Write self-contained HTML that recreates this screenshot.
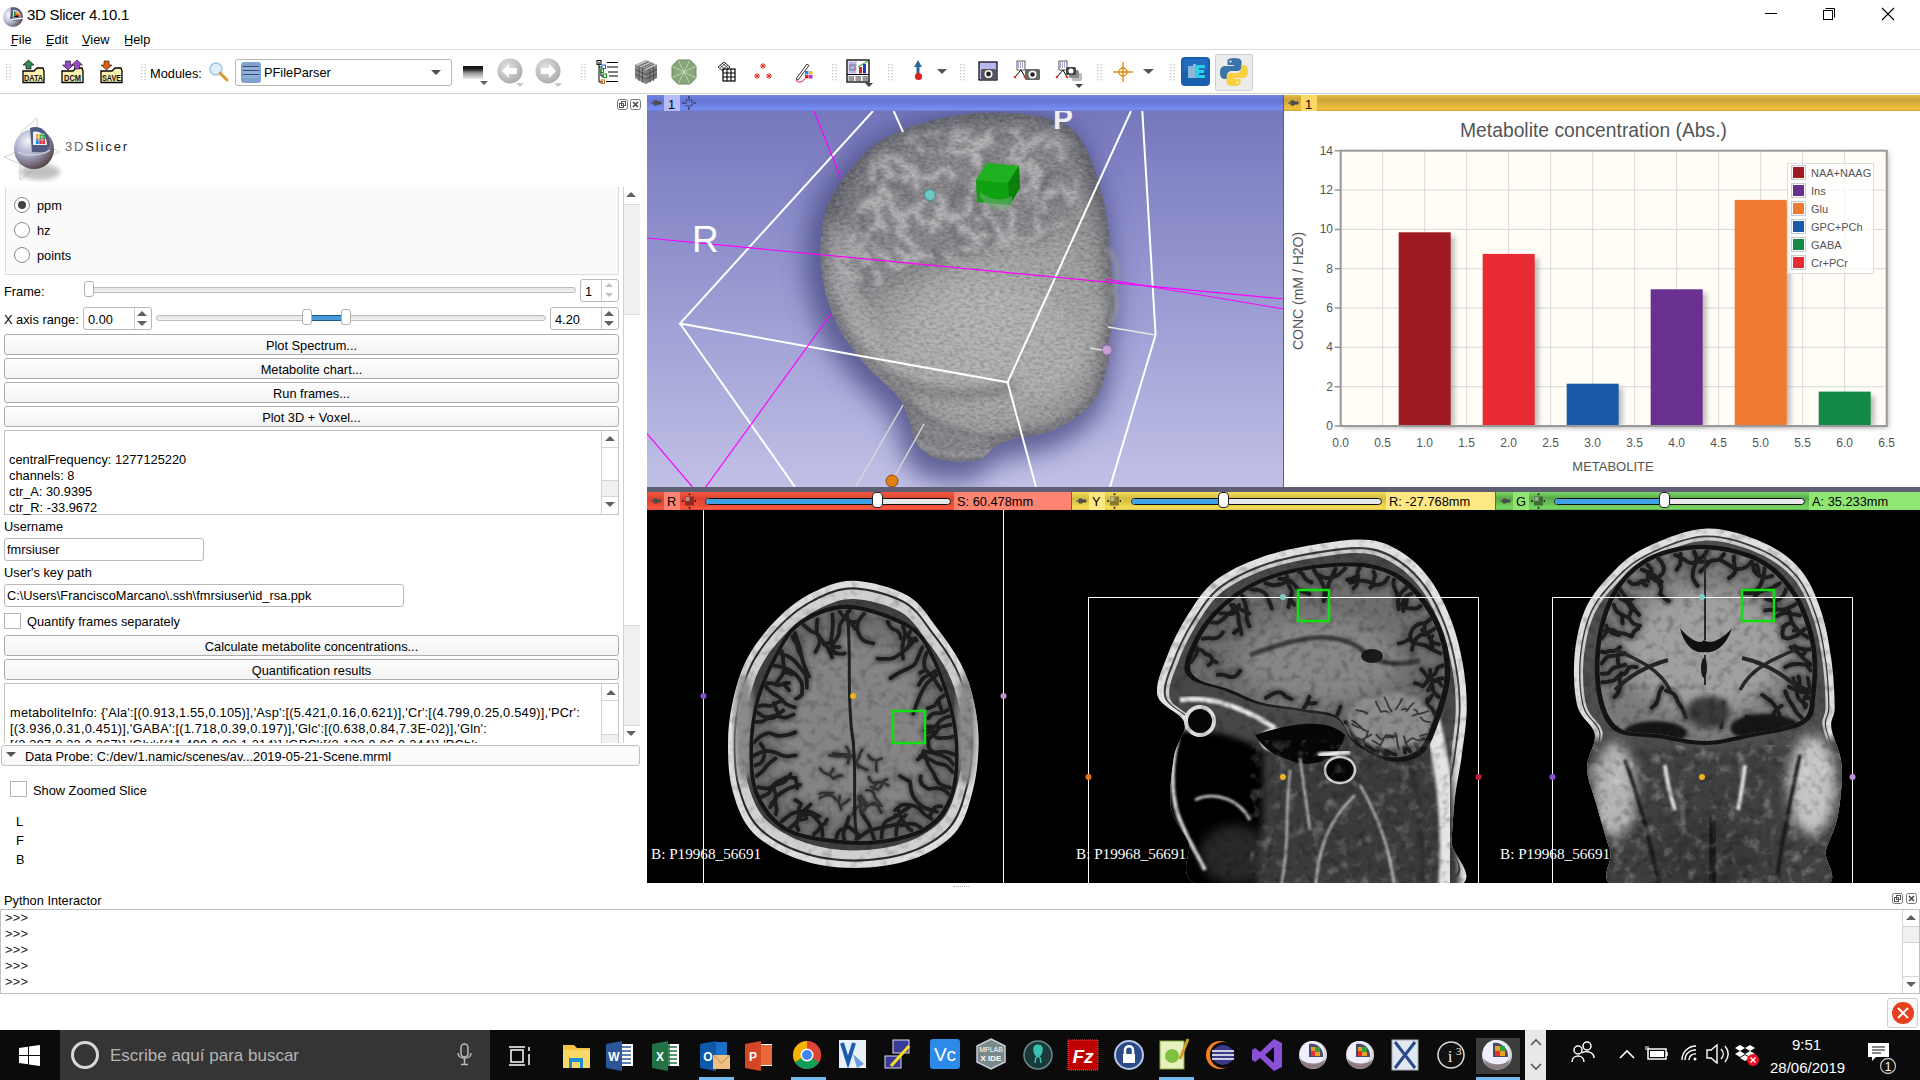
<!DOCTYPE html>
<html><head><meta charset="utf-8"><title>3D Slicer</title>
<style>
*{margin:0;padding:0;box-sizing:border-box}
html,body{width:1920px;height:1080px;overflow:hidden;background:#fff}
body{position:relative;font-family:"Liberation Sans",sans-serif;font-size:12.8px;color:#000}
.a{position:absolute}
.t{position:absolute;white-space:pre;line-height:1;margin-top:1px}
.hl{position:absolute;height:1px;background:#d6d6d6}
.btn{position:absolute;left:4px;width:615px;height:21px;border:1px solid #adadad;border-radius:3px;background:linear-gradient(#fdfdfd,#f3f3f3);text-align:center;line-height:21px;font-size:12.8px}
.inp{position:absolute;border:1px solid #b9b9b9;border-radius:2px;background:#fff}
.cb{position:absolute;width:17px;height:16px;border:1px solid #b5b5b5;background:#fff}
.radio{position:absolute;width:16px;height:16px;border:1px solid #8a8a8a;border-radius:50%;background:#fff}
.sb{position:absolute;background:#fff;border:1px solid #cfcfcf}
.tri-up{position:absolute;width:0;height:0;border-left:5px solid transparent;border-right:5px solid transparent;border-bottom:5px solid #606060}
.tri-dn{position:absolute;width:0;height:0;border-left:5px solid transparent;border-right:5px solid transparent;border-top:5px solid #606060}
.grip{position:absolute;width:3px;border-left:2px dotted #c8c8c8}

</style></head><body>
<!-- title bar -->
<svg class="a" style="left:1px;top:3px" width="24" height="24" viewBox="0 0 24 24">
 <defs><radialGradient id="sph" cx="30%" cy="40%" r="80%"><stop offset="0" stop-color="#fbfbfe"/><stop offset=".5" stop-color="#aeb2cc"/><stop offset=".85" stop-color="#6a5060"/><stop offset="1" stop-color="#402020"/></radialGradient></defs>
 <circle cx="12" cy="14" r="10" fill="url(#sph)"/>
 <path d="M10 4.5 C15 3.5 21 7 21.5 13 L21 16 C17 18 12 18 9 17.5 Z" fill="#5a6080"/>
 <path d="M12 7 C16 6.5 19.5 9 19.5 13.5 L12 14.5 Z" fill="#dde4ea"/>
 <path d="M13 8 L18.5 10 L18.5 13.5 L13 14Z" fill="#f0a020"/>
 <path d="M13 11 L18.5 12 L18.5 13.5 L13 14Z" fill="#e03018"/>
 <path d="M13 8 L14.5 8.5 L14.5 14 L13 14Z" fill="#208a40"/>
 <path d="M12 14 L16 12.5 L18 14Z" fill="#111"/>
 <path d="M9 17 C13 16 18 16 21.5 15" stroke="#f4f4f8" stroke-width="1.5" fill="none"/>
</svg>
<div class="t" style="left:27px;top:6px;font-size:15px;letter-spacing:-.3px;color:#000">3D Slicer 4.10.1</div>
<div class="a" style="left:1765px;top:13px;width:12px;height:1px;background:#000"></div>
<svg class="a" style="left:1822px;top:7px" width="14" height="14"><rect x="1.5" y="3.5" width="9" height="9" fill="none" stroke="#000"/><path d="M3.5 1.5 H12.5 V10.5" fill="none" stroke="#000"/></svg>
<svg class="a" style="left:1881px;top:7px" width="14" height="14"><path d="M1 1 L13 13 M13 1 L1 13" stroke="#000" stroke-width="1.1"/></svg>
<!-- menu -->
<div class="t" style="left:11px;top:33px">File</div>
<div class="t" style="left:46px;top:33px">Edit</div>
<div class="t" style="left:82px;top:33px">View</div>
<div class="t" style="left:124px;top:33px">Help</div>
<div class="a" style="left:11px;top:45px;width:6px;height:1px;background:#000"></div>
<div class="a" style="left:46px;top:45px;width:6px;height:1px;background:#000"></div>
<div class="a" style="left:82px;top:45px;width:7px;height:1px;background:#000"></div>
<div class="a" style="left:125px;top:45px;width:7px;height:1px;background:#000"></div>
<div class="hl" style="left:0;top:49px;width:1920px;background:#dadada"></div>
<!-- toolbar -->
<svg class="a" style="left:6px;top:64px" width="6" height="17" fill="#c4c4c4"><rect x="0" y="0" width="1.3" height="1.3"/><rect x="3.5" y="0" width="1.3" height="1.3"/><rect x="0" y="3" width="1.3" height="1.3"/><rect x="3.5" y="3" width="1.3" height="1.3"/><rect x="0" y="6" width="1.3" height="1.3"/><rect x="3.5" y="6" width="1.3" height="1.3"/><rect x="0" y="9" width="1.3" height="1.3"/><rect x="3.5" y="9" width="1.3" height="1.3"/><rect x="0" y="12" width="1.3" height="1.3"/><rect x="3.5" y="12" width="1.3" height="1.3"/><rect x="0" y="15" width="1.3" height="1.3"/><rect x="3.5" y="15" width="1.3" height="1.3"/></svg>
<svg class="a" style="left:20px;top:57px" width="130" height="30" viewBox="0 0 130 30">
 <g font-family="Liberation Sans" font-weight="bold" font-size="9" text-anchor="middle">
  <path d="M3 14 H14 L17 11 H23 L24 14 V25.5 H3Z" fill="#fbefb0" stroke="#000" stroke-width="1.3"/>
  <text x="13.5" y="24" fill="#111" font-size="8.5" textLength="19" lengthAdjust="spacingAndGlyphs">DATA</text>
  <path d="M8.5 3 L14 8 H11 V12 H6 V8 H3Z" fill="#2f8a55" stroke="#111" stroke-width=".7"/>
  <path d="M42 14 H53 L56 11 H62 L63 14 V25.5 H42Z" fill="#fbefb0" stroke="#000" stroke-width="1.3"/>
  <text x="52.5" y="24" fill="#111" font-size="8.5" textLength="17" lengthAdjust="spacingAndGlyphs">DCM</text>
  <path d="M48 13 L42.5 8 H45.5 V4 H50.5 V8 H53.5Z" fill="#9a4ac8" stroke="#111" stroke-width=".6"/>
  <path d="M57 3 L62.5 8 H59.5 V12 H54.5 V8 H51.5Z" fill="#9a4ac8" stroke="#111" stroke-width=".6"/>
  <path d="M81 14 H92 L95 11 H101 L102 14 V25.5 H81Z" fill="#fbefb0" stroke="#000" stroke-width="1.3"/>
  <text x="91.5" y="24" fill="#111" font-size="8.5" textLength="19" lengthAdjust="spacingAndGlyphs">SAVE</text>
  <path d="M86.5 13 L81 8 H84 V4 H89 V8 H92Z" fill="#e25c1a" stroke="#111" stroke-width=".6"/>
 </g>
</svg>
<svg class="a" style="left:141px;top:64px" width="6" height="17" fill="#c4c4c4"><rect x="0" y="0" width="1.3" height="1.3"/><rect x="3.5" y="0" width="1.3" height="1.3"/><rect x="0" y="3" width="1.3" height="1.3"/><rect x="3.5" y="3" width="1.3" height="1.3"/><rect x="0" y="6" width="1.3" height="1.3"/><rect x="3.5" y="6" width="1.3" height="1.3"/><rect x="0" y="9" width="1.3" height="1.3"/><rect x="3.5" y="9" width="1.3" height="1.3"/><rect x="0" y="12" width="1.3" height="1.3"/><rect x="3.5" y="12" width="1.3" height="1.3"/><rect x="0" y="15" width="1.3" height="1.3"/><rect x="3.5" y="15" width="1.3" height="1.3"/></svg>
<div class="t" style="left:150px;top:67px">Modules:</div>
<svg class="a" style="left:208px;top:61px" width="22" height="22"><circle cx="8" cy="8" r="6" fill="#dff0fb" stroke="#9cc6e0" stroke-width="1.5"/><path d="M12 12 L19 19" stroke="#d99a3a" stroke-width="3" stroke-linecap="round"/></svg>
<div class="a" style="left:235px;top:59px;width:217px;height:27px;border:1px solid #b8b8b8;border-radius:3px;background:#fff"></div>
<div class="a" style="left:241px;top:62px;width:20px;height:21px;border-radius:3px;background:#7fa3cf"></div>
<div class="a" style="left:243px;top:66px;width:16px;height:12px;background:repeating-linear-gradient(#3b4a6a 0 1px,#8fb0d8 1px 4px)"></div>
<div class="t" style="left:264px;top:66px;font-size:12.8px">PFileParser</div>
<div class="tri-dn" style="left:431px;top:70px;border-top-color:#505050"></div>
<!-- window level -->
<div class="a" style="left:463px;top:66px;width:20px;height:13px;background:linear-gradient(#111 0,#222 25%,#999 55%,#eee 100%)"></div>
<div class="tri-dn" style="left:480px;top:81px;border-left-width:4px;border-right-width:4px;border-top-width:4px"></div>
<svg class="a" style="left:496px;top:57px" width="80" height="32">
 <defs><radialGradient id="gb" cx="40%" cy="35%" r="70%"><stop offset="0" stop-color="#e4e4e4"/><stop offset="1" stop-color="#a9a9a9"/></radialGradient></defs>
 <circle cx="14" cy="14" r="12.5" fill="url(#gb)"/><path d="M6 14 L13 7 V11 H21 V17 H13 V21Z" fill="#fff"/>
 <circle cx="52" cy="14" r="12.5" fill="url(#gb)"/><path d="M60 14 L53 7 V11 H45 V17 H53 V21Z" fill="#fff"/>
 <path d="M20 26 H28 L24 30Z M58 26 H66 L62 30Z" fill="#c8c8c8"/>
</svg>
<svg class="a" style="left:581px;top:64px" width="6" height="17" fill="#c4c4c4"><rect x="0" y="0" width="1.3" height="1.3"/><rect x="3.5" y="0" width="1.3" height="1.3"/><rect x="0" y="3" width="1.3" height="1.3"/><rect x="3.5" y="3" width="1.3" height="1.3"/><rect x="0" y="6" width="1.3" height="1.3"/><rect x="3.5" y="6" width="1.3" height="1.3"/><rect x="0" y="9" width="1.3" height="1.3"/><rect x="3.5" y="9" width="1.3" height="1.3"/><rect x="0" y="12" width="1.3" height="1.3"/><rect x="3.5" y="12" width="1.3" height="1.3"/><rect x="0" y="15" width="1.3" height="1.3"/><rect x="3.5" y="15" width="1.3" height="1.3"/></svg>
<svg class="a" style="left:596px;top:60px" width="24" height="24"><path d="M3 2 V22 H7 M3 7 H6 M5 9 V16 H8" fill="none" stroke="#000"/><rect x="1" y="0.5" width="4" height="4" fill="none" stroke="#000"/><rect x="6" y="5" width="3.5" height="3.5" fill="none" stroke="#1a6ad0"/><rect x="4" y="9" width="3.5" height="3.5" fill="none" stroke="#1a8a1a"/><rect x="7" y="14" width="3.5" height="3.5" fill="none" stroke="#1a8a1a"/><rect x="5" y="20" width="3.5" height="3.5" fill="none" stroke="#e07010"/><path d="M11 2.5 H22 M11 7 H22 M12 12 H22 M13 16 H22 M10 21.5 H22" stroke="#000"/></svg>
<svg class="a" style="left:632px;top:57px" width="28" height="30"><path d="M3 8 L14 3 L25 8 V21 L14 27 L3 21Z" fill="#7a7a7a"/><path d="M3 8 L14 13 L25 8 L14 3Z" fill="#bdbdbd"/><path d="M14 13 V27 L3 21 V8Z" fill="#8a8a8a"/><path d="M6 9.5 L17 4.5 M9 11 L20 6 M11 12 L22 7 M3 12.5 L14 17.5 L25 12.5 M3 17 L14 22 L25 17 M7 10 V24 M10.5 11.5 V25.5 M18 11.5 V25.5 M21.5 10 V24" stroke="#444" stroke-width=".8" fill="none"/></svg>
<svg class="a" style="left:670px;top:58px" width="28" height="28"><path d="M8 2 H20 L26 8 V20 L20 26 H8 L2 20 V8Z" fill="#89a57a" stroke="#6a8a5c"/><path d="M8 2 L14 14 L20 2 M26 8 L14 14 L26 20 M20 26 L14 14 L8 26 M2 20 L14 14 L2 8" stroke="#c8dcb8" stroke-width=".8" fill="none"/></svg>
<svg class="a" style="left:716px;top:61px" width="22" height="22"><path d="M2 6 L8 1 L14 6 L8 11Z" fill="none" stroke="#000" stroke-width=".8"/><path d="M4 7 L10 2 M6 9 L12 4 M4 4 L10 9 M6 2 L12 7" stroke="#000" stroke-width=".6"/><rect x="7" y="8" width="12" height="12" fill="#fff" stroke="#000" stroke-width="1.2"/><path d="M11 8 V20 M15 8 V20 M7 12 H19 M7 16 H19" stroke="#000" stroke-width="1.1"/></svg>
<svg class="a" style="left:752px;top:61px" width="22" height="22" stroke="#e03020" stroke-width="1"><path d="M11 2 V8 M8 5 H14 M9 3 L13 7 M13 3 L9 7 M5 12 V18 M2 15 H8 M3 13 L7 17 M7 13 L3 17 M17 12 V18 M14 15 H20 M15 13 L19 17 M19 13 L15 17"/></svg>
<svg class="a" style="left:793px;top:60px" width="22" height="24"><path d="M3 19 L14 4 L16 5.5 L5 20Z" fill="#fff" stroke="#333" stroke-width="1"/><rect x="12" y="11" width="3.5" height="3.5" fill="#2a8ae0"/><rect x="16" y="11" width="3.5" height="3.5" fill="#f0c020"/><rect x="12" y="15" width="3.5" height="3.5" fill="#e02030"/><rect x="16" y="15" width="3.5" height="3.5" fill="#b030d0"/><path d="M3 20 Q6 25 12 19" fill="none" stroke="#e02030" stroke-width="1"/></svg>
<svg class="a" style="left:832px;top:64px" width="6" height="17" fill="#c4c4c4"><rect x="0" y="0" width="1.3" height="1.3"/><rect x="3.5" y="0" width="1.3" height="1.3"/><rect x="0" y="3" width="1.3" height="1.3"/><rect x="3.5" y="3" width="1.3" height="1.3"/><rect x="0" y="6" width="1.3" height="1.3"/><rect x="3.5" y="6" width="1.3" height="1.3"/><rect x="0" y="9" width="1.3" height="1.3"/><rect x="3.5" y="9" width="1.3" height="1.3"/><rect x="0" y="12" width="1.3" height="1.3"/><rect x="3.5" y="12" width="1.3" height="1.3"/><rect x="0" y="15" width="1.3" height="1.3"/><rect x="3.5" y="15" width="1.3" height="1.3"/></svg>
<svg class="a" style="left:846px;top:59px" width="28" height="30"><rect x="1" y="1" width="22" height="22" fill="#fff" stroke="#000" stroke-width="1.3"/><rect x="2.5" y="2.5" width="8" height="12" fill="#b8b8e8"/><rect x="4" y="6" width="5" height="5" fill="none" stroke="#555" stroke-width=".7"/><rect x="12" y="2.5" width="10" height="12" fill="#fff"/><rect x="13" y="8" width="3" height="6.5" fill="#e02020"/><rect x="17" y="5" width="3" height="9.5" fill="#2040c0"/><path d="M12 8 L22 2" stroke="#20a020"/><path d="M1 15.5 H23" stroke="#000"/><rect x="2.5" y="17" width="5.5" height="5" fill="#999"/><rect x="9.5" y="17" width="5.5" height="5" fill="#999"/><rect x="16.5" y="17" width="5.5" height="5" fill="#999"/><path d="M19 24 H27 L23 28Z" fill="#444"/></svg>
<svg class="a" style="left:888px;top:64px" width="6" height="17" fill="#c4c4c4"><rect x="0" y="0" width="1.3" height="1.3"/><rect x="3.5" y="0" width="1.3" height="1.3"/><rect x="0" y="3" width="1.3" height="1.3"/><rect x="3.5" y="3" width="1.3" height="1.3"/><rect x="0" y="6" width="1.3" height="1.3"/><rect x="3.5" y="6" width="1.3" height="1.3"/><rect x="0" y="9" width="1.3" height="1.3"/><rect x="3.5" y="9" width="1.3" height="1.3"/><rect x="0" y="12" width="1.3" height="1.3"/><rect x="3.5" y="12" width="1.3" height="1.3"/><rect x="0" y="15" width="1.3" height="1.3"/><rect x="3.5" y="15" width="1.3" height="1.3"/></svg>
<svg class="a" style="left:908px;top:59px" width="44" height="24"><path d="M10 1 L14 8 H11.5 V15 H8.5 V8 H6Z" fill="#2a6a9a"/><circle cx="10.5" cy="17.5" r="3.6" fill="#e02020"/><path d="M29 10 H39 L34 15Z" fill="#555"/></svg>
<svg class="a" style="left:960px;top:64px" width="6" height="17" fill="#c4c4c4"><rect x="0" y="0" width="1.3" height="1.3"/><rect x="3.5" y="0" width="1.3" height="1.3"/><rect x="0" y="3" width="1.3" height="1.3"/><rect x="3.5" y="3" width="1.3" height="1.3"/><rect x="0" y="6" width="1.3" height="1.3"/><rect x="3.5" y="6" width="1.3" height="1.3"/><rect x="0" y="9" width="1.3" height="1.3"/><rect x="3.5" y="9" width="1.3" height="1.3"/><rect x="0" y="12" width="1.3" height="1.3"/><rect x="3.5" y="12" width="1.3" height="1.3"/><rect x="0" y="15" width="1.3" height="1.3"/><rect x="3.5" y="15" width="1.3" height="1.3"/></svg>
<svg class="a" style="left:978px;top:61px" width="22" height="22"><rect x="1" y="1" width="18" height="18" fill="#b8b8f0" stroke="#000" stroke-width="1.2"/><rect x="3" y="8" width="15" height="10" rx="1.5" fill="#555"/><circle cx="10.5" cy="13" r="4" fill="#fff"/><circle cx="10.5" cy="13" r="2.4" fill="#222"/></svg>
<svg class="a" style="left:1012px;top:60px" width="30" height="24"><rect x="5" y="1" width="8" height="9" fill="#fff" stroke="#333" stroke-width=".8"/><path d="M6 3 H12 M6 5 H12 M6 7 H12" stroke="#55a" stroke-dasharray="1 1"/><path d="M9 10 L3 17 M9 10 L13 17" stroke="#000"/><circle cx="3" cy="17" r="1.3" fill="#e03020"/><circle cx="13" cy="17" r="1.3" fill="#e03020"/><rect x="13" y="9" width="15" height="11" rx="1.5" fill="#666"/><circle cx="20.5" cy="14.5" r="4" fill="#fff"/><circle cx="20.5" cy="14.5" r="2.3" fill="#222"/></svg>
<svg class="a" style="left:1054px;top:60px" width="32" height="30"><rect x="5" y="1" width="8" height="9" fill="#fff" stroke="#333" stroke-width=".8"/><path d="M6 3 H12 M6 5 H12 M6 7 H12" stroke="#55a" stroke-dasharray="1 1"/><path d="M9 10 L3 17 M9 10 L13 17" stroke="#000"/><circle cx="3" cy="17" r="1.3" fill="#e03020"/><circle cx="13" cy="17" r="1.3" fill="#e03020"/><rect x="18" y="13" width="10" height="8" rx="1.5" fill="#bbb"/><rect x="15" y="10" width="10" height="8" rx="1.5" fill="#888"/><rect x="12" y="7" width="10" height="8" rx="1.5" fill="#444"/><circle cx="17" cy="11" r="2.5" fill="#fff"/><path d="M21 24 H29 L25 28Z" fill="#444"/></svg>
<svg class="a" style="left:1097px;top:64px" width="6" height="17" fill="#c4c4c4"><rect x="0" y="0" width="1.3" height="1.3"/><rect x="3.5" y="0" width="1.3" height="1.3"/><rect x="0" y="3" width="1.3" height="1.3"/><rect x="3.5" y="3" width="1.3" height="1.3"/><rect x="0" y="6" width="1.3" height="1.3"/><rect x="3.5" y="6" width="1.3" height="1.3"/><rect x="0" y="9" width="1.3" height="1.3"/><rect x="3.5" y="9" width="1.3" height="1.3"/><rect x="0" y="12" width="1.3" height="1.3"/><rect x="3.5" y="12" width="1.3" height="1.3"/><rect x="0" y="15" width="1.3" height="1.3"/><rect x="3.5" y="15" width="1.3" height="1.3"/></svg>
<svg class="a" style="left:1110px;top:60px" width="48" height="24"><g stroke="#e08a10" stroke-width="1.4" fill="none"><path d="M13 2 V22 M3 12 H23"/><circle cx="13" cy="12" r="4"/></g><path d="M33 9 H44 L38.5 14Z" fill="#555"/></svg>
<svg class="a" style="left:1170px;top:64px" width="6" height="17" fill="#c4c4c4"><rect x="0" y="0" width="1.3" height="1.3"/><rect x="3.5" y="0" width="1.3" height="1.3"/><rect x="0" y="3" width="1.3" height="1.3"/><rect x="3.5" y="3" width="1.3" height="1.3"/><rect x="0" y="6" width="1.3" height="1.3"/><rect x="3.5" y="6" width="1.3" height="1.3"/><rect x="0" y="9" width="1.3" height="1.3"/><rect x="3.5" y="9" width="1.3" height="1.3"/><rect x="0" y="12" width="1.3" height="1.3"/><rect x="3.5" y="12" width="1.3" height="1.3"/><rect x="0" y="15" width="1.3" height="1.3"/><rect x="3.5" y="15" width="1.3" height="1.3"/></svg>
<svg class="a" style="left:1180px;top:56px" width="32" height="32"><rect x="1" y="1" width="29" height="29" rx="4" fill="#1a5eb0"/><rect x="3" y="3" width="25" height="12" rx="3" fill="#2a74c8" opacity=".6"/><path d="M8 10 H13 V8 H16 V10 V22 H8Z" fill="#8ab8d8"/><path d="M15 9 H25 V12 H19 V14 H24 V17 H19 V19 H25 V22 H15Z" fill="#2ad0e8"/></svg>
<div class="a" style="left:1215px;top:54px;width:38px;height:37px;border:1px solid #cfcfcf;border-radius:2px;background:#ececec"></div>
<svg class="a" style="left:1218px;top:56px" width="32" height="32" viewBox="0 0 32 32"><path d="M15.8 2 C9 2 9.5 5 9.5 5 V9 H16 V10 H7 C7 10 2 9.5 2 16.5 C2 23.5 6.5 23 6.5 23 H9 V19.5 C9 19.5 9 15 13.5 15 H19.5 C19.5 15 23.5 15 23.5 11 V5.5 C23.5 5.5 24 2 15.8 2Z" fill="#3a74a8"/><circle cx="12.5" cy="5.5" r="1.1" fill="#fff"/><path d="M16.2 30 C23 30 22.5 27 22.5 27 V23 H16 V22 H25 C25 22 30 22.5 30 15.5 C30 8.5 25.5 9 25.5 9 H23 V12.5 C23 12.5 23 17 18.5 17 H12.5 C12.5 17 8.5 17 8.5 21 V26.5 C8.5 26.5 8 30 16.2 30Z" fill="#f8d040"/><circle cx="19.5" cy="26.5" r="1.1" fill="#fff"/></svg>
<div class="hl" style="left:0;top:93px;width:1920px;background:#d2d2d2"></div>
<!-- left panel -->
<svg class="a" style="left:617px;top:99px" width="24" height="12"><rect x="0.5" y="0.5" width="10" height="10" rx="2" fill="none" stroke="#777"/><rect x="2.5" y="4.5" width="4" height="4" fill="none" stroke="#555"/><rect x="4.5" y="2.5" width="4" height="4" fill="none" stroke="#555"/><rect x="13.5" y="0.5" width="10" height="10" rx="2" fill="none" stroke="#777"/><path d="M16 3 L21 8 M21 3 L16 8" stroke="#444" stroke-width="1.6"/></svg>
<svg class="a" style="left:0px;top:112px" width="70" height="72" viewBox="0 0 70 72">
 <defs><radialGradient id="lsph" cx="35%" cy="30%" r="80%"><stop offset="0" stop-color="#f6f6fb"/><stop offset=".5" stop-color="#9ea2c0"/><stop offset="1" stop-color="#4a3030"/></radialGradient>
 <filter id="blur2"><feGaussianBlur stdDeviation="2.5"/></filter></defs>
 <path d="M37 6 L38 54 L20 68 L21 20Z M4 45 L40 30 L60 40 L25 54Z" fill="none" stroke="#c8c8c8" stroke-width=".8"/>
 <ellipse cx="40" cy="60" rx="20" ry="8" fill="#999" opacity=".6" filter="url(#blur2)"/>
 <circle cx="34" cy="37" r="20" fill="url(#lsph)"/>
 <path d="M30 16 C40 12 50 20 50 33 L46 40 L32 40 Z" fill="#505a80"/>
 <path d="M33 20 C40 18 47 24 47 33 L33 33Z" fill="#e8eef5"/>
 <rect x="36" y="22" width="9" height="10" fill="#e8a020"/><rect x="36" y="27" width="4" height="5" fill="#2080e0"/><rect x="40" y="22" width="5" height="5" fill="#30a040"/><rect x="40" y="27" width="5" height="5" fill="#e03030"/>
 <path d="M36 22 H45 M36 25 H45 M36 28 H45 M39 22 V32 M42 22 V32" stroke="#fff" stroke-width=".5"/>
 <path d="M18 40 C25 44 42 44 50 38" stroke="#ccd" stroke-width="1.5" fill="none"/>
</svg>
<div class="t" style="left:65px;top:139px;font-size:13px;letter-spacing:1.85px;color:#666">3D<span style="color:#222">Slicer</span></div>
<!-- group box -->
<div class="a" style="left:5px;top:187px;width:614px;height:88px;border:1px solid #dcdcdc;border-top:none;border-radius:0 0 2px 2px;background:#fafafa"></div>
<div class="radio" style="left:14px;top:197px"></div><div class="a" style="left:18px;top:201px;width:8px;height:8px;border-radius:50%;background:#444"></div>
<div class="radio" style="left:14px;top:222px"></div>
<div class="radio" style="left:14px;top:247px"></div>
<div class="t" style="left:37px;top:199px">ppm</div>
<div class="t" style="left:37px;top:224px">hz</div>
<div class="t" style="left:37px;top:249px">points</div>
<!-- frame -->
<div class="t" style="left:4px;top:285px">Frame:</div>
<div class="a" style="left:86px;top:287px;width:490px;height:6px;border:1px solid #bdbdbd;border-radius:3px;background:linear-gradient(#e6e6e6,#f2f2f2)"></div>
<div class="a" style="left:84px;top:281px;width:10px;height:16px;border:1px solid #b0b0b0;border-radius:3px;background:#fff"></div>
<div class="inp" style="left:580px;top:279px;width:39px;height:23px;border-radius:3px"></div>
<div class="a" style="left:601px;top:280px;width:1px;height:21px;background:#d0d0d0"></div>
<div class="t" style="left:585px;top:285px">1</div>
<div class="tri-up" style="left:605px;top:283px;border-bottom-color:#c0c0c0;border-left-width:4px;border-right-width:4px;border-bottom-width:4px"></div>
<div class="tri-dn" style="left:605px;top:293px;border-top-color:#c0c0c0;border-left-width:4px;border-right-width:4px;border-top-width:4px"></div>
<!-- x axis range -->
<div class="t" style="left:4px;top:313px">X axis range:</div>
<div class="inp" style="left:83px;top:307px;width:69px;height:23px;border-radius:3px"></div>
<div class="a" style="left:134px;top:308px;width:1px;height:21px;background:#d0d0d0"></div>
<div class="t" style="left:88px;top:313px">0.00</div>
<div class="tri-up" style="left:137px;top:311px;border-left-width:5px;border-right-width:5px;border-bottom-width:5px"></div>
<div class="tri-dn" style="left:137px;top:321px;border-left-width:5px;border-right-width:5px;border-top-width:5px"></div>
<div class="a" style="left:156px;top:315px;width:390px;height:6px;border:1px solid #bdbdbd;border-radius:3px;background:linear-gradient(#e6e6e6,#f2f2f2)"></div>
<div class="a" style="left:309px;top:315px;width:35px;height:6px;border:1px solid #1a5a8a;background:#4a9ad8"></div>
<div class="a" style="left:302px;top:309px;width:10px;height:16px;border:1px solid #b0b0b0;border-radius:3px;background:#fff"></div>
<div class="a" style="left:341px;top:309px;width:10px;height:16px;border:1px solid #b0b0b0;border-radius:3px;background:#fff"></div>
<div class="inp" style="left:550px;top:307px;width:69px;height:23px;border-radius:3px"></div>
<div class="a" style="left:601px;top:308px;width:1px;height:21px;background:#d0d0d0"></div>
<div class="t" style="left:555px;top:313px">4.20</div>
<div class="tri-up" style="left:604px;top:311px;border-left-width:5px;border-right-width:5px;border-bottom-width:5px"></div>
<div class="tri-dn" style="left:604px;top:321px;border-left-width:5px;border-right-width:5px;border-top-width:5px"></div>
<!-- buttons -->
<div class="btn" style="top:334px">Plot Spectrum...</div>
<div class="btn" style="top:358px">Metabolite chart...</div>
<div class="btn" style="top:382px">Run frames...</div>
<div class="btn" style="top:406px">Plot 3D + Voxel...</div>
<!-- text area 1 -->
<div class="a" style="left:4px;top:430px;width:615px;height:85px;border:1px solid #c4c4c4;background:#fff"></div>
<div class="t" style="left:9px;top:451px;line-height:16px">centralFrequency: 1277125220
channels: 8
ctr_A: 30.9395
ctr_R: -33.9672</div>
<div class="a" style="left:601px;top:431px;width:17px;height:83px;border-left:1px solid #d4d4d4;background:#fff"></div>
<div class="a" style="left:601px;top:447px;width:17px;height:1px;background:#d4d4d4"></div>
<div class="a" style="left:602px;top:480px;width:16px;height:17px;background:#f0f0f0;border-top:1px solid #d4d4d4;border-bottom:1px solid #d4d4d4"></div>
<div class="tri-up" style="left:605px;top:436px"></div>
<div class="tri-dn" style="left:605px;top:502px"></div>
<!-- username -->
<div class="t" style="left:4px;top:520px">Username</div>
<div class="inp" style="left:4px;top:538px;width:200px;height:23px;border-radius:3px"></div>
<div class="t" style="left:7px;top:543px">fmrsiuser</div>
<div class="t" style="left:4px;top:566px">User's key path</div>
<div class="inp" style="left:4px;top:584px;width:400px;height:23px;border-radius:3px"></div>
<div class="t" style="left:7px;top:589px">C:\Users\FranciscoMarcano\.ssh\fmrsiuser\id_rsa.ppk</div>
<div class="cb" style="left:4px;top:613px"></div>
<div class="t" style="left:27px;top:615px">Quantify frames separately</div>
<div class="btn" style="top:635px">Calculate metabolite concentrations...</div>
<div class="btn" style="top:659px">Quantification results</div>
<!-- text area 2 -->
<div class="a" style="left:4px;top:683px;width:615px;height:60px;border:1px solid #c4c4c4;border-bottom:none;background:#fff;overflow:hidden">
<div class="t" style="left:5px;top:20px;line-height:16px;letter-spacing:.22px">metaboliteInfo: {'Ala':[(0.913,1.55,0.105)],'Asp':[(5.421,0.16,0.621)],'Cr':[(4.799,0.25,0.549)],'PCr':
[(3.936,0.31,0.451)],'GABA':[(1.718,0.39,0.197)],'Glc':[(0.638,0.84,7.3E-02)],'Gln':
[(2.397,0.33,0.367)],'Glu':[(11.499,0.98,1.214)],'GPC':[(2.133,0.06,0.344)],'PCh':</div>
<div class="a" style="left:596px;top:0;width:18px;height:60px;border-left:1px solid #d4d4d4;background:#fff"></div>
<div class="a" style="left:596px;top:16px;width:18px;height:1px;background:#d4d4d4"></div>
<div class="tri-up" style="left:601px;top:6px"></div>
<div class="a" style="left:597px;top:50px;width:17px;height:10px;background:#f0f0f0;border-top:1px solid #d4d4d4"></div>
</div>
<!-- outer scrollbar -->
<div class="a" style="left:623px;top:187px;width:1px;height:556px;background:#d0d0d0"></div>
<div class="tri-up" style="left:626px;top:192px"></div>
<div class="a" style="left:624px;top:204px;width:16px;height:111px;background:#f0f0f0;border-top:1px solid #dcdcdc;border-bottom:1px solid #dcdcdc"></div>
<div class="a" style="left:624px;top:625px;width:16px;height:101px;background:#f0f0f0;border-top:1px solid #dcdcdc;border-bottom:1px solid #dcdcdc"></div>
<div class="tri-dn" style="left:626px;top:731px"></div>
<!-- data probe -->
<div class="a" style="left:1px;top:745px;width:639px;height:21px;border:1px solid #c0c0c0;border-radius:3px;background:linear-gradient(#fefefe,#f7f7f7)"></div>
<div class="tri-dn" style="left:6px;top:752px;border-top-color:#555;border-left-width:5px;border-right-width:5px;border-top-width:5px"></div>
<div class="t" style="left:25px;top:750px">Data Probe: C:/dev/1.namic/scenes/av...2019-05-21-Scene.mrml</div>
<div class="cb" style="left:10px;top:781px"></div>
<div class="t" style="left:33px;top:784px">Show Zoomed Slice</div>
<div class="t" style="left:16px;top:815px">L</div>
<div class="t" style="left:16px;top:834px">F</div>
<div class="t" style="left:16px;top:853px">B</div>
<!-- 3D view -->
<div class="a" style="left:647px;top:95px;width:637px;height:16px;background:linear-gradient(#7183e4 0,#6576d2 35%,#7186ec 75%,#7b90f2 88%,#6a7bd8 100%)"></div>
<div class="a" style="left:664px;top:95px;width:16px;height:16px;background:#b4bdf8"></div>
<svg class="a" style="left:650px;top:97px" width="12" height="12"><path d="M1 6 H4 M4 4 H7 V8 H4Z M7 5 H11 V7 H7" stroke="#444" fill="#555" stroke-width="1"/></svg>
<div class="t" style="left:668px;top:98px;font-size:12.8px">1</div>
<svg class="a" style="left:682px;top:96px" width="14" height="14"><g stroke="#2a2a50" stroke-width="1.2"><path d="M7 0 V3 M7 11 V14 M0 7 H3 M11 7 H14"/></g><rect x="4" y="4" width="6" height="6" fill="none" stroke="#2a2a50" stroke-dasharray="1.5 1"/></svg>
<svg class="a" style="left:647px;top:111px" width="637" height="376" viewBox="647 111 637 376">
<defs>
<linearGradient id="bg3d" x1="0" y1="0" x2="0" y2="1"><stop offset="0" stop-color="#7678bd"/><stop offset=".5" stop-color="#9a9bd2"/><stop offset="1" stop-color="#c0c0e6"/></linearGradient>
<radialGradient id="headg" cx="990" cy="320" r="175" gradientUnits="userSpaceOnUse"><stop offset="0" stop-color="#b2b2b2"/><stop offset=".55" stop-color="#a2a2a2"/><stop offset=".85" stop-color="#8e8e90"/><stop offset="1" stop-color="#707078"/></radialGradient>
<filter id="halo" x="-30%" y="-30%" width="160%" height="160%"><feGaussianBlur stdDeviation="12"/></filter>
<filter id="soft" x="-20%" y="-20%" width="140%" height="140%"><feGaussianBlur stdDeviation="8"/></filter>
<filter id="soft2" x="-20%" y="-20%" width="140%" height="140%"><feGaussianBlur stdDeviation="2"/></filter>
<filter id="soft4" x="-20%" y="-20%" width="140%" height="140%"><feGaussianBlur stdDeviation="4"/></filter>
<filter id="tex" x="0" y="0" width="100%" height="100%"><feTurbulence type="fractalNoise" baseFrequency="0.2 0.35" numOctaves="2" seed="7"/><feColorMatrix type="matrix" values="0 0 0 0 0  0 0 0 0 0  0 0 0 0 0  1.5 0 0 0 -0.6"/></filter>
<filter id="texw" x="0" y="0" width="100%" height="100%"><feTurbulence type="fractalNoise" baseFrequency="0.25 0.4" numOctaves="2" seed="17"/><feColorMatrix type="matrix" values="0 0 0 0 1  0 0 0 0 1  0 0 0 0 1  1.5 0 0 0 -0.65"/></filter>
<clipPath id="headclip"><path d="M897.6 131.9 C909.8 126.7 926.8 121.2 943.0 118.0 C959.2 114.8 977.7 112.7 995.0 112.7 C1012.3 112.7 1033.7 114.8 1047.0 118.0 C1060.3 121.2 1067.4 124.5 1075.0 132.0 C1082.6 139.5 1087.2 149.2 1092.5 163.0 C1097.8 176.8 1103.3 197.6 1106.5 215.0 C1109.7 232.4 1110.3 253.1 1111.7 267.6 C1113.1 282.1 1115.3 290.4 1115.0 302.0 C1114.7 313.6 1111.4 325.3 1110.0 337.0 C1108.6 348.7 1110.0 360.3 1106.5 372.0 C1103.0 383.7 1098.3 397.2 1089.0 407.0 C1079.7 416.8 1062.9 425.8 1050.7 431.0 C1038.5 436.2 1025.3 435.3 1016.0 438.0 C1006.7 440.7 1001.4 443.3 995.0 447.0 C988.6 450.7 986.4 457.8 977.7 460.0 C969.0 462.2 952.9 462.3 943.0 460.0 C933.1 457.7 924.3 453.2 918.5 446.0 C912.7 438.8 911.5 425.3 908.0 417.0 C904.5 408.7 905.1 405.2 897.6 396.0 C890.1 386.8 873.4 374.3 863.0 361.6 C852.6 348.9 842.0 335.7 835.0 320.0 C828.0 304.3 822.8 285.1 821.0 267.6 C819.2 250.1 821.0 229.5 824.5 215.0 C828.0 200.5 834.5 191.6 842.0 180.6 C849.5 169.6 860.5 157.1 869.8 149.0 C879.1 140.9 885.4 137.1 897.6 131.9 Z"/></clipPath>
<mask id="brainclip" maskUnits="userSpaceOnUse" x="647" y="111" width="637" height="376"><path d="M885.0 150.0 C903.7 136.3 934.2 131.3 960.0 128.0 C985.8 124.7 1021.3 126.3 1040.0 130.0 C1058.7 133.7 1065.3 138.3 1072.0 150.0 C1078.7 161.7 1083.7 185.8 1080.0 200.0 C1076.3 214.2 1063.3 226.7 1050.0 235.0 C1036.7 243.3 1016.7 245.5 1000.0 250.0 C983.3 254.5 966.7 256.2 950.0 262.0 C933.3 267.8 915.0 278.7 900.0 285.0 C885.0 291.3 870.0 302.5 860.0 300.0 C850.0 297.5 842.0 285.0 840.0 270.0 C838.0 255.0 840.5 230.0 848.0 210.0 C855.5 190.0 866.3 163.7 885.0 150.0 Z" fill="#fff" filter="url(#soft)"/></mask>
</defs>
<rect x="647" y="111" width="637" height="376" fill="url(#bg3d)"/>
<path d="M893.0 121.8 C905.9 116.3 923.9 110.5 941.1 107.1 C958.3 103.7 977.8 101.5 996.2 101.5 C1014.6 101.5 1037.2 103.7 1051.3 107.1 C1065.5 110.5 1073.0 114.0 1081.0 121.9 C1089.0 129.9 1094.0 140.1 1099.5 154.8 C1105.1 169.4 1111.0 191.4 1114.4 209.9 C1117.8 228.4 1118.4 250.3 1119.9 265.7 C1121.4 281.0 1123.7 289.9 1123.4 302.1 C1123.1 314.4 1119.6 326.9 1118.1 339.2 C1116.6 351.6 1118.1 364.0 1114.4 376.3 C1110.7 388.7 1105.7 403.0 1095.8 413.4 C1086.0 423.8 1068.1 433.4 1055.2 438.9 C1042.3 444.3 1028.3 443.5 1018.5 446.3 C1008.6 449.1 1003.0 451.9 996.2 455.8 C989.4 459.7 987.0 467.3 977.9 469.6 C968.7 471.9 951.5 472.1 941.1 469.6 C930.6 467.1 921.3 462.4 915.1 454.8 C908.9 447.2 907.7 432.9 904.0 424.0 C900.3 415.2 900.9 411.5 893.0 401.8 C885.0 392.0 867.3 378.7 856.3 365.3 C845.2 351.9 834.0 337.8 826.6 321.2 C819.2 304.6 813.6 284.2 811.8 265.7 C809.9 247.1 811.8 225.3 815.5 209.9 C819.2 194.5 826.0 185.1 834.0 173.4 C842.0 161.8 853.7 148.5 863.5 139.9 C873.3 131.3 880.0 127.3 893.0 121.8 Z" transform="translate(-6 10)" fill="#4a4c84" opacity=".8" filter="url(#halo)"/>
<path d="M897.6 131.9 C909.8 126.7 926.8 121.2 943.0 118.0 C959.2 114.8 977.7 112.7 995.0 112.7 C1012.3 112.7 1033.7 114.8 1047.0 118.0 C1060.3 121.2 1067.4 124.5 1075.0 132.0 C1082.6 139.5 1087.2 149.2 1092.5 163.0 C1097.8 176.8 1103.3 197.6 1106.5 215.0 C1109.7 232.4 1110.3 253.1 1111.7 267.6 C1113.1 282.1 1115.3 290.4 1115.0 302.0 C1114.7 313.6 1111.4 325.3 1110.0 337.0 C1108.6 348.7 1110.0 360.3 1106.5 372.0 C1103.0 383.7 1098.3 397.2 1089.0 407.0 C1079.7 416.8 1062.9 425.8 1050.7 431.0 C1038.5 436.2 1025.3 435.3 1016.0 438.0 C1006.7 440.7 1001.4 443.3 995.0 447.0 C988.6 450.7 986.4 457.8 977.7 460.0 C969.0 462.2 952.9 462.3 943.0 460.0 C933.1 457.7 924.3 453.2 918.5 446.0 C912.7 438.8 911.5 425.3 908.0 417.0 C904.5 408.7 905.1 405.2 897.6 396.0 C890.1 386.8 873.4 374.3 863.0 361.6 C852.6 348.9 842.0 335.7 835.0 320.0 C828.0 304.3 822.8 285.1 821.0 267.6 C819.2 250.1 821.0 229.5 824.5 215.0 C828.0 200.5 834.5 191.6 842.0 180.6 C849.5 169.6 860.5 157.1 869.8 149.0 C879.1 140.9 885.4 137.1 897.6 131.9 Z" fill="url(#headg)"/>
<g clip-path="url(#headclip)">
<path d="M897.6 131.9 C909.8 126.7 926.8 121.2 943.0 118.0 C959.2 114.8 977.7 112.7 995.0 112.7 C1012.3 112.7 1033.7 114.8 1047.0 118.0 C1060.3 121.2 1067.4 124.5 1075.0 132.0 C1082.6 139.5 1087.2 149.2 1092.5 163.0 C1097.8 176.8 1103.3 197.6 1106.5 215.0 C1109.7 232.4 1110.3 253.1 1111.7 267.6 C1113.1 282.1 1115.3 290.4 1115.0 302.0 C1114.7 313.6 1111.4 325.3 1110.0 337.0 C1108.6 348.7 1110.0 360.3 1106.5 372.0 C1103.0 383.7 1098.3 397.2 1089.0 407.0 C1079.7 416.8 1062.9 425.8 1050.7 431.0 C1038.5 436.2 1025.3 435.3 1016.0 438.0 C1006.7 440.7 1001.4 443.3 995.0 447.0 C988.6 450.7 986.4 457.8 977.7 460.0 C969.0 462.2 952.9 462.3 943.0 460.0 C933.1 457.7 924.3 453.2 918.5 446.0 C912.7 438.8 911.5 425.3 908.0 417.0 C904.5 408.7 905.1 405.2 897.6 396.0 C890.1 386.8 873.4 374.3 863.0 361.6 C852.6 348.9 842.0 335.7 835.0 320.0 C828.0 304.3 822.8 285.1 821.0 267.6 C819.2 250.1 821.0 229.5 824.5 215.0 C828.0 200.5 834.5 191.6 842.0 180.6 C849.5 169.6 860.5 157.1 869.8 149.0 C879.1 140.9 885.4 137.1 897.6 131.9 Z" fill="none" stroke="#5a5a68" stroke-width="14" opacity=".55" filter="url(#soft4)"/>
<path d="M885.0 150.0 C903.7 136.3 934.2 131.3 960.0 128.0 C985.8 124.7 1021.3 126.3 1040.0 130.0 C1058.7 133.7 1065.3 138.3 1072.0 150.0 C1078.7 161.7 1083.7 185.8 1080.0 200.0 C1076.3 214.2 1063.3 226.7 1050.0 235.0 C1036.7 243.3 1016.7 245.5 1000.0 250.0 C983.3 254.5 966.7 256.2 950.0 262.0 C933.3 267.8 915.0 278.7 900.0 285.0 C885.0 291.3 870.0 302.5 860.0 300.0 C850.0 297.5 842.0 285.0 840.0 270.0 C838.0 255.0 840.5 230.0 848.0 210.0 C855.5 190.0 866.3 163.7 885.0 150.0 Z" fill="#88888c" filter="url(#soft)"/>
<g mask="url(#brainclip)"><path d="M996.4 247.4 C997.8 247.1 1002.3 245.2 1005.2 245.4 C1008.0 245.6 1011.9 246.5 1013.6 248.5 C1015.3 250.5 1013.7 255.5 1015.5 257.3 C1017.2 259.1 1022.7 259.0 1024.2 259.4  M959.4 280.7 C959.9 279.2 962.7 274.8 962.3 272.1 C961.9 269.5 959.0 267.1 957.2 264.7 C955.4 262.3 954.0 259.3 951.6 257.7 C949.2 256.1 944.4 255.6 943.0 255.1  M977.8 219.7 C979.0 218.9 983.3 216.8 985.2 214.6 C987.1 212.4 987.0 208.1 989.1 206.5 C991.2 205.0 995.2 204.8 998.0 205.4 C1000.8 205.9 1004.6 209.0 1005.9 209.8  M887.5 256.5 C888.1 257.9 889.1 263.0 891.2 264.8 C893.2 266.5 897.5 267.9 899.9 267.1 C902.2 266.2 902.8 261.1 905.2 259.8 C907.6 258.5 912.7 259.4 914.2 259.4  M899.2 160.6 C900.3 161.6 903.1 165.4 905.6 166.9 C908.1 168.4 912.5 167.5 914.3 169.4 C916.0 171.3 915.5 175.2 915.9 178.2 C916.3 181.2 916.6 185.7 916.7 187.2  M1009.3 158.8 C1010.8 158.9 1016.2 158.0 1018.3 159.6 C1020.3 161.1 1021.8 165.3 1021.5 168.0 C1021.2 170.6 1017.5 172.8 1016.5 175.5 C1015.6 178.2 1015.8 183.0 1015.6 184.5  M934.9 152.4 C936.4 152.2 941.1 152.3 943.8 151.2 C946.5 150.2 948.6 147.5 951.2 146.1 C953.8 144.7 958.2 145.0 959.6 143.0 C961.1 140.9 959.8 135.5 959.8 134.0  M1009.3 180.8 C1008.0 181.4 1003.8 183.2 1001.1 184.5 C998.4 185.8 995.4 186.7 993.1 188.6 C990.9 190.5 989.4 193.4 987.7 195.8 C985.9 198.2 983.4 201.9 982.5 203.2  M1015.6 134.4 C1016.0 133.0 1016.4 128.1 1018.0 125.7 C1019.5 123.3 1022.2 120.7 1024.9 119.9 C1027.5 119.1 1031.5 122.1 1033.8 121.0 C1036.1 119.9 1037.6 114.6 1038.4 113.3  M1035.1 185.4 C1034.0 186.4 1029.0 188.7 1028.1 191.1 C1027.3 193.5 1028.4 197.6 1030.0 199.9 C1031.5 202.3 1036.3 202.7 1037.4 205.0 C1038.4 207.4 1036.4 212.5 1036.2 214.0  M896.2 249.7 C897.4 250.6 900.8 253.7 903.5 254.9 C906.2 256.2 909.3 256.9 912.2 257.1 C915.2 257.3 918.2 256.4 921.2 256.2 C924.2 256.0 928.7 255.9 930.2 255.8  M1032.3 142.8 C1033.2 141.7 1035.6 137.1 1038.1 136.0 C1040.6 134.8 1044.9 137.3 1047.1 135.9 C1049.2 134.6 1048.9 129.3 1051.0 127.8 C1053.2 126.4 1058.5 127.5 1060.0 127.4  M871.4 181.2 C871.6 179.7 872.8 175.2 872.6 172.3 C872.4 169.4 869.7 166.1 870.3 163.6 C871.0 161.1 874.3 159.1 876.5 157.1 C878.7 155.0 882.3 152.3 883.4 151.3  M923.4 177.3 C924.9 177.4 929.8 179.1 932.4 178.2 C935.0 177.3 936.5 173.6 939.0 172.1 C941.6 170.7 945.3 168.8 947.7 169.6 C950.0 170.3 952.3 175.5 953.2 176.7  M888.0 133.0 C889.5 133.0 894.0 133.3 897.0 133.0 C899.9 132.6 903.3 132.4 905.7 130.9 C908.2 129.5 909.4 126.1 911.6 124.1 C913.8 122.1 917.6 119.7 918.9 118.8  M1044.2 200.2 C1044.2 201.7 1045.4 206.9 1044.1 209.2 C1042.8 211.5 1037.5 211.7 1036.4 214.0 C1035.3 216.2 1037.1 219.9 1037.4 222.9 C1037.8 225.9 1038.4 230.3 1038.5 231.8  M1047.0 146.5 C1048.3 145.7 1051.8 142.7 1054.4 141.4 C1057.1 140.1 1060.2 138.7 1063.0 138.8 C1065.9 139.0 1068.7 142.5 1071.3 142.3 C1074.0 142.1 1077.7 138.4 1079.0 137.6  M952.1 149.6 C952.3 148.1 952.9 143.7 953.0 140.7 C953.2 137.7 951.6 133.7 953.0 131.7 C954.3 129.6 958.6 128.2 961.3 128.3 C964.0 128.4 968.0 131.7 969.4 132.3  M1079.4 199.8 C1078.0 199.1 1074.1 197.0 1071.4 195.7 C1068.7 194.4 1066.0 192.5 1063.2 192.0 C1060.3 191.5 1057.1 192.1 1054.2 192.7 C1051.3 193.2 1047.0 194.9 1045.6 195.4  M884.4 187.2 C885.2 188.5 887.9 192.2 889.1 194.9 C890.2 197.7 890.5 200.8 891.2 203.7 C891.9 206.6 892.0 209.7 893.3 212.4 C894.5 215.1 897.7 218.5 898.5 219.7  M870.9 169.9 C872.3 169.2 876.5 167.5 878.9 165.7 C881.2 163.9 882.5 160.4 885.0 159.1 C887.5 157.8 891.2 157.4 894.0 157.9 C896.7 158.5 900.4 161.7 901.7 162.4  M1013.2 234.6 C1012.8 233.1 1010.9 228.8 1010.9 225.9 C1010.8 223.0 1013.0 220.0 1012.8 217.1 C1012.7 214.2 1011.1 211.4 1010.2 208.5 C1009.2 205.7 1007.7 201.4 1007.2 200.0  M1030.9 239.0 C1029.4 239.3 1025.1 240.9 1022.1 241.0 C1019.2 241.1 1016.1 240.5 1013.2 239.8 C1010.3 239.1 1007.1 236.3 1004.7 236.9 C1002.3 237.6 999.7 242.5 998.7 243.7  M978.5 166.4 C977.7 165.1 974.2 161.6 973.6 158.8 C973.0 156.1 974.2 152.8 975.2 150.0 C976.2 147.2 977.6 144.0 979.8 142.2 C982.0 140.5 986.9 139.8 988.3 139.4  M931.8 231.3 C932.7 230.1 936.1 227.0 937.6 224.5 C939.1 221.9 938.8 218.0 940.7 216.0 C942.6 214.0 946.3 212.4 949.0 212.5 C951.7 212.7 955.6 216.1 957.0 216.8  M1011.8 286.1 C1013.2 285.7 1017.6 284.6 1020.5 284.0 C1023.5 283.4 1027.1 284.1 1029.4 282.6 C1031.7 281.1 1032.2 276.7 1034.6 275.2 C1036.9 273.8 1042.0 274.1 1043.5 273.8  M1070.3 203.7 C1070.5 202.3 1070.5 197.5 1071.7 194.9 C1072.9 192.2 1076.7 190.7 1077.6 188.0 C1078.5 185.4 1076.2 181.8 1076.9 179.1 C1077.6 176.3 1081.1 172.9 1082.0 171.6  M986.5 234.8 C985.0 235.1 980.5 237.0 977.7 236.6 C974.9 236.2 972.0 234.4 969.6 232.6 C967.2 230.9 964.7 228.8 963.3 226.3 C961.8 223.7 961.4 219.0 961.0 217.5  M856.5 151.4 C855.0 151.4 850.2 150.5 847.5 151.5 C844.8 152.5 843.1 155.9 840.5 157.2 C837.9 158.5 834.7 159.1 831.8 159.3 C828.8 159.5 824.3 158.7 822.8 158.6  M859.8 202.8 C861.2 203.3 865.6 206.1 868.3 205.9 C871.0 205.7 873.9 203.4 876.1 201.4 C878.2 199.4 880.6 196.7 881.2 194.0 C881.8 191.3 880.0 186.6 879.7 185.1  M895.4 130.9 C894.1 131.6 890.3 134.2 887.6 135.2 C884.8 136.3 881.8 137.0 878.8 137.4 C875.9 137.7 872.5 136.6 869.8 137.5 C867.1 138.5 863.8 142.1 862.6 143.0  M1062.2 125.1 C1061.6 126.5 1059.4 130.4 1058.4 133.2 C1057.4 136.0 1055.7 139.4 1056.3 142.0 C1057.0 144.6 1061.3 146.3 1062.1 148.9 C1062.9 151.6 1061.3 156.4 1061.2 157.9  M937.9 131.0 C936.4 131.3 932.1 132.6 929.2 133.3 C926.2 133.9 923.0 133.6 920.3 134.6 C917.5 135.6 915.2 137.9 912.5 139.2 C909.8 140.5 905.5 141.7 904.0 142.2  M1075.2 260.1 C1073.7 259.7 1069.2 259.1 1066.5 257.9 C1063.8 256.7 1061.7 254.2 1059.0 252.9 C1056.3 251.7 1053.0 250.1 1050.3 250.5 C1047.6 250.9 1044.0 254.7 1042.8 255.5  M990.0 218.0 C991.0 219.2 994.3 222.3 996.0 224.8 C997.6 227.3 998.2 230.5 999.9 232.9 C1001.7 235.3 1005.6 236.6 1006.5 239.1 C1007.3 241.6 1005.5 246.5 1005.3 248.0  M850.2 142.8 C849.1 141.9 845.9 137.8 843.3 137.1 C840.6 136.4 837.4 138.6 834.4 138.6 C831.5 138.7 827.7 138.9 825.5 137.4 C823.3 135.9 821.9 130.8 821.2 129.5  M938.3 196.2 C939.2 197.4 943.6 200.9 943.8 203.4 C944.0 205.9 940.6 208.6 939.6 211.4 C938.6 214.2 939.6 218.3 937.8 220.2 C936.1 222.1 930.6 222.2 929.1 222.6  M1064.7 223.3 C1063.3 223.8 1059.1 225.4 1056.3 226.4 C1053.5 227.5 1050.5 228.3 1047.9 229.6 C1045.2 231.0 1042.4 232.4 1040.3 234.5 C1038.2 236.5 1036.2 240.8 1035.4 242.0  M1081.3 206.1 C1081.0 207.6 1079.0 212.4 1079.8 215.0 C1080.5 217.6 1084.1 219.2 1085.8 221.7 C1087.4 224.2 1088.2 227.2 1089.6 229.8 C1091.1 232.4 1093.7 236.1 1094.5 237.4  M918.9 254.0 C917.9 252.8 915.0 249.4 913.2 247.0 C911.4 244.6 910.3 241.5 908.0 239.6 C905.8 237.8 901.4 238.1 899.8 236.0 C898.3 233.9 899.0 228.5 898.9 227.0  M1033.7 165.5 C1034.7 166.7 1039.3 169.8 1039.7 172.3 C1040.0 174.8 1036.3 177.6 1035.7 180.4 C1035.1 183.2 1036.3 186.4 1036.1 189.4 C1035.8 192.4 1034.4 196.7 1034.1 198.2  M961.5 231.4 C961.0 230.0 960.5 224.8 958.6 222.9 C956.7 221.0 952.3 221.8 950.0 220.1 C947.7 218.4 947.0 214.7 944.8 212.8 C942.6 210.9 938.1 209.4 936.7 208.7  M975.4 180.5 C974.8 181.9 973.1 186.0 972.2 188.9 C971.2 191.7 970.0 194.6 969.7 197.5 C969.3 200.5 970.8 203.7 970.1 206.5 C969.5 209.3 966.3 213.0 965.6 214.2  M988.8 131.0 C989.0 132.5 990.7 137.6 989.7 140.0 C988.6 142.4 985.2 145.0 982.6 145.5 C979.9 146.0 976.7 144.1 973.9 143.1 C971.0 142.2 966.9 140.3 965.5 139.8  M853.4 253.4 C852.0 253.8 847.7 255.8 844.8 255.9 C841.8 255.9 838.7 254.9 836.0 253.8 C833.2 252.7 830.9 250.7 828.3 249.2 C825.7 247.7 821.7 245.6 820.4 244.8  M1064.3 188.6 C1062.8 188.4 1058.1 186.6 1055.4 187.1 C1052.6 187.7 1049.8 189.8 1047.8 191.9 C1045.8 194.0 1045.5 198.1 1043.3 199.7 C1041.1 201.4 1036.1 201.7 1034.6 202.1  M865.5 263.0 C864.8 261.7 863.1 257.2 861.1 255.1 C859.1 253.0 855.2 252.6 853.5 250.4 C851.7 248.2 850.0 244.6 850.4 242.0 C850.8 239.4 854.9 235.9 855.7 234.7  M883.5 203.9 C882.1 203.5 877.9 201.5 874.9 201.3 C872.0 201.0 868.4 200.8 866.0 202.2 C863.6 203.5 862.7 207.2 860.6 209.4 C858.6 211.6 855.0 214.4 853.9 215.4  M1040.8 136.3 C1039.9 137.5 1037.8 142.0 1035.4 143.5 C1033.0 145.0 1029.6 145.4 1026.6 145.5 C1023.7 145.6 1020.1 143.1 1017.7 144.1 C1015.4 145.1 1013.5 150.3 1012.7 151.5  M1019.8 286.5 C1021.1 287.2 1025.3 290.8 1027.8 290.6 C1030.4 290.4 1032.5 286.0 1035.2 285.4 C1037.9 284.9 1041.2 287.7 1044.0 287.3 C1046.8 287.0 1050.7 284.0 1052.1 283.3  M1001.7 282.1 C1000.4 281.5 996.5 278.7 993.7 278.1 C990.8 277.5 987.0 279.7 984.7 278.5 C982.3 277.3 981.9 272.5 979.5 271.1 C977.2 269.7 972.1 270.2 970.6 270.0  M993.5 193.3 C993.9 194.7 994.0 200.2 995.8 202.0 C997.7 203.7 1002.1 204.6 1004.6 203.9 C1007.2 203.2 1009.5 200.2 1011.4 197.9 C1013.3 195.6 1015.3 191.5 1016.1 190.2  M866.9 134.5 C866.2 133.2 862.6 129.4 862.5 126.7 C862.3 124.0 866.0 121.1 865.9 118.4 C865.8 115.6 863.3 112.9 861.7 110.4 C860.1 107.9 857.2 104.4 856.3 103.2  M923.9 224.0 C923.1 222.8 921.0 218.7 919.0 216.5 C917.0 214.3 914.5 211.2 912.0 210.8 C909.4 210.4 906.5 213.8 903.6 214.2 C900.8 214.6 896.2 213.5 894.7 213.3  M885.5 229.2 C884.7 227.9 882.2 224.1 880.8 221.5 C879.4 218.8 878.0 216.1 877.2 213.3 C876.4 210.4 877.2 207.0 876.0 204.3 C874.9 201.7 871.2 198.6 870.3 197.4  M979.6 166.9 C979.7 165.4 981.1 160.5 980.0 158.0 C979.0 155.4 976.0 153.1 973.4 151.9 C970.8 150.8 967.4 150.9 964.4 151.0 C961.5 151.2 957.1 152.6 955.6 152.9  M1023.1 154.6 C1023.3 153.1 1025.3 148.1 1024.4 145.7 C1023.5 143.2 1019.4 142.1 1017.6 139.8 C1015.8 137.4 1015.8 133.2 1013.7 131.7 C1011.6 130.1 1006.3 130.6 1004.8 130.4  M879.3 223.0 C878.2 224.0 874.8 227.0 872.7 229.1 C870.5 231.1 867.9 233.0 866.3 235.4 C864.7 237.9 865.0 241.7 863.1 243.8 C861.3 246.0 856.5 247.4 855.2 248.1  M856.9 244.6 C858.2 243.9 862.3 240.2 864.8 240.3 C867.4 240.4 870.3 243.2 872.3 245.3 C874.4 247.4 874.9 251.1 877.0 252.9 C879.2 254.7 884.1 255.5 885.5 256.0  M877.3 285.5 C877.6 284.0 879.9 279.4 879.4 276.7 C878.8 274.1 875.5 272.1 874.1 269.5 C872.7 266.8 872.6 263.5 871.2 260.9 C869.7 258.4 866.5 255.1 865.5 253.9  M905.2 180.0 C903.8 179.5 899.7 177.5 896.8 176.9 C893.9 176.3 890.4 175.2 887.8 176.2 C885.3 177.1 884.1 181.5 881.5 182.6 C879.0 183.7 874.0 182.6 872.5 182.6  M1002.3 257.7 C1000.9 257.1 996.8 255.3 994.1 254.0 C991.4 252.7 988.5 251.6 986.0 250.0 C983.5 248.3 981.2 246.3 979.1 244.2 C976.9 242.2 974.2 238.5 973.2 237.4  M1023.9 190.3 C1025.2 189.5 1030.0 188.0 1031.8 185.9 C1033.6 183.7 1035.4 179.9 1034.8 177.4 C1034.3 174.9 1029.4 173.4 1028.6 170.9 C1027.9 168.3 1029.9 163.5 1030.2 162.0  M963.0 250.5 C964.5 250.4 969.5 248.8 972.0 249.8 C974.5 250.9 976.3 254.2 977.8 256.7 C979.4 259.2 980.0 262.3 981.5 264.9 C982.9 267.5 985.7 271.2 986.5 272.4  M959.4 141.5 C960.9 141.7 965.3 142.8 968.3 142.8 C971.3 142.8 974.4 142.3 977.2 141.5 C980.1 140.7 982.7 137.7 985.4 137.8 C988.1 137.9 992.0 141.4 993.4 142.1  M885.7 166.9 C886.6 168.1 888.9 172.3 891.1 174.1 C893.4 176.0 896.5 177.5 899.3 177.8 C902.2 178.1 905.2 176.6 908.1 175.9 C911.0 175.2 915.4 174.0 916.8 173.6  M857.5 277.5 C856.1 277.2 851.4 276.8 848.8 275.5 C846.1 274.2 843.6 272.1 841.8 269.9 C839.9 267.6 839.1 264.5 837.6 261.9 C836.2 259.2 833.8 255.4 833.0 254.2  M1072.2 144.5 C1070.9 143.7 1066.6 141.7 1064.5 139.7 C1062.4 137.7 1060.4 135.0 1059.5 132.2 C1058.6 129.5 1060.3 125.7 1059.1 123.2 C1057.9 120.8 1053.5 118.3 1052.3 117.3  M897.2 129.1 C898.6 129.7 902.6 132.0 905.4 132.9 C908.2 133.8 912.4 132.9 914.2 134.7 C916.0 136.4 915.2 140.7 916.3 143.4 C917.5 146.2 920.3 149.8 921.1 151.1  M923.3 202.2 C922.2 203.3 919.5 207.2 917.0 208.7 C914.6 210.2 910.5 209.5 908.4 211.2 C906.3 213.0 904.7 216.4 904.2 219.2 C903.8 222.0 905.3 226.6 905.5 228.1 " stroke="#d0d0d2" stroke-width="6" fill="none" stroke-linecap="round" opacity=".6" filter="url(#soft2)"/></g>
<g mask="url(#brainclip)"><path d="M1008.0 280.2 C1007.0 279.3 1002.7 276.9 1002.1 274.7 C1001.6 272.6 1005.2 269.3 1004.6 267.1 C1004.0 265.0 1000.8 262.4 998.5 261.9 C996.3 261.5 992.3 264.2 991.0 264.7  M1033.1 192.7 C1034.4 193.2 1039.3 193.9 1040.5 195.8 C1041.7 197.6 1040.5 201.1 1040.5 203.8 C1040.4 206.4 1039.7 209.2 1040.1 211.8 C1040.4 214.4 1042.1 218.1 1042.5 219.4  M872.0 136.8 C873.1 135.9 876.1 132.2 878.4 131.9 C880.7 131.6 883.5 135.2 885.8 134.9 C888.1 134.6 890.6 132.0 892.0 129.9 C893.4 127.7 893.8 123.4 894.1 122.1  M861.9 190.6 C863.2 190.3 867.2 189.7 869.7 188.9 C872.2 188.1 874.9 187.2 877.0 185.6 C879.0 184.0 881.6 181.6 881.9 179.3 C882.3 177.0 879.3 173.2 878.8 171.9  M858.8 285.3 C859.4 286.5 860.8 290.3 862.1 292.6 C863.5 294.9 865.5 296.8 867.0 298.9 C868.6 301.1 869.3 304.5 871.4 305.6 C873.5 306.7 878.1 305.6 879.4 305.6  M923.8 142.8 C923.4 141.5 921.9 137.8 921.4 135.2 C921.0 132.6 920.1 129.4 920.9 127.2 C921.8 124.9 925.6 123.8 926.7 121.6 C927.8 119.3 927.4 115.0 927.5 113.6  M854.1 214.0 C852.8 213.9 848.8 213.2 846.1 213.3 C843.5 213.5 840.9 214.9 838.3 215.0 C835.7 215.2 832.7 215.2 830.3 214.3 C827.9 213.4 825.0 210.3 823.9 209.6  M1064.6 175.8 C1063.4 175.2 1059.9 172.5 1057.4 172.2 C1054.9 171.8 1051.4 172.3 1049.6 173.8 C1047.7 175.2 1046.7 178.4 1046.1 181.0 C1045.5 183.5 1046.1 187.6 1046.1 189.0  M870.6 252.4 C870.6 251.1 871.6 246.6 870.5 244.4 C869.4 242.3 866.5 239.9 864.2 239.5 C861.9 239.1 858.7 240.6 856.7 242.1 C854.6 243.6 852.8 247.5 852.0 248.6  M869.8 195.7 C868.5 195.9 863.7 195.3 861.9 196.7 C860.1 198.1 860.4 202.0 858.8 204.1 C857.3 206.2 853.4 207.1 852.7 209.3 C852.0 211.4 854.1 215.8 854.4 217.1  M897.0 172.2 C897.2 173.5 897.7 177.5 898.4 180.1 C899.2 182.6 899.9 185.3 901.4 187.5 C902.9 189.6 906.0 190.7 907.3 192.9 C908.5 195.1 908.7 199.4 909.0 200.7  M980.7 272.9 C980.7 271.5 980.6 267.5 980.8 264.9 C981.1 262.2 982.1 259.7 982.4 257.0 C982.8 254.4 981.9 251.3 982.9 249.0 C984.0 246.8 987.8 244.5 988.8 243.6  M1004.0 282.5 C1004.5 281.3 1006.6 277.6 1006.7 275.0 C1006.9 272.4 1004.6 269.6 1005.0 267.2 C1005.4 264.7 1008.1 262.7 1009.1 260.3 C1010.1 257.9 1010.8 253.9 1011.1 252.6  M880.6 135.9 C881.8 136.5 885.7 138.0 887.6 139.7 C889.6 141.4 890.5 144.4 892.5 146.0 C894.6 147.6 897.6 149.4 899.9 149.2 C902.2 148.9 905.2 145.1 906.3 144.3  M1029.5 216.9 C1030.3 215.9 1033.9 213.0 1034.4 210.6 C1035.0 208.3 1033.7 205.3 1032.7 202.8 C1031.6 200.4 1028.7 198.5 1028.4 196.1 C1028.0 193.7 1030.3 189.7 1030.7 188.4  M1073.1 226.0 C1073.4 227.3 1074.2 231.3 1075.3 233.6 C1076.5 236.0 1078.1 238.4 1080.0 240.2 C1081.9 241.9 1084.6 244.4 1086.8 244.3 C1089.1 244.2 1092.2 240.4 1093.3 239.6  M987.3 261.4 C986.1 260.9 982.5 259.2 980.1 257.9 C977.8 256.7 975.7 254.2 973.2 253.9 C970.8 253.6 968.1 256.0 965.5 256.0 C962.9 256.0 959.0 254.4 957.7 254.1  M954.9 279.9 C954.1 278.8 952.1 275.1 950.1 273.4 C948.2 271.7 944.4 271.6 943.1 269.6 C941.8 267.6 942.8 264.3 942.5 261.6 C942.1 259.0 941.3 255.1 941.1 253.7  M952.0 197.8 C953.2 197.3 956.9 195.6 959.4 194.6 C961.8 193.6 964.7 191.5 966.9 192.0 C969.1 192.5 970.9 195.6 972.5 197.7 C974.2 199.8 976.0 203.4 976.7 204.5  M874.3 259.4 C874.4 260.7 875.6 265.5 874.4 267.4 C873.2 269.2 868.4 268.8 867.2 270.7 C865.9 272.6 867.3 276.1 867.0 278.7 C866.7 281.3 865.7 285.2 865.4 286.5  M963.3 270.5 C963.0 271.8 961.4 275.7 961.6 278.3 C961.7 280.9 962.5 284.0 964.1 285.9 C965.7 287.8 968.8 288.4 971.0 290.0 C973.2 291.5 976.2 294.2 977.2 295.0  M933.9 248.9 C934.4 250.2 935.4 254.3 937.1 256.3 C938.7 258.2 942.9 258.5 943.9 260.5 C944.8 262.5 944.0 266.3 942.7 268.4 C941.4 270.5 937.2 272.2 936.1 273.0  M1049.7 227.0 C1049.6 228.3 1050.1 232.8 1049.0 235.0 C1047.8 237.1 1044.8 238.3 1042.8 240.0 C1040.7 241.7 1037.4 243.1 1036.7 245.2 C1036.0 247.4 1038.3 251.7 1038.6 253.0  M889.8 141.3 C890.8 140.3 894.4 137.8 895.3 135.5 C896.3 133.2 894.7 129.8 895.6 127.5 C896.6 125.2 899.7 123.9 901.1 121.6 C902.4 119.4 903.2 115.3 903.6 114.0  M1010.5 267.4 C1010.4 266.1 1010.5 262.0 1009.9 259.4 C1009.3 256.9 1008.8 253.3 1007.0 252.0 C1005.1 250.7 1001.6 251.9 999.0 251.8 C996.3 251.7 992.3 251.5 991.0 251.4  M987.9 155.5 C987.3 156.7 984.2 160.5 984.5 162.7 C984.8 165.0 987.6 167.3 989.6 168.9 C991.7 170.4 994.4 171.4 997.0 172.1 C999.5 172.8 1003.6 173.0 1004.9 173.2  M961.9 241.1 C960.7 240.4 956.5 239.0 955.0 237.1 C953.4 235.1 952.2 231.7 952.7 229.4 C953.2 227.1 955.9 224.9 958.0 223.4 C960.1 221.9 964.2 220.9 965.4 220.4  M1007.5 213.6 C1007.5 212.2 1007.1 208.2 1007.3 205.6 C1007.5 202.9 1007.8 200.1 1008.9 197.7 C1010.0 195.3 1012.0 193.4 1013.6 191.3 C1015.3 189.2 1017.8 186.1 1018.7 185.1  M916.8 137.8 C918.1 138.1 922.1 138.7 924.6 139.4 C927.2 140.2 930.1 140.9 932.0 142.5 C933.9 144.2 935.4 146.9 936.2 149.3 C936.9 151.8 936.4 156.0 936.5 157.3  M922.1 278.3 C921.3 279.4 917.5 282.3 917.1 284.6 C916.7 286.9 919.8 289.5 919.9 292.1 C920.0 294.6 919.0 297.5 917.9 299.8 C916.7 302.2 913.8 305.1 913.0 306.1  M1074.9 273.0 C1075.4 271.8 1076.5 267.7 1078.1 265.7 C1079.8 263.8 1082.5 262.5 1084.8 261.4 C1087.2 260.2 1090.5 260.4 1092.5 258.9 C1094.4 257.4 1096.0 253.3 1096.7 252.1  M971.4 272.9 C970.3 273.5 966.8 275.5 964.4 276.7 C962.0 277.9 959.3 278.5 957.0 279.8 C954.7 281.1 951.4 282.5 950.7 284.6 C949.9 286.7 952.4 291.0 952.8 292.3  M941.7 154.4 C942.1 153.1 942.7 148.4 944.4 146.9 C946.2 145.3 949.6 145.3 952.2 145.0 C954.8 144.7 957.6 145.6 960.2 145.3 C962.8 145.0 966.7 143.7 968.0 143.4  M875.6 238.6 C874.7 237.6 872.3 234.3 870.3 232.6 C868.3 230.9 864.8 230.5 863.5 228.4 C862.2 226.4 863.8 222.8 862.8 220.5 C861.7 218.2 858.1 215.8 857.1 214.8  M921.8 169.2 C922.0 167.8 923.6 163.6 923.0 161.3 C922.4 158.9 919.4 157.2 918.2 154.9 C916.9 152.6 915.6 149.8 915.6 147.3 C915.6 144.8 917.6 141.0 918.0 139.7  M902.8 135.3 C902.3 134.1 899.7 130.3 899.9 127.9 C900.2 125.5 902.2 122.8 904.1 121.0 C906.0 119.3 909.0 118.8 911.2 117.3 C913.4 115.9 916.4 113.2 917.4 112.3  M950.0 212.2 C950.6 211.1 953.2 207.7 953.8 205.2 C954.4 202.7 953.3 199.9 953.6 197.2 C953.8 194.6 953.7 191.0 955.3 189.4 C956.9 187.8 961.8 187.9 963.1 187.6  M894.0 130.0 C894.9 131.1 897.7 133.9 899.1 136.2 C900.5 138.4 900.7 141.7 902.6 143.4 C904.4 145.1 907.6 146.3 910.0 146.3 C912.5 146.2 916.2 143.8 917.5 143.3  M989.7 231.6 C989.9 230.3 991.9 225.9 991.1 223.8 C990.3 221.6 987.0 220.3 984.9 218.7 C982.9 217.0 979.8 215.9 978.6 213.8 C977.4 211.7 977.8 207.2 977.7 205.8  M1074.9 177.5 C1076.1 176.8 1079.3 173.3 1081.6 173.1 C1083.9 172.9 1086.3 176.2 1088.8 176.4 C1091.4 176.7 1094.1 174.7 1096.7 174.7 C1099.3 174.7 1103.1 176.4 1104.4 176.7  M1047.6 203.7 C1048.9 203.5 1053.4 204.0 1055.5 202.8 C1057.7 201.6 1060.0 198.8 1060.3 196.4 C1060.7 194.1 1059.4 190.7 1057.7 188.9 C1056.1 187.1 1051.6 186.3 1050.4 185.7  M994.7 142.3 C995.5 141.2 997.2 137.1 999.3 135.8 C1001.4 134.4 1004.7 133.8 1007.2 134.2 C1009.6 134.7 1012.2 136.5 1014.1 138.3 C1015.9 140.2 1017.4 144.1 1018.1 145.2  M1067.2 282.9 C1067.6 281.6 1070.1 277.7 1069.8 275.3 C1069.4 273.0 1067.2 269.9 1065.1 268.8 C1063.0 267.7 1059.1 267.7 1057.1 268.8 C1055.1 270.0 1053.8 274.6 1053.1 275.8  M898.5 186.8 C897.2 186.6 892.9 186.5 890.6 185.4 C888.3 184.3 887.1 180.5 884.8 179.9 C882.5 179.3 879.5 180.9 877.0 181.8 C874.6 182.8 871.1 184.9 869.9 185.5  M977.7 186.9 C978.5 188.0 980.4 191.6 982.2 193.5 C984.0 195.4 986.9 196.5 988.5 198.5 C990.1 200.5 990.8 203.3 992.0 205.6 C993.2 208.0 995.1 211.6 995.7 212.8 " stroke="#5c5c62" stroke-width="3.5" fill="none" stroke-linecap="round" opacity=".55" filter="url(#soft2)"/></g>
<path d="M826 220 C818 270 826 330 860 370 C880 385 900 395 910 380 C880 340 850 290 850 230Z" fill="#c4c4c6" opacity=".45" filter="url(#soft)"/>
<ellipse cx="985" cy="345" rx="95" ry="60" fill="#bcbcbc" opacity=".4" filter="url(#soft)"/>
<path d="M1085 180 C1110 240 1115 330 1095 400 L1120 400 L1125 170Z" fill="#6a6a74" opacity=".45" filter="url(#soft)"/>
<path d="M832 300 C845 350 880 380 930 392 C970 398 1000 392 1015 385" stroke="#6a6a70" stroke-width="12" fill="none" opacity=".55" filter="url(#soft4)"/>
<path d="M912 400 C930 420 960 440 1000 445 L1000 470 L900 470Z" fill="#7c7c82" opacity=".55" filter="url(#soft4)"/>
<path d="M1040 395 C1070 380 1090 340 1100 300" stroke="#c8c8ca" stroke-width="14" fill="none" opacity=".3" filter="url(#soft)"/>
<path d="M906 400 C930 430 985 445 1040 433" stroke="#6c6c74" stroke-width="5" fill="none" opacity=".6" filter="url(#soft2)"/>
<path d="M915 440 C930 455 960 458 990 452" stroke="#c8c8c8" stroke-width="5" fill="none" opacity=".4" filter="url(#soft2)"/>
<rect x="800" y="100" width="340" height="380" fill="#000" filter="url(#tex)" opacity=".28"/>
<rect x="800" y="100" width="340" height="380" fill="#fff" filter="url(#texw)" opacity=".22"/>
</g>
<path d="M1108 250 C1118 260 1122 275 1113 290 C1120 300 1118 315 1110 322" stroke="#9a9aa0" stroke-width="5" fill="none" opacity=".7" filter="url(#soft2)"/>
<g stroke="#fff" stroke-width="2" fill="none">
<path d="M873 111 L680 323.5 L1007.6 382.3 L1131 111"/>
<path d="M680 323.5 L795 487"/>
<path d="M1007.6 382.3 L1036 487"/>
<path d="M1142.3 111 L1155.6 334.9 L1110 487"/>
<path d="M893.7 111 L903 131.8"/>
</g>
<path d="M1108 327 L1155.6 334.9" stroke="#e8e8e8" stroke-width="1.5"/>
<path d="M892 481 L924 424 M855.7 487 L903 405" stroke="#d8d8d8" stroke-width="1.5"/>
<g stroke="#ff00ff" stroke-width="1.2" fill="none">
<path d="M647 238 L1284 299"/>
<path d="M1105 279 L1284 309"/>
<path d="M814 111 L840.5 177.3"/>
<path d="M831 314 L705.7 487"/>
<path d="M647 433.6 L692.5 487"/>
</g>
<text x="692" y="252" font-family="Liberation Sans" font-size="37" fill="#fff">R</text>
<text x="1053" y="129" font-family="Liberation Sans" font-weight="bold" font-size="30" fill="#eee">P</text>
<path d="M976 180 L987 163 L1019 166 L1020 188 L1010 205 L977 202Z" fill="#10a010"/>
<path d="M987 163 L1019 166 L1008 183 L976 180Z" fill="#20b020"/>
<path d="M1008 183 L1019 166 L1020 188 L1010 205Z" fill="#0a800a"/>
<path d="M980 197 C990 210 1000 214 1012 206 L1012 196 C1000 202 990 200 980 192Z" fill="#70a870" opacity=".6"/>
<circle cx="930" cy="195" r="5.5" fill="#6cc8c0" stroke="#3a8888" stroke-width=".8"/>
<circle cx="1107" cy="350" r="5" fill="#c8a0d8" stroke="#806090" stroke-width=".8"/>
<path d="M1090 348 L1102 350" stroke="#ddd" stroke-width="1.5"/>
<circle cx="892" cy="481" r="6" fill="#e08010" stroke="#803000" stroke-width=".8"/>
</svg>
<div class="a" style="left:1283px;top:95px;width:1px;height:392px;background:#5e5e78"></div>
<!-- chart view -->
<div class="a" style="left:1284px;top:95px;width:636px;height:16px;background:linear-gradient(#e8bd40 0,#c9a33a 30%,#e6b93c 70%,#f0c040 85%,#cfa536 100%)"></div>
<div class="a" style="left:1301px;top:95px;width:16px;height:16px;background:#fdd864"></div>
<svg class="a" style="left:1287px;top:97px" width="12" height="12"><path d="M1 6 H4 M4 4 H7 V8 H4Z M7 5 H11 V7 H7" stroke="#444" fill="#555" stroke-width="1"/></svg>
<div class="t" style="left:1305px;top:98px;font-size:12.8px">1</div>
<svg class="a" style="left:1284px;top:111px" width="636" height="376" viewBox="1284 111 636 376">
<defs><filter id="bsh" x="-20%" y="-10%" width="160%" height="130%"><feGaussianBlur stdDeviation="2.5"/></filter></defs>
<rect x="1284" y="111" width="636" height="376" fill="#fff"/>
<rect x="1342.7" y="152.7" width="546.0" height="275.3" fill="#bbb" filter="url(#bsh)"/>
<rect x="1340.7" y="150.7" width="546.0" height="275.3" fill="#fffdf6"/>
<path d="M1382.7 150.7 V426.0 M1424.7 150.7 V426.0 M1466.7 150.7 V426.0 M1508.7 150.7 V426.0 M1550.7 150.7 V426.0 M1592.7 150.7 V426.0 M1634.7 150.7 V426.0 M1676.7 150.7 V426.0 M1718.7 150.7 V426.0 M1760.7 150.7 V426.0 M1802.7 150.7 V426.0 M1844.7 150.7 V426.0 M1340.7 386.7 H1886.7 M1340.7 347.3 H1886.7 M1340.7 308.0 H1886.7 M1340.7 268.7 H1886.7 M1340.7 229.4 H1886.7 M1340.7 190.0 H1886.7" stroke="#d8d8d8" stroke-width="1" fill="none"/>
<rect x="1402.7" y="236.3" width="52" height="189.7" fill="#888" opacity=".55" filter="url(#bsh)"/>
<rect x="1398.7" y="232.3" width="52" height="193.7" fill="#a01a22"/>
<rect x="1486.7" y="257.9" width="52" height="168.1" fill="#888" opacity=".55" filter="url(#bsh)"/>
<rect x="1482.7" y="253.9" width="52" height="172.1" fill="#e82a32"/>
<rect x="1570.7" y="387.7" width="52" height="38.3" fill="#888" opacity=".55" filter="url(#bsh)"/>
<rect x="1566.7" y="383.7" width="52" height="42.3" fill="#1a5aa8"/>
<rect x="1654.7" y="293.3" width="52" height="132.7" fill="#888" opacity=".55" filter="url(#bsh)"/>
<rect x="1650.7" y="289.3" width="52" height="136.7" fill="#6a3090"/>
<rect x="1738.7" y="203.9" width="52" height="222.1" fill="#888" opacity=".55" filter="url(#bsh)"/>
<rect x="1734.7" y="199.9" width="52" height="226.1" fill="#f07a30"/>
<rect x="1822.7" y="395.6" width="52" height="30.4" fill="#888" opacity=".55" filter="url(#bsh)"/>
<rect x="1818.7" y="391.6" width="52" height="34.4" fill="#158a48"/>
<rect x="1340.7" y="150.7" width="546.0" height="275.3" fill="none" stroke="#999" stroke-width="2"/>
<path d="M1334.7 426.0 H1340.7 M1334.7 386.7 H1340.7 M1334.7 347.3 H1340.7 M1334.7 308.0 H1340.7 M1334.7 268.7 H1340.7 M1334.7 229.4 H1340.7 M1334.7 190.0 H1340.7 M1334.7 150.7 H1340.7" stroke="#999" stroke-width="1.5"/>
<g font-family="Liberation Sans" fill="#555" font-size="12">
<text x="1333" y="430.0" text-anchor="end">0</text>
<text x="1333" y="390.7" text-anchor="end">2</text>
<text x="1333" y="351.3" text-anchor="end">4</text>
<text x="1333" y="312.0" text-anchor="end">6</text>
<text x="1333" y="272.7" text-anchor="end">8</text>
<text x="1333" y="233.4" text-anchor="end">10</text>
<text x="1333" y="194.0" text-anchor="end">12</text>
<text x="1333" y="154.7" text-anchor="end">14</text>
<text x="1340.7" y="447" text-anchor="middle">0.0</text>
<text x="1382.7" y="447" text-anchor="middle">0.5</text>
<text x="1424.7" y="447" text-anchor="middle">1.0</text>
<text x="1466.7" y="447" text-anchor="middle">1.5</text>
<text x="1508.7" y="447" text-anchor="middle">2.0</text>
<text x="1550.7" y="447" text-anchor="middle">2.5</text>
<text x="1592.7" y="447" text-anchor="middle">3.0</text>
<text x="1634.7" y="447" text-anchor="middle">3.5</text>
<text x="1676.7" y="447" text-anchor="middle">4.0</text>
<text x="1718.7" y="447" text-anchor="middle">4.5</text>
<text x="1760.7" y="447" text-anchor="middle">5.0</text>
<text x="1802.7" y="447" text-anchor="middle">5.5</text>
<text x="1844.7" y="447" text-anchor="middle">6.0</text>
<text x="1886.7" y="447" text-anchor="middle">6.5</text>
</g>
<text x="1593.5" y="137" text-anchor="middle" font-family="Liberation Sans" font-size="19.3" fill="#555">Metabolite concentration (Abs.)</text>
<text x="1613" y="471" text-anchor="middle" font-family="Liberation Sans" font-size="13" fill="#555">METABOLITE</text>
<text transform="translate(1303 291) rotate(-90)" text-anchor="middle" font-family="Liberation Sans" font-size="14" fill="#555">CONC (mM / H2O)</text>
<rect x="1787.5" y="163.5" width="86" height="110" fill="#fff" fill-opacity=".75" stroke="#ddd"/>
<rect x="1791.5" y="165.5" width="14" height="14" fill="#fff" stroke="#ccc"/>
<rect x="1793" y="167" width="11" height="11" fill="#a01a22"/>
<text x="1811" y="176.5" font-family="Liberation Sans" font-size="11" fill="#555">NAA+NAAG</text>
<rect x="1791.5" y="183.5" width="14" height="14" fill="#fff" stroke="#ccc"/>
<rect x="1793" y="185" width="11" height="11" fill="#6a3090"/>
<text x="1811" y="194.5" font-family="Liberation Sans" font-size="11" fill="#555">Ins</text>
<rect x="1791.5" y="201.5" width="14" height="14" fill="#fff" stroke="#ccc"/>
<rect x="1793" y="203" width="11" height="11" fill="#f07a30"/>
<text x="1811" y="212.5" font-family="Liberation Sans" font-size="11" fill="#555">Glu</text>
<rect x="1791.5" y="219.5" width="14" height="14" fill="#fff" stroke="#ccc"/>
<rect x="1793" y="221" width="11" height="11" fill="#1a5aa8"/>
<text x="1811" y="230.5" font-family="Liberation Sans" font-size="11" fill="#555">GPC+PCh</text>
<rect x="1791.5" y="237.5" width="14" height="14" fill="#fff" stroke="#ccc"/>
<rect x="1793" y="239" width="11" height="11" fill="#158a48"/>
<text x="1811" y="248.5" font-family="Liberation Sans" font-size="11" fill="#555">GABA</text>
<rect x="1791.5" y="255.5" width="14" height="14" fill="#fff" stroke="#ccc"/>
<rect x="1793" y="257" width="11" height="11" fill="#e82a32"/>
<text x="1811" y="266.5" font-family="Liberation Sans" font-size="11" fill="#555">Cr+PCr</text>
</svg>
<!-- slice views -->
<div class="a" style="left:647px;top:487px;width:1273px;height:5px;background:#5f5e75"></div>
<div class="a" style="left:647px;top:492px;width:424px;height:18px;background:linear-gradient(#f85a42 0,#d84432 35%,#f04a35 70%,#f85a42 90%,#d84432 100%)"></div>
<div class="a" style="left:664px;top:492px;width:16px;height:18px;background:#fd8472"></div>
<svg class="a" style="left:650px;top:495px" width="12" height="12"><path d="M1 6 H4 M4 4 H7 V8 H4Z M7 5 H11 V7 H7" stroke="#444" fill="#555" stroke-width="1"/></svg>
<div class="t" style="left:667px;top:495px;font-size:12.8px">R</div>
<svg class="a" style="left:682px;top:493px" width="14" height="16"><rect x="3" y="3.5" width="9" height="9" fill="#d84432" opacity=".9"/><rect x="3" y="3.5" width="9" height="9" fill="#000" opacity=".35"/><rect x="3.5" y="4" width="4" height="4" fill="#fff" opacity=".45"/><circle cx="7.5" cy="1.2" r="1" fill="#222"/><circle cx="7.5" cy="14.8" r="1" fill="#222"/><circle cx="1" cy="8" r="1" fill="#222"/><circle cx="13.5" cy="8" r="1" fill="#222"/></svg>
<div class="a" style="left:705px;top:498px;width:246px;height:7px;border:1.5px solid #111;border-radius:4px;background:#e8e8e8"></div>
<div class="a" style="left:706px;top:499px;width:172px;height:5px;border-radius:3px 0 0 3px;background:#3ea2e4"></div>
<div class="a" style="left:872px;top:492px;width:11px;height:16px;border:1.5px solid #222;border-radius:4px;background:#fff"></div>
<div class="a" style="left:954px;top:492px;width:117px;height:18px;background:#fd8472"></div>
<div class="t" style="left:957px;top:495px;font-size:12.8px">S: 60.478mm</div>
<div class="a" style="left:1071px;top:492px;width:1px;height:391px;background:#5e5e78"></div>
<div class="a" style="left:1072px;top:492px;width:423px;height:18px;background:linear-gradient(#f6de58 0,#d2bc44 35%,#e8d04a 70%,#f6de58 90%,#d2bc44 100%)"></div>
<div class="a" style="left:1089px;top:492px;width:16px;height:18px;background:#fde884"></div>
<svg class="a" style="left:1075px;top:495px" width="12" height="12"><path d="M1 6 H4 M4 4 H7 V8 H4Z M7 5 H11 V7 H7" stroke="#444" fill="#555" stroke-width="1"/></svg>
<div class="t" style="left:1092px;top:495px;font-size:12.8px">Y</div>
<svg class="a" style="left:1107px;top:493px" width="14" height="16"><rect x="3" y="3.5" width="9" height="9" fill="#d2bc44" opacity=".9"/><rect x="3" y="3.5" width="9" height="9" fill="#000" opacity=".35"/><rect x="3.5" y="4" width="4" height="4" fill="#fff" opacity=".45"/><circle cx="7.5" cy="1.2" r="1" fill="#222"/><circle cx="7.5" cy="14.8" r="1" fill="#222"/><circle cx="1" cy="8" r="1" fill="#222"/><circle cx="13.5" cy="8" r="1" fill="#222"/></svg>
<div class="a" style="left:1131px;top:498px;width:251px;height:7px;border:1.5px solid #111;border-radius:4px;background:#e8e8e8"></div>
<div class="a" style="left:1132px;top:499px;width:92px;height:5px;border-radius:3px 0 0 3px;background:#3ea2e4"></div>
<div class="a" style="left:1218px;top:492px;width:11px;height:16px;border:1.5px solid #222;border-radius:4px;background:#fff"></div>
<div class="a" style="left:1386px;top:492px;width:109px;height:18px;background:#fde884"></div>
<div class="t" style="left:1389px;top:495px;font-size:12.8px">R: -27.768mm</div>
<div class="a" style="left:1495px;top:492px;width:1px;height:391px;background:#5e5e78"></div>
<div class="a" style="left:1496px;top:492px;width:424px;height:18px;background:linear-gradient(#7ad864 0,#5aa84a 35%,#6cc656 70%,#7ad864 90%,#5aa84a 100%)"></div>
<div class="a" style="left:1513px;top:492px;width:16px;height:18px;background:#90e672"></div>
<svg class="a" style="left:1499px;top:495px" width="12" height="12"><path d="M1 6 H4 M4 4 H7 V8 H4Z M7 5 H11 V7 H7" stroke="#444" fill="#555" stroke-width="1"/></svg>
<div class="t" style="left:1516px;top:495px;font-size:12.8px">G</div>
<svg class="a" style="left:1531px;top:493px" width="14" height="16"><rect x="3" y="3.5" width="9" height="9" fill="#5aa84a" opacity=".9"/><rect x="3" y="3.5" width="9" height="9" fill="#000" opacity=".35"/><rect x="3.5" y="4" width="4" height="4" fill="#fff" opacity=".45"/><circle cx="7.5" cy="1.2" r="1" fill="#222"/><circle cx="7.5" cy="14.8" r="1" fill="#222"/><circle cx="1" cy="8" r="1" fill="#222"/><circle cx="13.5" cy="8" r="1" fill="#222"/></svg>
<div class="a" style="left:1554px;top:498px;width:251px;height:7px;border:1.5px solid #111;border-radius:4px;background:#e8e8e8"></div>
<div class="a" style="left:1555px;top:499px;width:110px;height:5px;border-radius:3px 0 0 3px;background:#3ea2e4"></div>
<div class="a" style="left:1659px;top:492px;width:11px;height:16px;border:1.5px solid #222;border-radius:4px;background:#fff"></div>
<div class="a" style="left:1809px;top:492px;width:111px;height:18px;background:#90e672"></div>
<div class="t" style="left:1812px;top:495px;font-size:12.8px">A: 35.233mm</div>
<svg class="a" style="left:647px;top:510px" width="1273" height="373" viewBox="647 510 1273 373">
<defs>
<filter id="stex" x="0" y="0" width="100%" height="100%"><feTurbulence type="fractalNoise" baseFrequency="0.12" numOctaves="2" seed="5"/><feColorMatrix type="matrix" values="0 0 0 0 0  0 0 0 0 0  0 0 0 0 0  2.0 0 0 0 -0.95"/></filter>
<filter id="stexw" x="0" y="0" width="100%" height="100%"><feTurbulence type="fractalNoise" baseFrequency="0.08" numOctaves="3" seed="9"/><feColorMatrix type="matrix" values="0 0 0 0 1  0 0 0 0 1  0 0 0 0 1  2.6 0 0 0 -1.35"/></filter>
<filter id="sblur"><feGaussianBlur stdDeviation="1"/></filter>
<filter id="sblur2"><feGaussianBlur stdDeviation="1.8"/></filter>
<filter id="sblur3"><feGaussianBlur stdDeviation="3"/></filter>
<filter id="sblur6" x="-20%" y="-20%" width="140%" height="140%"><feGaussianBlur stdDeviation="6"/></filter>
<filter id="sblur10" x="-30%" y="-30%" width="160%" height="160%"><feGaussianBlur stdDeviation="10"/></filter>
</defs>
<rect x="647" y="510" width="1273" height="373" fill="#000"/>
<clipPath id="axc"><path d="M854.0 580.7 C869.8 581.2 893.7 587.7 907.5 595.6 C921.3 603.5 928.1 616.6 937.0 628.0 C945.9 639.4 954.8 651.7 961.0 664.0 C967.2 676.3 971.1 688.7 974.0 702.0 C976.9 715.3 978.8 729.0 978.6 743.8 C978.4 758.6 976.6 776.2 972.7 791.0 C968.8 805.8 965.0 821.4 955.0 832.7 C945.0 844.0 929.8 853.1 913.0 859.0 C896.2 864.9 873.2 868.0 854.0 868.0 C834.8 868.0 814.6 864.9 797.8 859.0 C781.0 853.1 763.9 844.0 753.0 832.7 C742.1 821.4 736.8 805.8 732.6 791.0 C728.4 776.2 728.0 758.6 728.0 743.8 C728.0 729.0 729.4 716.3 732.6 702.0 C735.8 687.7 740.0 671.8 747.4 658.0 C754.8 644.2 766.1 629.9 777.0 619.0 C787.9 608.1 799.8 599.0 812.6 592.6 C825.4 586.2 838.2 580.2 854.0 580.7 Z"/></clipPath>
<path d="M854.0 580.7 C869.8 581.2 893.7 587.7 907.5 595.6 C921.3 603.5 928.1 616.6 937.0 628.0 C945.9 639.4 954.8 651.7 961.0 664.0 C967.2 676.3 971.1 688.7 974.0 702.0 C976.9 715.3 978.8 729.0 978.6 743.8 C978.4 758.6 976.6 776.2 972.7 791.0 C968.8 805.8 965.0 821.4 955.0 832.7 C945.0 844.0 929.8 853.1 913.0 859.0 C896.2 864.9 873.2 868.0 854.0 868.0 C834.8 868.0 814.6 864.9 797.8 859.0 C781.0 853.1 763.9 844.0 753.0 832.7 C742.1 821.4 736.8 805.8 732.6 791.0 C728.4 776.2 728.0 758.6 728.0 743.8 C728.0 729.0 729.4 716.3 732.6 702.0 C735.8 687.7 740.0 671.8 747.4 658.0 C754.8 644.2 766.1 629.9 777.0 619.0 C787.9 608.1 799.8 599.0 812.6 592.6 C825.4 586.2 838.2 580.2 854.0 580.7 Z" fill="#dedede"/>
<path d="M854.0 587.3 C869.1 587.8 891.9 594.0 905.1 601.6 C918.3 609.1 924.7 621.6 933.3 632.5 C941.8 643.4 950.3 655.1 956.2 666.9 C962.1 678.7 965.8 690.5 968.6 703.2 C971.4 715.9 973.2 728.9 973.0 743.1 C972.8 757.3 971.1 774.0 967.4 788.2 C963.6 802.3 960.0 817.2 950.5 828.0 C941.0 838.8 926.4 847.5 910.3 853.1 C894.3 858.7 872.3 861.7 854.0 861.7 C835.7 861.7 816.4 858.7 800.3 853.1 C784.3 847.5 767.9 838.8 757.5 828.0 C747.2 817.2 742.0 802.3 738.1 788.2 C734.1 774.0 733.7 757.3 733.7 743.1 C733.7 728.9 735.0 716.8 738.1 703.2 C741.2 689.5 745.1 674.4 752.2 661.1 C759.3 647.9 770.1 634.3 780.5 623.9 C790.8 613.5 802.2 604.8 814.5 598.7 C826.7 592.6 838.9 586.9 854.0 587.3 Z" fill="#2c2c2c"/>
<path d="M854.0 589.5 C868.9 590.0 891.3 596.1 904.3 603.5 C917.3 611.0 923.6 623.3 932.0 634.0 C940.4 644.7 948.8 656.2 954.6 667.8 C960.4 679.4 964.0 691.1 966.8 703.6 C969.6 716.1 971.3 728.9 971.1 742.9 C970.9 756.8 969.3 773.3 965.6 787.2 C961.9 801.1 958.3 815.8 948.9 826.4 C939.6 837.1 925.3 845.6 909.5 851.1 C893.6 856.7 872.0 859.6 854.0 859.6 C836.0 859.6 817.0 856.7 801.2 851.1 C785.3 845.6 769.3 837.1 759.1 826.4 C748.8 815.8 743.8 801.1 739.9 787.2 C736.0 773.3 735.6 756.8 735.6 742.9 C735.6 728.9 736.8 717.0 739.9 703.6 C742.9 690.1 746.8 675.2 753.8 662.2 C760.8 649.2 771.4 635.8 781.6 625.5 C791.8 615.3 803.0 606.7 815.1 600.7 C827.1 594.7 839.1 589.1 854.0 589.5 Z" fill="#d0d0d0"/>
<path d="M854.0 599.1 C867.8 599.6 888.7 605.3 900.8 612.1 C912.9 619.0 918.8 630.5 926.6 640.5 C934.4 650.5 942.2 661.2 947.6 672.0 C953.0 682.8 956.4 693.6 959.0 705.2 C961.6 716.9 963.2 728.8 963.0 741.8 C962.8 754.8 961.3 770.2 957.9 783.1 C954.4 796.1 951.1 809.7 942.4 819.6 C933.7 829.5 920.4 837.5 905.6 842.6 C890.9 847.8 870.8 850.5 854.0 850.5 C837.2 850.5 819.6 847.8 804.8 842.6 C790.1 837.5 775.1 829.5 765.6 819.6 C756.1 809.7 751.4 796.1 747.8 783.1 C744.1 770.2 743.8 754.8 743.8 741.8 C743.8 728.8 744.9 717.8 747.8 705.2 C750.6 692.7 754.2 678.9 760.7 666.8 C767.2 654.6 777.1 642.2 786.6 632.6 C796.1 623.1 806.5 615.1 817.8 609.5 C829.0 603.9 840.2 598.7 854.0 599.1 Z" fill="#404040"/>
<g clip-path="url(#axc)"><ellipse cx="744" cy="728" rx="10" ry="55" fill="#8a8a8a" filter="url(#sblur3)"/><ellipse cx="966" cy="728" rx="10" ry="58" fill="#8a8a8a" filter="url(#sblur3)"/></g>
<path d="M847.8 604.8 C866.2 605.4 895.1 616.0 909.4 624.5 C923.7 633.0 926.5 641.8 933.7 655.5 C940.9 669.3 948.2 691.0 952.3 707.3 C956.5 723.6 958.5 738.1 958.5 753.5 C958.5 768.8 957.5 786.6 952.3 799.4 C947.2 812.2 939.7 822.7 927.5 830.2 C915.2 837.6 895.2 841.9 878.8 843.9 C862.5 846.0 845.0 844.8 829.2 842.5 C813.3 840.2 795.9 837.8 783.6 830.2 C771.4 822.5 761.4 809.6 755.7 796.3 C750.0 783.0 749.5 766.3 749.5 750.5 C749.5 734.6 751.5 716.9 755.7 701.1 C759.8 685.3 767.1 668.8 774.3 655.5 C781.5 642.3 786.7 629.8 798.9 621.4 C811.2 612.9 829.4 604.3 847.8 604.8 Z" fill="#161616"/>
<path d="M848.0 609.0 C865.8 609.5 893.7 619.8 907.5 628.0 C921.3 636.2 924.1 644.7 931.0 658.0 C937.9 671.3 945.0 692.2 949.0 708.0 C953.0 723.8 955.0 737.8 955.0 752.6 C955.0 767.4 954.0 784.6 949.0 797.0 C944.0 809.4 936.8 819.5 925.0 826.7 C913.2 833.9 893.8 838.0 878.0 840.0 C862.2 842.0 845.3 840.8 830.0 838.6 C814.7 836.4 797.8 834.1 786.0 826.7 C774.2 819.3 764.5 806.8 759.0 794.0 C753.5 781.2 753.0 765.0 753.0 749.7 C753.0 734.4 755.0 717.3 759.0 702.0 C763.0 686.7 770.0 670.8 777.0 658.0 C784.0 645.2 789.0 633.2 800.8 625.0 C812.6 616.8 830.2 608.5 848.0 609.0 Z" fill="#6c6c6c"/>
<path d="M849.2 632.8 C863.4 633.2 885.7 641.5 896.8 648.0 C907.9 654.5 910.1 661.3 915.6 672.0 C921.1 682.7 926.8 699.4 930.0 712.0 C933.2 724.6 934.8 735.8 934.8 747.7 C934.8 759.5 934.0 773.3 930.0 783.2 C926.0 793.1 920.3 801.2 910.8 807.0 C901.3 812.7 885.9 816.0 873.2 817.6 C860.5 819.2 847.1 818.3 834.8 816.5 C822.5 814.7 809.1 812.9 799.6 807.0 C790.1 801.0 782.4 791.1 778.0 780.8 C773.6 770.5 773.2 757.6 773.2 745.4 C773.2 733.1 774.8 719.4 778.0 707.2 C781.2 695.0 786.8 682.3 792.4 672.0 C798.0 661.7 802.0 652.1 811.4 645.6 C820.9 639.1 835.0 632.4 849.2 632.8 Z" fill="#858585" filter="url(#sblur10)"/>
<clipPath id="axb"><path d="M848.0 609.0 C865.8 609.5 893.7 619.8 907.5 628.0 C921.3 636.2 924.1 644.7 931.0 658.0 C937.9 671.3 945.0 692.2 949.0 708.0 C953.0 723.8 955.0 737.8 955.0 752.6 C955.0 767.4 954.0 784.6 949.0 797.0 C944.0 809.4 936.8 819.5 925.0 826.7 C913.2 833.9 893.8 838.0 878.0 840.0 C862.2 842.0 845.3 840.8 830.0 838.6 C814.7 836.4 797.8 834.1 786.0 826.7 C774.2 819.3 764.5 806.8 759.0 794.0 C753.5 781.2 753.0 765.0 753.0 749.7 C753.0 734.4 755.0 717.3 759.0 702.0 C763.0 686.7 770.0 670.8 777.0 658.0 C784.0 645.2 789.0 633.2 800.8 625.0 C812.6 616.8 830.2 608.5 848.0 609.0 Z"/></clipPath><g clip-path="url(#axb)">
<path d="M834.1 642.3 Q826.8 642.6 823.8 644.5 M850.0 609.6 C849.2 610.9 846.5 614.7 844.8 617.3 C843.1 619.9 840.9 622.3 839.9 625.1 C838.9 628.0 839.7 631.5 838.8 634.3 C837.8 637.2 834.9 641.0 834.1 642.3  M857.9 622.1 Q852.7 622.7 848.2 620.1 M863.9 614.1 C862.9 615.4 858.8 619.1 857.9 622.1 C856.9 625.1 857.1 629.1 858.1 632.1 C859.0 635.2 861.2 638.6 863.7 640.4 C866.2 642.3 871.7 642.9 873.3 643.4  M887.7 621.7 C888.0 622.4 888.7 624.6 889.6 625.8 C890.4 627.0 891.5 628.2 892.8 629.0 C894.0 629.8 895.8 629.7 897.0 630.6 C898.1 631.5 899.0 632.9 899.7 634.2 C900.4 635.5 900.7 637.8 900.9 638.5  M903.1 626.6 C903.5 627.9 905.3 631.8 905.3 634.4 C905.3 637.0 903.6 639.5 903.1 642.2 C902.6 644.8 902.4 647.5 902.4 650.2 C902.4 652.9 902.9 656.9 903.0 658.3  M909.4 639.2 Q915.6 638.5 916.5 640.5 M910.2 631.4 C909.9 632.1 908.5 633.9 908.4 635.2 C908.2 636.5 909.2 637.8 909.4 639.2 C909.6 640.6 909.7 642.1 909.4 643.4 C909.1 644.7 908.4 646.0 907.6 647.1 C906.8 648.2 905.0 649.5 904.5 649.9  M915.6 638.3 C913.9 640.2 909.3 646.4 905.5 649.7 C901.7 653.0 897.5 656.7 892.8 658.2 C888.2 659.7 880.1 658.6 877.6 658.7  M922.4 647.1 C921.8 648.5 919.9 652.8 918.7 655.7 C917.4 658.5 916.8 662.0 914.8 664.2 C912.9 666.4 909.5 667.5 906.8 669.0 C904.1 670.5 901.1 671.6 898.4 673.1 C895.7 674.6 891.8 677.4 890.5 678.2  M925.6 669.6 Q921.1 672.4 920.4 672.7 M926.8 652.7 C926.4 654.1 924.4 658.2 924.2 661.0 C924.0 663.8 924.3 667.1 925.6 669.6 C926.8 672.1 929.9 673.5 931.7 675.8 C933.6 678.0 934.9 680.6 936.5 683.1 C938.1 685.5 940.6 689.0 941.5 690.2  M935.6 670.8 C934.8 671.3 932.5 672.9 930.9 673.8 C929.2 674.8 927.3 675.3 925.8 676.4 C924.3 677.4 922.8 678.7 921.6 680.1 C920.4 681.6 919.2 684.2 918.8 685.0  M936.9 674.5 C935.0 676.3 928.7 681.0 925.6 685.1 C922.6 689.2 920.7 694.3 918.6 699.0 C916.6 703.8 914.1 711.2 913.2 713.6  M938.5 699.7 Q938.6 704.2 941.5 709.7 M944.4 695.1 C943.4 695.8 940.2 697.9 938.5 699.7 C936.9 701.4 936.2 704.3 934.4 705.8 C932.5 707.2 928.6 707.9 927.5 708.3  M949.2 709.3 C948.3 709.8 945.9 711.5 944.1 712.2 C942.3 712.8 940.2 712.8 938.3 713.1 C936.3 713.4 934.1 713.1 932.5 713.9 C930.8 714.8 929.0 717.3 928.3 718.0  M935.8 726.1 Q931.7 727.3 925.7 726.1 M950.1 716.2 C949.1 716.5 946.1 717.0 944.4 717.9 C942.6 718.7 941.0 720.0 939.5 721.4 C938.1 722.8 937.3 724.8 935.8 726.1 C934.2 727.3 932.2 728.0 930.4 728.8 C928.6 729.6 925.8 730.6 924.8 730.9  M951.2 724.7 C950.3 724.9 947.7 725.6 945.8 725.9 C944.0 726.3 941.9 726.1 940.4 727.0 C938.8 727.8 938.1 730.2 936.5 730.9 C935.0 731.7 932.8 731.2 931.0 731.7 C929.3 732.1 926.8 733.4 925.9 733.7  M933.4 735.6 Q927.8 738.1 925.8 738.3 M952.9 736.7 C952.0 736.9 949.6 737.7 948.0 737.9 C946.3 738.1 944.6 737.8 942.9 737.9 C941.2 737.9 939.4 738.4 937.9 738.0 C936.3 737.7 934.2 736.0 933.4 735.6  M923.6 751.2 Q921.8 757.2 917.9 759.4 M954.7 754.7 C953.0 754.2 948.0 752.0 944.6 751.7 C941.2 751.3 937.6 752.6 934.1 752.5 C930.6 752.5 925.4 751.4 923.6 751.2  M928.1 740.0 Q933.8 733.8 936.1 732.4 M953.4 764.5 C952.5 763.5 950.3 760.4 948.3 758.8 C946.3 757.3 943.9 756.3 941.6 755.3 C939.2 754.3 936.4 754.2 934.3 752.9 C932.2 751.6 929.9 749.7 928.9 747.6 C927.9 745.4 928.2 741.3 928.1 740.0  M952.4 771.8 C951.3 770.7 948.4 766.8 945.9 765.4 C943.3 764.0 939.8 764.4 937.0 763.3 C934.1 762.3 931.8 760.0 929.0 758.9 C926.2 757.7 921.7 756.7 920.2 756.3  M950.2 788.0 C948.4 787.2 942.2 786.0 939.4 783.6 C936.7 781.2 935.5 776.9 933.6 773.5 C931.6 770.2 929.2 767.0 927.8 763.4 C926.3 759.9 925.3 754.1 924.8 752.2  M922.4 784.8 Q919.5 780.2 920.7 776.4 M949.3 794.6 C948.4 793.8 945.7 790.9 943.5 789.8 C941.3 788.8 938.7 788.3 936.2 788.1 C933.7 787.9 931.0 789.3 928.7 788.8 C926.4 788.2 923.4 785.4 922.4 784.8  M941.4 806.4 C940.8 806.4 938.9 806.1 937.7 806.3 C936.6 806.5 935.2 807.0 934.4 807.7 C933.6 808.5 933.3 809.9 932.7 811.0 C932.1 812.0 931.4 813.0 930.8 814.1 C930.2 815.1 929.4 816.8 929.1 817.3  M909.8 781.5 Q904.9 779.2 900.0 776.0 M937.1 811.7 C934.8 810.9 927.2 809.4 923.1 806.8 C919.1 804.2 915.2 800.2 913.0 796.0 C910.8 791.7 910.4 783.9 909.8 781.5  M931.5 818.6 C930.3 817.9 926.5 815.9 924.3 814.1 C922.2 812.3 920.8 809.4 918.5 808.0 C916.2 806.5 913.2 805.7 910.4 805.2 C907.7 804.8 904.5 804.2 901.9 805.0 C899.4 805.8 896.3 809.3 895.2 810.2  M920.9 827.9 C919.9 827.3 917.1 825.0 914.9 824.3 C912.8 823.6 910.2 823.7 908.0 823.9 C905.7 824.1 902.3 825.3 901.2 825.6  M900.3 815.7 Q896.6 815.4 895.0 815.1 M911.4 830.6 C910.6 829.8 908.1 827.9 906.8 826.3 C905.5 824.8 904.5 822.8 903.4 821.1 C902.4 819.3 901.2 817.5 900.3 815.7 C899.4 813.8 898.5 810.8 898.2 809.8  M896.2 834.8 C896.3 833.9 896.2 831.0 896.5 829.1 C896.8 827.3 897.3 825.3 898.2 823.7 C899.1 822.0 900.6 820.7 901.8 819.3 C903.1 817.8 905.0 815.7 905.6 815.0  M882.3 829.8 Q883.8 827.0 888.0 826.0 M881.5 839.0 C881.7 837.5 881.5 832.7 882.3 829.8 C883.0 826.8 884.1 823.5 886.1 821.4 C888.1 819.3 891.7 818.7 894.3 817.1 C897.0 815.5 899.4 813.6 902.0 811.9 C904.5 810.2 908.4 807.7 909.7 806.8  M874.4 839.9 C873.5 837.4 871.5 829.9 869.3 825.2 C867.1 820.5 862.7 816.6 861.3 811.8 C860.0 807.0 861.0 798.9 861.0 796.3  M856.5 839.4 C858.7 837.9 864.8 832.8 869.5 830.8 C874.2 828.7 879.5 828.1 884.6 827.0 C889.6 825.8 897.3 824.4 899.8 823.8  M844.2 839.0 C844.0 838.3 843.3 836.0 843.3 834.5 C843.3 833.0 843.8 831.5 844.2 830.0 C844.7 828.6 845.5 827.3 846.1 825.9 C846.6 824.4 847.0 823.0 847.5 821.5 C847.9 820.1 848.6 817.9 848.8 817.1  M848.9 826.7 Q853.2 830.2 858.1 834.3 M836.2 838.8 C836.4 838.0 836.8 835.6 837.4 834.2 C838.0 832.7 838.8 831.1 840.0 830.2 C841.2 829.3 843.1 829.3 844.6 828.8 C846.0 828.2 848.1 827.0 848.9 826.7  M822.6 836.6 C822.3 834.8 822.5 829.1 821.2 825.9 C819.8 822.6 817.1 819.8 814.6 817.2 C812.2 814.6 807.9 811.2 806.5 810.0  M813.8 834.2 C814.4 833.7 816.6 832.3 817.7 831.0 C818.8 829.8 819.2 827.9 820.3 826.7 C821.4 825.5 823.3 825.0 824.4 823.8 C825.5 822.6 826.5 820.2 826.9 819.5  M797.8 819.7 Q801.5 820.1 806.4 818.5 M799.2 814.4 Q802.4 815.9 807.8 814.6 M800.9 803.9 Q798.4 801.7 795.4 800.3 M798.4 830.0 C798.1 829.2 796.6 826.7 796.5 824.9 C796.4 823.2 797.4 821.4 797.8 819.7 C798.3 817.9 799.0 816.2 799.2 814.4 C799.3 812.6 798.5 810.7 798.8 808.9 C799.1 807.2 800.6 804.8 800.9 803.9  M790.2 827.8 C791.4 826.6 795.4 823.3 797.6 820.6 C799.8 818.0 801.1 814.7 803.3 812.0 C805.4 809.3 809.3 805.8 810.5 804.6  M781.7 821.5 C783.6 820.1 788.7 815.0 792.9 813.2 C797.0 811.5 802.2 810.5 806.6 811.0 C811.0 811.5 817.2 815.6 819.4 816.5  M775.9 805.2 Q771.8 802.4 771.3 802.9 M775.7 814.2 C775.9 813.5 776.7 811.2 776.7 809.7 C776.7 808.2 776.1 806.7 775.9 805.2 C775.6 803.7 775.4 802.2 775.4 800.6 C775.4 799.1 775.7 796.8 775.8 796.0  M777.0 796.3 Q774.0 791.0 773.8 787.9 M770.0 807.3 C771.1 805.4 774.0 799.4 777.0 796.3 C779.9 793.3 783.8 790.9 787.7 789.0 C791.5 787.1 798.0 785.6 800.0 784.9  M795.6 778.2 Q796.7 782.8 797.3 788.1 M761.4 796.9 C762.7 796.3 767.1 795.0 768.9 793.1 C770.8 791.2 770.8 787.5 772.6 785.5 C774.4 783.5 777.2 782.3 779.7 780.9 C782.1 779.5 784.6 777.6 787.2 777.1 C789.9 776.7 794.2 778.0 795.6 778.2  M758.1 787.1 C759.6 787.3 764.3 788.9 767.4 788.6 C770.4 788.3 773.2 786.3 776.1 785.1 C779.0 783.9 782.4 783.3 784.8 781.5 C787.2 779.7 789.7 775.3 790.7 774.1  M756.5 775.9 C757.2 775.4 759.5 773.9 760.8 772.8 C762.1 771.7 763.3 770.4 764.4 769.1 C765.6 767.8 766.4 766.2 767.6 765.0 C768.8 763.7 770.2 762.6 771.5 761.5 C772.9 760.4 775.0 758.9 775.7 758.3  M755.1 765.4 C756.1 764.9 759.7 764.0 761.2 762.5 C762.7 760.9 763.7 758.5 764.1 756.3 C764.5 754.2 764.5 751.7 763.9 749.5 C763.3 747.4 761.2 744.6 760.6 743.6  M753.8 755.7 C755.5 755.0 760.3 752.0 763.8 751.4 C767.3 750.9 771.2 751.5 774.7 752.3 C778.2 753.1 781.3 755.7 784.8 756.2 C788.3 756.7 793.9 755.4 795.7 755.3  M753.9 742.5 C755.0 741.5 758.0 738.0 760.5 736.4 C763.0 734.9 766.1 733.3 768.9 733.2 C771.8 733.1 774.7 735.4 777.6 735.7 C780.5 736.1 783.7 735.7 786.6 735.1 C789.5 734.5 793.7 732.8 795.2 732.3  M778.3 714.2 Q775.7 708.4 774.0 703.1 M756.5 722.0 C757.5 721.9 760.6 722.0 762.4 721.4 C764.3 720.8 765.8 719.1 767.7 718.5 C769.5 717.9 771.8 718.5 773.6 717.8 C775.4 717.1 776.7 715.4 778.3 714.2 C779.9 713.0 782.3 711.2 783.1 710.6  M757.6 712.8 C759.0 713.5 763.1 716.7 766.1 717.2 C769.0 717.7 772.3 715.6 775.4 715.7 C778.5 715.8 781.7 717.8 784.7 717.6 C787.7 717.4 792.2 715.0 793.6 714.5  M758.5 706.2 C759.2 706.0 761.5 705.4 763.0 705.3 C764.6 705.2 766.1 705.7 767.7 705.7 C769.2 705.8 770.9 706.0 772.3 705.5 C773.7 705.0 774.8 703.5 776.2 702.9 C777.6 702.2 779.9 701.7 780.6 701.5  M765.4 686.3 C766.5 687.3 769.6 690.8 772.0 692.7 C774.4 694.6 777.3 695.8 779.7 697.7 C782.1 699.6 783.7 702.5 786.2 704.1 C788.8 705.8 793.4 706.9 794.8 707.4  M783.3 683.6 Q788.3 689.0 789.2 690.3 M766.8 683.0 C767.7 683.0 770.6 683.0 772.5 683.4 C774.3 683.8 776.1 685.3 777.9 685.3 C779.7 685.3 781.5 684.0 783.3 683.6 C785.2 683.2 788.0 683.0 789.0 682.9  M801.9 694.6 Q798.1 698.5 796.0 698.6 M773.9 665.5 C775.8 665.9 781.6 666.6 785.1 668.0 C788.6 669.4 792.2 671.3 795.0 673.8 C797.7 676.4 800.5 679.7 801.7 683.1 C802.8 686.6 801.9 692.7 801.9 694.6  M780.3 653.5 C782.1 654.2 787.9 655.9 791.1 658.1 C794.2 660.2 796.7 663.5 799.2 666.5 C801.7 669.5 804.7 672.6 805.9 676.1 C807.2 679.7 806.6 685.9 806.8 687.8  M783.1 672.8 Q789.1 671.8 791.6 674.5 M781.9 651.2 C782.2 653.0 783.2 658.3 783.4 661.9 C783.6 665.5 784.2 669.5 783.1 672.8 C782.1 676.1 778.3 680.4 777.3 681.9  M792.5 636.5 C792.9 637.3 793.8 639.7 794.6 641.2 C795.4 642.7 796.7 644.0 797.3 645.6 C798.0 647.2 797.8 649.1 798.4 650.7 C799.0 652.3 800.4 654.5 800.9 655.2  M794.9 633.1 C795.7 635.5 798.3 642.7 799.6 647.5 C801.0 652.3 801.6 657.4 803.1 662.2 C804.7 667.0 807.9 673.9 808.8 676.2  M802.8 624.3 C803.9 625.3 807.2 628.5 809.7 630.2 C812.2 631.9 815.5 632.5 817.7 634.4 C819.9 636.3 821.2 639.4 823.0 641.8 C824.8 644.2 827.0 646.4 828.5 649.0 C830.0 651.6 831.4 656.0 832.0 657.4  M817.4 619.4 C817.3 621.3 816.3 627.0 816.7 630.7 C817.1 634.4 820.0 638.1 819.8 641.6 C819.6 645.2 816.2 650.3 815.4 652.1  M831.1 644.0 Q834.4 647.8 839.5 647.1 M834.7 653.2 Q842.6 654.7 844.6 653.4 M832.4 614.3 C832.5 615.9 833.0 620.9 832.9 624.2 C832.8 627.5 832.3 630.8 832.0 634.1 C831.7 637.4 830.6 640.8 831.1 644.0 C831.5 647.2 834.1 651.7 834.7 653.2  M839.7 611.8 C840.5 612.8 842.9 615.9 844.7 617.8 C846.6 619.6 849.0 620.9 850.7 622.7 C852.5 624.6 854.6 627.9 855.4 629.0 " stroke="#4a4a4a" stroke-width="8.7" fill="none" stroke-linecap="round" opacity=".6" filter="url(#sblur2)"/><path d="M834.1 642.3 Q826.8 642.6 823.8 644.5 M850.0 609.6 C849.2 610.9 846.5 614.7 844.8 617.3 C843.1 619.9 840.9 622.3 839.9 625.1 C838.9 628.0 839.7 631.5 838.8 634.3 C837.8 637.2 834.9 641.0 834.1 642.3  M857.9 622.1 Q852.7 622.7 848.2 620.1 M863.9 614.1 C862.9 615.4 858.8 619.1 857.9 622.1 C856.9 625.1 857.1 629.1 858.1 632.1 C859.0 635.2 861.2 638.6 863.7 640.4 C866.2 642.3 871.7 642.9 873.3 643.4  M887.7 621.7 C888.0 622.4 888.7 624.6 889.6 625.8 C890.4 627.0 891.5 628.2 892.8 629.0 C894.0 629.8 895.8 629.7 897.0 630.6 C898.1 631.5 899.0 632.9 899.7 634.2 C900.4 635.5 900.7 637.8 900.9 638.5  M903.1 626.6 C903.5 627.9 905.3 631.8 905.3 634.4 C905.3 637.0 903.6 639.5 903.1 642.2 C902.6 644.8 902.4 647.5 902.4 650.2 C902.4 652.9 902.9 656.9 903.0 658.3  M909.4 639.2 Q915.6 638.5 916.5 640.5 M910.2 631.4 C909.9 632.1 908.5 633.9 908.4 635.2 C908.2 636.5 909.2 637.8 909.4 639.2 C909.6 640.6 909.7 642.1 909.4 643.4 C909.1 644.7 908.4 646.0 907.6 647.1 C906.8 648.2 905.0 649.5 904.5 649.9  M915.6 638.3 C913.9 640.2 909.3 646.4 905.5 649.7 C901.7 653.0 897.5 656.7 892.8 658.2 C888.2 659.7 880.1 658.6 877.6 658.7  M922.4 647.1 C921.8 648.5 919.9 652.8 918.7 655.7 C917.4 658.5 916.8 662.0 914.8 664.2 C912.9 666.4 909.5 667.5 906.8 669.0 C904.1 670.5 901.1 671.6 898.4 673.1 C895.7 674.6 891.8 677.4 890.5 678.2  M925.6 669.6 Q921.1 672.4 920.4 672.7 M926.8 652.7 C926.4 654.1 924.4 658.2 924.2 661.0 C924.0 663.8 924.3 667.1 925.6 669.6 C926.8 672.1 929.9 673.5 931.7 675.8 C933.6 678.0 934.9 680.6 936.5 683.1 C938.1 685.5 940.6 689.0 941.5 690.2  M935.6 670.8 C934.8 671.3 932.5 672.9 930.9 673.8 C929.2 674.8 927.3 675.3 925.8 676.4 C924.3 677.4 922.8 678.7 921.6 680.1 C920.4 681.6 919.2 684.2 918.8 685.0  M936.9 674.5 C935.0 676.3 928.7 681.0 925.6 685.1 C922.6 689.2 920.7 694.3 918.6 699.0 C916.6 703.8 914.1 711.2 913.2 713.6  M938.5 699.7 Q938.6 704.2 941.5 709.7 M944.4 695.1 C943.4 695.8 940.2 697.9 938.5 699.7 C936.9 701.4 936.2 704.3 934.4 705.8 C932.5 707.2 928.6 707.9 927.5 708.3  M949.2 709.3 C948.3 709.8 945.9 711.5 944.1 712.2 C942.3 712.8 940.2 712.8 938.3 713.1 C936.3 713.4 934.1 713.1 932.5 713.9 C930.8 714.8 929.0 717.3 928.3 718.0  M935.8 726.1 Q931.7 727.3 925.7 726.1 M950.1 716.2 C949.1 716.5 946.1 717.0 944.4 717.9 C942.6 718.7 941.0 720.0 939.5 721.4 C938.1 722.8 937.3 724.8 935.8 726.1 C934.2 727.3 932.2 728.0 930.4 728.8 C928.6 729.6 925.8 730.6 924.8 730.9  M951.2 724.7 C950.3 724.9 947.7 725.6 945.8 725.9 C944.0 726.3 941.9 726.1 940.4 727.0 C938.8 727.8 938.1 730.2 936.5 730.9 C935.0 731.7 932.8 731.2 931.0 731.7 C929.3 732.1 926.8 733.4 925.9 733.7  M933.4 735.6 Q927.8 738.1 925.8 738.3 M952.9 736.7 C952.0 736.9 949.6 737.7 948.0 737.9 C946.3 738.1 944.6 737.8 942.9 737.9 C941.2 737.9 939.4 738.4 937.9 738.0 C936.3 737.7 934.2 736.0 933.4 735.6  M923.6 751.2 Q921.8 757.2 917.9 759.4 M954.7 754.7 C953.0 754.2 948.0 752.0 944.6 751.7 C941.2 751.3 937.6 752.6 934.1 752.5 C930.6 752.5 925.4 751.4 923.6 751.2  M928.1 740.0 Q933.8 733.8 936.1 732.4 M953.4 764.5 C952.5 763.5 950.3 760.4 948.3 758.8 C946.3 757.3 943.9 756.3 941.6 755.3 C939.2 754.3 936.4 754.2 934.3 752.9 C932.2 751.6 929.9 749.7 928.9 747.6 C927.9 745.4 928.2 741.3 928.1 740.0  M952.4 771.8 C951.3 770.7 948.4 766.8 945.9 765.4 C943.3 764.0 939.8 764.4 937.0 763.3 C934.1 762.3 931.8 760.0 929.0 758.9 C926.2 757.7 921.7 756.7 920.2 756.3  M950.2 788.0 C948.4 787.2 942.2 786.0 939.4 783.6 C936.7 781.2 935.5 776.9 933.6 773.5 C931.6 770.2 929.2 767.0 927.8 763.4 C926.3 759.9 925.3 754.1 924.8 752.2  M922.4 784.8 Q919.5 780.2 920.7 776.4 M949.3 794.6 C948.4 793.8 945.7 790.9 943.5 789.8 C941.3 788.8 938.7 788.3 936.2 788.1 C933.7 787.9 931.0 789.3 928.7 788.8 C926.4 788.2 923.4 785.4 922.4 784.8  M941.4 806.4 C940.8 806.4 938.9 806.1 937.7 806.3 C936.6 806.5 935.2 807.0 934.4 807.7 C933.6 808.5 933.3 809.9 932.7 811.0 C932.1 812.0 931.4 813.0 930.8 814.1 C930.2 815.1 929.4 816.8 929.1 817.3  M909.8 781.5 Q904.9 779.2 900.0 776.0 M937.1 811.7 C934.8 810.9 927.2 809.4 923.1 806.8 C919.1 804.2 915.2 800.2 913.0 796.0 C910.8 791.7 910.4 783.9 909.8 781.5  M931.5 818.6 C930.3 817.9 926.5 815.9 924.3 814.1 C922.2 812.3 920.8 809.4 918.5 808.0 C916.2 806.5 913.2 805.7 910.4 805.2 C907.7 804.8 904.5 804.2 901.9 805.0 C899.4 805.8 896.3 809.3 895.2 810.2  M920.9 827.9 C919.9 827.3 917.1 825.0 914.9 824.3 C912.8 823.6 910.2 823.7 908.0 823.9 C905.7 824.1 902.3 825.3 901.2 825.6  M900.3 815.7 Q896.6 815.4 895.0 815.1 M911.4 830.6 C910.6 829.8 908.1 827.9 906.8 826.3 C905.5 824.8 904.5 822.8 903.4 821.1 C902.4 819.3 901.2 817.5 900.3 815.7 C899.4 813.8 898.5 810.8 898.2 809.8  M896.2 834.8 C896.3 833.9 896.2 831.0 896.5 829.1 C896.8 827.3 897.3 825.3 898.2 823.7 C899.1 822.0 900.6 820.7 901.8 819.3 C903.1 817.8 905.0 815.7 905.6 815.0  M882.3 829.8 Q883.8 827.0 888.0 826.0 M881.5 839.0 C881.7 837.5 881.5 832.7 882.3 829.8 C883.0 826.8 884.1 823.5 886.1 821.4 C888.1 819.3 891.7 818.7 894.3 817.1 C897.0 815.5 899.4 813.6 902.0 811.9 C904.5 810.2 908.4 807.7 909.7 806.8  M874.4 839.9 C873.5 837.4 871.5 829.9 869.3 825.2 C867.1 820.5 862.7 816.6 861.3 811.8 C860.0 807.0 861.0 798.9 861.0 796.3  M856.5 839.4 C858.7 837.9 864.8 832.8 869.5 830.8 C874.2 828.7 879.5 828.1 884.6 827.0 C889.6 825.8 897.3 824.4 899.8 823.8  M844.2 839.0 C844.0 838.3 843.3 836.0 843.3 834.5 C843.3 833.0 843.8 831.5 844.2 830.0 C844.7 828.6 845.5 827.3 846.1 825.9 C846.6 824.4 847.0 823.0 847.5 821.5 C847.9 820.1 848.6 817.9 848.8 817.1  M848.9 826.7 Q853.2 830.2 858.1 834.3 M836.2 838.8 C836.4 838.0 836.8 835.6 837.4 834.2 C838.0 832.7 838.8 831.1 840.0 830.2 C841.2 829.3 843.1 829.3 844.6 828.8 C846.0 828.2 848.1 827.0 848.9 826.7  M822.6 836.6 C822.3 834.8 822.5 829.1 821.2 825.9 C819.8 822.6 817.1 819.8 814.6 817.2 C812.2 814.6 807.9 811.2 806.5 810.0  M813.8 834.2 C814.4 833.7 816.6 832.3 817.7 831.0 C818.8 829.8 819.2 827.9 820.3 826.7 C821.4 825.5 823.3 825.0 824.4 823.8 C825.5 822.6 826.5 820.2 826.9 819.5  M797.8 819.7 Q801.5 820.1 806.4 818.5 M799.2 814.4 Q802.4 815.9 807.8 814.6 M800.9 803.9 Q798.4 801.7 795.4 800.3 M798.4 830.0 C798.1 829.2 796.6 826.7 796.5 824.9 C796.4 823.2 797.4 821.4 797.8 819.7 C798.3 817.9 799.0 816.2 799.2 814.4 C799.3 812.6 798.5 810.7 798.8 808.9 C799.1 807.2 800.6 804.8 800.9 803.9  M790.2 827.8 C791.4 826.6 795.4 823.3 797.6 820.6 C799.8 818.0 801.1 814.7 803.3 812.0 C805.4 809.3 809.3 805.8 810.5 804.6  M781.7 821.5 C783.6 820.1 788.7 815.0 792.9 813.2 C797.0 811.5 802.2 810.5 806.6 811.0 C811.0 811.5 817.2 815.6 819.4 816.5  M775.9 805.2 Q771.8 802.4 771.3 802.9 M775.7 814.2 C775.9 813.5 776.7 811.2 776.7 809.7 C776.7 808.2 776.1 806.7 775.9 805.2 C775.6 803.7 775.4 802.2 775.4 800.6 C775.4 799.1 775.7 796.8 775.8 796.0  M777.0 796.3 Q774.0 791.0 773.8 787.9 M770.0 807.3 C771.1 805.4 774.0 799.4 777.0 796.3 C779.9 793.3 783.8 790.9 787.7 789.0 C791.5 787.1 798.0 785.6 800.0 784.9  M795.6 778.2 Q796.7 782.8 797.3 788.1 M761.4 796.9 C762.7 796.3 767.1 795.0 768.9 793.1 C770.8 791.2 770.8 787.5 772.6 785.5 C774.4 783.5 777.2 782.3 779.7 780.9 C782.1 779.5 784.6 777.6 787.2 777.1 C789.9 776.7 794.2 778.0 795.6 778.2  M758.1 787.1 C759.6 787.3 764.3 788.9 767.4 788.6 C770.4 788.3 773.2 786.3 776.1 785.1 C779.0 783.9 782.4 783.3 784.8 781.5 C787.2 779.7 789.7 775.3 790.7 774.1  M756.5 775.9 C757.2 775.4 759.5 773.9 760.8 772.8 C762.1 771.7 763.3 770.4 764.4 769.1 C765.6 767.8 766.4 766.2 767.6 765.0 C768.8 763.7 770.2 762.6 771.5 761.5 C772.9 760.4 775.0 758.9 775.7 758.3  M755.1 765.4 C756.1 764.9 759.7 764.0 761.2 762.5 C762.7 760.9 763.7 758.5 764.1 756.3 C764.5 754.2 764.5 751.7 763.9 749.5 C763.3 747.4 761.2 744.6 760.6 743.6  M753.8 755.7 C755.5 755.0 760.3 752.0 763.8 751.4 C767.3 750.9 771.2 751.5 774.7 752.3 C778.2 753.1 781.3 755.7 784.8 756.2 C788.3 756.7 793.9 755.4 795.7 755.3  M753.9 742.5 C755.0 741.5 758.0 738.0 760.5 736.4 C763.0 734.9 766.1 733.3 768.9 733.2 C771.8 733.1 774.7 735.4 777.6 735.7 C780.5 736.1 783.7 735.7 786.6 735.1 C789.5 734.5 793.7 732.8 795.2 732.3  M778.3 714.2 Q775.7 708.4 774.0 703.1 M756.5 722.0 C757.5 721.9 760.6 722.0 762.4 721.4 C764.3 720.8 765.8 719.1 767.7 718.5 C769.5 717.9 771.8 718.5 773.6 717.8 C775.4 717.1 776.7 715.4 778.3 714.2 C779.9 713.0 782.3 711.2 783.1 710.6  M757.6 712.8 C759.0 713.5 763.1 716.7 766.1 717.2 C769.0 717.7 772.3 715.6 775.4 715.7 C778.5 715.8 781.7 717.8 784.7 717.6 C787.7 717.4 792.2 715.0 793.6 714.5  M758.5 706.2 C759.2 706.0 761.5 705.4 763.0 705.3 C764.6 705.2 766.1 705.7 767.7 705.7 C769.2 705.8 770.9 706.0 772.3 705.5 C773.7 705.0 774.8 703.5 776.2 702.9 C777.6 702.2 779.9 701.7 780.6 701.5  M765.4 686.3 C766.5 687.3 769.6 690.8 772.0 692.7 C774.4 694.6 777.3 695.8 779.7 697.7 C782.1 699.6 783.7 702.5 786.2 704.1 C788.8 705.8 793.4 706.9 794.8 707.4  M783.3 683.6 Q788.3 689.0 789.2 690.3 M766.8 683.0 C767.7 683.0 770.6 683.0 772.5 683.4 C774.3 683.8 776.1 685.3 777.9 685.3 C779.7 685.3 781.5 684.0 783.3 683.6 C785.2 683.2 788.0 683.0 789.0 682.9  M801.9 694.6 Q798.1 698.5 796.0 698.6 M773.9 665.5 C775.8 665.9 781.6 666.6 785.1 668.0 C788.6 669.4 792.2 671.3 795.0 673.8 C797.7 676.4 800.5 679.7 801.7 683.1 C802.8 686.6 801.9 692.7 801.9 694.6  M780.3 653.5 C782.1 654.2 787.9 655.9 791.1 658.1 C794.2 660.2 796.7 663.5 799.2 666.5 C801.7 669.5 804.7 672.6 805.9 676.1 C807.2 679.7 806.6 685.9 806.8 687.8  M783.1 672.8 Q789.1 671.8 791.6 674.5 M781.9 651.2 C782.2 653.0 783.2 658.3 783.4 661.9 C783.6 665.5 784.2 669.5 783.1 672.8 C782.1 676.1 778.3 680.4 777.3 681.9  M792.5 636.5 C792.9 637.3 793.8 639.7 794.6 641.2 C795.4 642.7 796.7 644.0 797.3 645.6 C798.0 647.2 797.8 649.1 798.4 650.7 C799.0 652.3 800.4 654.5 800.9 655.2  M794.9 633.1 C795.7 635.5 798.3 642.7 799.6 647.5 C801.0 652.3 801.6 657.4 803.1 662.2 C804.7 667.0 807.9 673.9 808.8 676.2  M802.8 624.3 C803.9 625.3 807.2 628.5 809.7 630.2 C812.2 631.9 815.5 632.5 817.7 634.4 C819.9 636.3 821.2 639.4 823.0 641.8 C824.8 644.2 827.0 646.4 828.5 649.0 C830.0 651.6 831.4 656.0 832.0 657.4  M817.4 619.4 C817.3 621.3 816.3 627.0 816.7 630.7 C817.1 634.4 820.0 638.1 819.8 641.6 C819.6 645.2 816.2 650.3 815.4 652.1  M831.1 644.0 Q834.4 647.8 839.5 647.1 M834.7 653.2 Q842.6 654.7 844.6 653.4 M832.4 614.3 C832.5 615.9 833.0 620.9 832.9 624.2 C832.8 627.5 832.3 630.8 832.0 634.1 C831.7 637.4 830.6 640.8 831.1 644.0 C831.5 647.2 834.1 651.7 834.7 653.2  M839.7 611.8 C840.5 612.8 842.9 615.9 844.7 617.8 C846.6 619.6 849.0 620.9 850.7 622.7 C852.5 624.6 854.6 627.9 855.4 629.0 " stroke="#1e1e1e" stroke-width="3.8" fill="none" stroke-linecap="round" stroke-linejoin="round"/>
<path d="M829.5 755.2 C830.6 755.4 834.0 756.2 836.3 756.4 C838.6 756.5 841.0 756.0 843.2 756.3 C845.5 756.7 848.7 758.1 849.8 758.4  M833.0 753.5 C834.2 753.6 837.6 754.2 839.9 754.3 C842.2 754.5 844.6 754.0 846.8 754.4 C849.1 754.8 852.3 756.3 853.4 756.7  M846.3 746.8 C846.6 747.3 847.7 748.7 848.2 749.7 C848.6 750.7 849.0 751.9 849.0 753.0 C849.0 754.1 848.3 755.2 848.2 756.3 C848.1 757.4 848.4 758.6 848.4 759.7 C848.4 760.9 848.2 762.6 848.2 763.1  M856.8 764.3 Q862.0 768.0 866.9 769.8 M862.1 750.2 C861.8 750.7 860.4 752.2 859.9 753.4 C859.4 754.6 859.7 756.1 859.2 757.2 C858.8 758.4 857.4 759.3 857.0 760.4 C856.6 761.6 856.5 763.1 856.8 764.3 C857.0 765.6 858.3 767.2 858.6 767.8  M876.7 760.3 Q875.7 767.0 876.8 771.1 M881.5 758.5 C880.7 758.8 878.3 760.2 876.7 760.3 C875.0 760.4 873.1 760.0 871.7 759.1 C870.3 758.3 868.8 755.9 868.3 755.2  M877.9 789.9 Q875.7 787.7 871.0 787.0 M887.4 779.1 C886.7 779.5 884.1 780.3 883.0 781.5 C882.0 782.7 882.0 784.8 881.2 786.2 C880.3 787.6 878.4 789.3 877.9 789.9  M878.5 782.0 Q874.6 784.9 873.8 789.5 M873.5 783.4 Q869.3 780.0 868.8 777.0 M888.2 785.5 C887.4 785.1 885.2 783.6 883.6 783.1 C882.0 782.5 880.2 782.0 878.5 782.0 C876.8 782.1 874.3 783.1 873.5 783.4  M880.3 804.2 C879.9 803.6 878.6 801.8 877.7 800.7 C876.8 799.6 875.5 798.7 874.9 797.5 C874.2 796.3 874.6 794.5 873.9 793.3 C873.2 792.1 871.9 791.0 870.6 790.5 C869.4 790.0 867.0 790.3 866.3 790.3  M866.3 807.2 Q864.4 802.0 863.3 798.8 M870.3 804.1 Q878.2 804.8 881.8 805.9 M875.2 802.8 Q878.7 807.8 881.5 812.6 M863.4 811.4 C863.9 810.7 865.1 808.4 866.3 807.2 C867.4 806.0 868.8 804.8 870.3 804.1 C871.7 803.4 874.3 803.1 875.2 802.8  M860.8 805.2 Q860.4 801.0 858.3 797.1 M852.8 814.1 C853.3 813.1 854.2 810.0 855.6 808.5 C856.9 807.0 859.0 806.2 860.8 805.2 C862.7 804.2 865.6 803.1 866.5 802.7  M840.2 805.8 Q845.8 802.7 849.3 799.4 M841.2 809.1 C841.0 808.5 840.6 806.9 840.2 805.8 C839.8 804.8 838.8 803.8 838.7 802.7 C838.6 801.7 839.3 800.6 839.5 799.4 C839.6 798.3 839.6 796.6 839.6 796.0  M820.0 797.9 C821.0 797.4 823.9 795.7 825.9 795.4 C828.0 795.1 830.5 795.1 832.3 796.0 C834.1 796.8 836.1 799.7 836.9 800.4  M820.0 793.7 C820.5 793.5 822.1 792.8 823.2 792.7 C824.2 792.6 825.4 792.9 826.5 793.0 C827.6 793.1 828.7 793.3 829.8 793.3 C830.9 793.3 832.6 793.0 833.1 792.9  M829.4 774.8 Q833.2 770.4 833.2 768.8 M833.5 778.8 Q837.9 775.3 841.9 775.4 M820.0 768.6 C820.7 769.3 822.4 771.7 824.0 772.7 C825.5 773.8 827.8 773.8 829.4 774.8 C830.9 775.8 832.8 778.1 833.5 778.8 " stroke="#4a4a4a" stroke-width="6.0" fill="none" stroke-linecap="round" opacity=".6" filter="url(#sblur2)"/><path d="M829.5 755.2 C830.6 755.4 834.0 756.2 836.3 756.4 C838.6 756.5 841.0 756.0 843.2 756.3 C845.5 756.7 848.7 758.1 849.8 758.4  M833.0 753.5 C834.2 753.6 837.6 754.2 839.9 754.3 C842.2 754.5 844.6 754.0 846.8 754.4 C849.1 754.8 852.3 756.3 853.4 756.7  M846.3 746.8 C846.6 747.3 847.7 748.7 848.2 749.7 C848.6 750.7 849.0 751.9 849.0 753.0 C849.0 754.1 848.3 755.2 848.2 756.3 C848.1 757.4 848.4 758.6 848.4 759.7 C848.4 760.9 848.2 762.6 848.2 763.1  M856.8 764.3 Q862.0 768.0 866.9 769.8 M862.1 750.2 C861.8 750.7 860.4 752.2 859.9 753.4 C859.4 754.6 859.7 756.1 859.2 757.2 C858.8 758.4 857.4 759.3 857.0 760.4 C856.6 761.6 856.5 763.1 856.8 764.3 C857.0 765.6 858.3 767.2 858.6 767.8  M876.7 760.3 Q875.7 767.0 876.8 771.1 M881.5 758.5 C880.7 758.8 878.3 760.2 876.7 760.3 C875.0 760.4 873.1 760.0 871.7 759.1 C870.3 758.3 868.8 755.9 868.3 755.2  M877.9 789.9 Q875.7 787.7 871.0 787.0 M887.4 779.1 C886.7 779.5 884.1 780.3 883.0 781.5 C882.0 782.7 882.0 784.8 881.2 786.2 C880.3 787.6 878.4 789.3 877.9 789.9  M878.5 782.0 Q874.6 784.9 873.8 789.5 M873.5 783.4 Q869.3 780.0 868.8 777.0 M888.2 785.5 C887.4 785.1 885.2 783.6 883.6 783.1 C882.0 782.5 880.2 782.0 878.5 782.0 C876.8 782.1 874.3 783.1 873.5 783.4  M880.3 804.2 C879.9 803.6 878.6 801.8 877.7 800.7 C876.8 799.6 875.5 798.7 874.9 797.5 C874.2 796.3 874.6 794.5 873.9 793.3 C873.2 792.1 871.9 791.0 870.6 790.5 C869.4 790.0 867.0 790.3 866.3 790.3  M866.3 807.2 Q864.4 802.0 863.3 798.8 M870.3 804.1 Q878.2 804.8 881.8 805.9 M875.2 802.8 Q878.7 807.8 881.5 812.6 M863.4 811.4 C863.9 810.7 865.1 808.4 866.3 807.2 C867.4 806.0 868.8 804.8 870.3 804.1 C871.7 803.4 874.3 803.1 875.2 802.8  M860.8 805.2 Q860.4 801.0 858.3 797.1 M852.8 814.1 C853.3 813.1 854.2 810.0 855.6 808.5 C856.9 807.0 859.0 806.2 860.8 805.2 C862.7 804.2 865.6 803.1 866.5 802.7  M840.2 805.8 Q845.8 802.7 849.3 799.4 M841.2 809.1 C841.0 808.5 840.6 806.9 840.2 805.8 C839.8 804.8 838.8 803.8 838.7 802.7 C838.6 801.7 839.3 800.6 839.5 799.4 C839.6 798.3 839.6 796.6 839.6 796.0  M820.0 797.9 C821.0 797.4 823.9 795.7 825.9 795.4 C828.0 795.1 830.5 795.1 832.3 796.0 C834.1 796.8 836.1 799.7 836.9 800.4  M820.0 793.7 C820.5 793.5 822.1 792.8 823.2 792.7 C824.2 792.6 825.4 792.9 826.5 793.0 C827.6 793.1 828.7 793.3 829.8 793.3 C830.9 793.3 832.6 793.0 833.1 792.9  M829.4 774.8 Q833.2 770.4 833.2 768.8 M833.5 778.8 Q837.9 775.3 841.9 775.4 M820.0 768.6 C820.7 769.3 822.4 771.7 824.0 772.7 C825.5 773.8 827.8 773.8 829.4 774.8 C830.9 775.8 832.8 778.1 833.5 778.8 " stroke="#333" stroke-width="2.6" fill="none" stroke-linecap="round" stroke-linejoin="round"/>
<path d="M847 610 C852 650 846 700 853 740 C857 780 852 810 857 840" stroke="#202020" stroke-width="3" fill="none"/>
</g>
<g clip-path="url(#axc)"><rect x="720" y="575" width="265" height="300" fill="#000" filter="url(#stex)" opacity=".25"/></g>
<clipPath id="sgc"><path d="M1157.5 695.7 C1154.7 684.4 1162.5 668.5 1167.6 655.0 C1172.7 641.5 1180.1 627.0 1188.0 614.6 C1195.9 602.2 1202.7 590.4 1215.0 580.8 C1227.3 571.2 1244.5 563.2 1262.0 557.0 C1279.5 550.8 1301.7 546.5 1319.7 543.7 C1337.7 540.9 1356.0 538.3 1370.0 540.0 C1384.0 541.7 1393.8 547.0 1404.0 553.8 C1414.2 560.6 1423.1 569.6 1431.0 580.8 C1438.9 592.0 1446.2 607.0 1451.5 621.0 C1456.8 635.0 1460.5 650.3 1463.0 665.0 C1465.5 679.7 1466.9 693.7 1466.7 709.0 C1466.5 724.3 1463.5 741.9 1461.6 756.6 C1459.6 771.3 1456.7 782.9 1455.0 797.0 C1453.3 811.1 1452.7 825.5 1451.5 841.0 C1450.3 856.5 1488.0 881.8 1448.0 890.0 C1408.0 898.2 1254.8 898.2 1211.5 890.0 C1168.2 881.8 1194.8 854.8 1188.0 841.0 C1181.2 827.2 1173.3 821.1 1171.0 807.0 C1168.7 792.9 1171.8 770.6 1174.0 756.6 C1176.2 742.6 1187.2 732.9 1184.5 722.8 C1181.8 712.6 1160.3 707.0 1157.5 695.7 Z"/></clipPath>
<path d="M1157.5 695.7 C1154.7 684.4 1162.5 668.5 1167.6 655.0 C1172.7 641.5 1180.1 627.0 1188.0 614.6 C1195.9 602.2 1202.7 590.4 1215.0 580.8 C1227.3 571.2 1244.5 563.2 1262.0 557.0 C1279.5 550.8 1301.7 546.5 1319.7 543.7 C1337.7 540.9 1356.0 538.3 1370.0 540.0 C1384.0 541.7 1393.8 547.0 1404.0 553.8 C1414.2 560.6 1423.1 569.6 1431.0 580.8 C1438.9 592.0 1446.2 607.0 1451.5 621.0 C1456.8 635.0 1460.5 650.3 1463.0 665.0 C1465.5 679.7 1466.9 693.7 1466.7 709.0 C1466.5 724.3 1463.5 741.9 1461.6 756.6 C1459.6 771.3 1456.7 782.9 1455.0 797.0 C1453.3 811.1 1452.7 825.5 1451.5 841.0 C1450.3 856.5 1488.0 881.8 1448.0 890.0 C1408.0 898.2 1254.8 898.2 1211.5 890.0 C1168.2 881.8 1194.8 854.8 1188.0 841.0 C1181.2 827.2 1173.3 821.1 1171.0 807.0 C1168.7 792.9 1171.8 770.6 1174.0 756.6 C1176.2 742.6 1187.2 732.9 1184.5 722.8 C1181.8 712.6 1160.3 707.0 1157.5 695.7 Z" fill="#e2e2e2"/>
<path d="M1164.3 696.7 C1161.6 685.9 1169.1 670.7 1174.0 657.7 C1178.9 644.8 1186.0 630.9 1193.5 619.0 C1201.1 607.2 1207.6 595.8 1219.4 586.6 C1231.2 577.4 1247.7 569.8 1264.4 563.8 C1281.2 557.9 1302.5 553.8 1319.7 551.1 C1337.0 548.4 1354.4 545.9 1367.9 547.6 C1381.4 549.2 1390.7 554.3 1400.5 560.8 C1410.2 567.3 1418.8 575.9 1426.3 586.6 C1433.9 597.4 1440.9 611.7 1446.0 625.2 C1451.1 638.6 1454.6 653.3 1457.0 667.3 C1459.4 681.4 1460.8 694.8 1460.5 709.5 C1460.3 724.1 1457.5 741.0 1455.7 755.1 C1453.8 769.1 1450.9 780.3 1449.3 793.8 C1447.7 807.2 1447.1 821.1 1446.0 835.9 C1444.9 850.8 1480.9 875.0 1442.6 882.9 C1404.3 890.7 1257.6 890.7 1216.1 882.9 C1174.5 875.0 1200.0 849.2 1193.5 835.9 C1187.1 822.7 1179.5 816.8 1177.3 803.3 C1175.0 789.9 1178.0 768.5 1180.1 755.1 C1182.3 741.6 1192.8 732.4 1190.2 722.7 C1187.6 713.0 1167.0 707.5 1164.3 696.7 Z" fill="#3a3a3a"/>
<path d="M1166.3 697.0 C1163.6 686.3 1171.0 671.3 1175.8 658.5 C1180.6 645.7 1187.7 632.0 1195.1 620.3 C1202.6 608.6 1209.0 597.4 1220.7 588.3 C1232.3 579.2 1248.6 571.7 1265.1 565.8 C1281.6 560.0 1302.7 555.9 1319.7 553.2 C1336.7 550.5 1354.0 548.1 1367.3 549.7 C1380.6 551.3 1389.8 556.3 1399.5 562.8 C1409.1 569.2 1417.5 577.7 1425.0 588.3 C1432.5 598.9 1439.4 613.1 1444.4 626.3 C1449.4 639.6 1452.9 654.1 1455.3 668.0 C1457.7 681.8 1459.0 695.2 1458.8 709.6 C1458.6 724.0 1455.8 740.7 1454.0 754.6 C1452.1 768.5 1449.3 779.5 1447.7 792.8 C1446.1 806.1 1445.5 819.8 1444.4 834.5 C1443.3 849.1 1478.9 873.1 1441.1 880.8 C1403.2 888.5 1258.4 888.5 1217.4 880.8 C1176.4 873.1 1201.5 847.6 1195.1 834.5 C1188.7 821.4 1181.3 815.6 1179.0 802.3 C1176.8 789.0 1179.8 767.9 1181.9 754.6 C1184.0 741.3 1194.4 732.3 1191.8 722.6 C1189.2 713.0 1168.9 707.7 1166.3 697.0 Z" fill="#cfcfcf"/>
<path d="M1169.7 697.5 C1167.1 687.1 1174.3 672.4 1179.0 659.9 C1183.7 647.4 1190.6 633.9 1197.9 622.5 C1205.2 611.1 1211.5 600.1 1222.9 591.2 C1234.3 582.4 1250.2 574.9 1266.3 569.2 C1282.5 563.5 1303.1 559.5 1319.7 556.9 C1336.4 554.3 1353.3 551.9 1366.2 553.5 C1379.2 555.1 1388.3 560.0 1397.7 566.3 C1407.1 572.6 1415.4 580.9 1422.7 591.2 C1430.0 601.6 1436.7 615.4 1441.6 628.4 C1446.6 641.4 1449.9 655.6 1452.3 669.1 C1454.6 682.7 1455.9 695.7 1455.7 709.8 C1455.5 723.9 1452.8 740.3 1451.0 753.9 C1449.2 767.4 1446.4 778.2 1444.9 791.2 C1443.3 804.2 1442.7 817.6 1441.6 831.9 C1440.6 846.3 1475.4 869.7 1438.4 877.2 C1401.4 884.8 1259.7 884.8 1219.6 877.2 C1179.6 869.7 1204.1 844.7 1197.9 831.9 C1191.7 819.1 1184.3 813.5 1182.2 800.5 C1180.0 787.5 1182.9 766.8 1185.0 753.9 C1187.0 740.9 1197.2 732.0 1194.7 722.6 C1192.1 713.2 1172.3 708.0 1169.7 697.5 Z" fill="#484848"/>
<g clip-path="url(#sgc)">
<path d="M1250 740 C1300 735 1380 760 1450 740 L1460 890 L1250 890Z" fill="#3a3a3a" filter="url(#sblur3)"/>
<path d="M1432 720 C1447 780 1450 840 1446 890" stroke="#e4e4e4" stroke-width="16" fill="none" filter="url(#sblur2)"/>
<path d="M1405 740 C1420 790 1425 840 1422 890" stroke="#303030" stroke-width="5" fill="none" filter="url(#sblur)"/>
<path d="M1140 730 C1200 725 1240 735 1262 750 C1265 800 1260 850 1255 890 L1140 890Z" fill="#050505" filter="url(#sblur3)"/>
<ellipse cx="1235" cy="855" rx="35" ry="30" fill="#3a3a3a" opacity=".7" filter="url(#sblur6)"/>
<path d="M1178 738 C1172 760 1170 790 1178 815 C1185 835 1195 850 1205 870" stroke="#d8d8d8" stroke-width="4" fill="none" filter="url(#sblur)"/>
<path d="M1195 800 C1215 790 1240 800 1250 820" stroke="#bbb" stroke-width="3" fill="none" filter="url(#sblur)"/>
</g>
<path d="M1185.2 662.3 C1187.5 652.2 1196.0 632.4 1206.6 619.5 C1217.2 606.5 1233.0 593.3 1248.9 584.6 C1264.8 575.8 1282.6 570.4 1302.0 566.9 C1321.5 563.4 1347.9 561.0 1365.6 563.4 C1383.2 565.7 1395.4 570.8 1407.8 580.8 C1420.1 590.8 1432.7 608.1 1439.8 623.4 C1446.8 638.8 1450.3 656.9 1450.3 672.8 C1450.3 688.6 1444.5 705.2 1439.8 718.7 C1435.1 732.3 1430.4 747.0 1422.1 754.1 C1413.8 761.1 1401.2 762.9 1390.0 761.2 C1378.8 759.4 1363.8 750.6 1355.0 743.5 C1346.2 736.4 1346.2 724.1 1337.3 718.7 C1328.5 713.4 1315.0 713.8 1302.0 711.4 C1289.0 709.1 1272.3 708.1 1259.4 704.6 C1246.4 701.2 1235.4 694.6 1224.3 690.5 C1213.1 686.4 1199.0 684.8 1192.5 680.1 C1186.0 675.4 1182.8 672.4 1185.2 662.3 Z" fill="#141414"/>
<path d="M1191.0 662.0 C1193.2 652.3 1201.3 633.4 1211.5 621.0 C1221.7 608.6 1236.8 596.0 1252.0 587.6 C1267.2 579.2 1284.2 574.1 1302.8 570.7 C1321.4 567.3 1346.7 565.1 1363.6 567.3 C1380.5 569.5 1392.2 574.4 1404.0 584.0 C1415.8 593.6 1427.8 610.1 1434.6 624.8 C1441.4 639.5 1444.7 656.8 1444.7 672.0 C1444.7 687.2 1439.1 703.0 1434.6 716.0 C1430.1 729.0 1425.6 743.0 1417.7 749.8 C1409.8 756.6 1397.7 758.3 1387.0 756.6 C1376.3 754.9 1361.9 746.5 1353.5 739.7 C1345.1 732.9 1345.0 721.1 1336.6 716.0 C1328.1 710.9 1315.2 711.2 1302.8 709.0 C1290.4 706.8 1274.4 705.8 1262.0 702.5 C1249.6 699.2 1239.1 692.9 1228.4 689.0 C1217.7 685.1 1204.2 683.5 1198.0 679.0 C1191.8 674.5 1188.8 671.7 1191.0 662.0 Z" fill="#6e6e6e"/>
<ellipse cx="1320" cy="660" rx="80" ry="42" fill="#878787" filter="url(#sblur10)"/>
<clipPath id="sgb"><path d="M1191.0 662.0 C1193.2 652.3 1201.3 633.4 1211.5 621.0 C1221.7 608.6 1236.8 596.0 1252.0 587.6 C1267.2 579.2 1284.2 574.1 1302.8 570.7 C1321.4 567.3 1346.7 565.1 1363.6 567.3 C1380.5 569.5 1392.2 574.4 1404.0 584.0 C1415.8 593.6 1427.8 610.1 1434.6 624.8 C1441.4 639.5 1444.7 656.8 1444.7 672.0 C1444.7 687.2 1439.1 703.0 1434.6 716.0 C1430.1 729.0 1425.6 743.0 1417.7 749.8 C1409.8 756.6 1397.7 758.3 1387.0 756.6 C1376.3 754.9 1361.9 746.5 1353.5 739.7 C1345.1 732.9 1345.0 721.1 1336.6 716.0 C1328.1 710.9 1315.2 711.2 1302.8 709.0 C1290.4 706.8 1274.4 705.8 1262.0 702.5 C1249.6 699.2 1239.1 692.9 1228.4 689.0 C1217.7 685.1 1204.2 683.5 1198.0 679.0 C1191.8 674.5 1188.8 671.7 1191.0 662.0 Z"/></clipPath><g clip-path="url(#sgb)">
<path d="M1194.5 645.2 Q1189.2 647.6 1186.4 645.9 M1190.2 643.0 Q1189.3 639.6 1189.5 636.6 M1191.1 661.9 C1191.5 661.2 1192.7 659.2 1193.6 657.9 C1194.5 656.6 1195.8 655.4 1196.4 654.0 C1196.9 652.5 1197.2 650.7 1196.9 649.2 C1196.6 647.8 1195.6 646.2 1194.5 645.2 C1193.3 644.1 1190.9 643.4 1190.2 643.0  M1212.6 659.8 Q1211.4 663.9 1208.6 665.0 M1197.4 649.2 C1198.2 649.4 1200.7 649.8 1202.1 650.6 C1203.4 651.4 1204.2 653.1 1205.6 654.0 C1206.9 654.8 1209.0 654.7 1210.1 655.7 C1211.3 656.6 1211.5 658.7 1212.6 659.8 C1213.7 661.0 1215.9 662.2 1216.6 662.6  M1202.6 638.7 C1203.6 638.6 1206.4 638.0 1208.3 638.0 C1210.1 638.0 1212.1 638.7 1213.9 638.5 C1215.8 638.3 1217.8 637.7 1219.3 636.7 C1220.8 635.7 1222.3 633.0 1222.9 632.3  M1210.9 622.2 C1212.0 622.3 1215.7 623.2 1217.8 622.6 C1219.9 622.0 1221.7 620.1 1223.5 618.6 C1225.3 617.2 1226.6 615.2 1228.4 613.8 C1230.3 612.3 1232.6 611.6 1234.4 610.2 C1236.2 608.7 1238.3 605.9 1239.1 605.1  M1230.7 613.9 Q1234.5 607.4 1233.9 605.0 M1238.7 608.3 Q1245.0 611.8 1249.3 613.5 M1220.7 613.4 C1221.6 613.4 1224.1 613.3 1225.8 613.4 C1227.4 613.5 1229.1 614.1 1230.7 613.9 C1232.4 613.7 1234.1 613.0 1235.4 612.1 C1236.7 611.1 1238.1 608.9 1238.7 608.3  M1240.3 627.7 Q1238.5 629.3 1234.0 632.8 M1231.0 604.9 C1231.8 605.6 1234.4 607.6 1235.6 609.3 C1236.8 611.0 1237.8 613.1 1238.3 615.2 C1238.8 617.2 1238.3 619.4 1238.6 621.5 C1238.9 623.6 1239.8 625.6 1240.3 627.7 C1240.7 629.8 1241.2 632.9 1241.4 634.0  M1242.2 595.7 C1242.6 596.9 1244.1 600.6 1244.9 603.2 C1245.7 605.7 1246.6 608.2 1246.9 610.8 C1247.3 613.4 1246.3 616.2 1246.7 618.8 C1247.1 621.3 1249.0 625.0 1249.4 626.2  M1250.2 589.1 C1251.5 589.2 1255.7 589.1 1258.2 589.9 C1260.8 590.6 1263.6 591.8 1265.4 593.6 C1267.2 595.5 1267.9 598.4 1269.0 600.9 C1270.1 603.3 1271.3 607.2 1271.8 608.5  M1265.5 583.1 C1266.8 583.5 1270.7 585.1 1273.4 585.2 C1276.0 585.4 1278.8 584.7 1281.4 584.0 C1284.0 583.2 1287.6 581.2 1288.9 580.6  M1279.4 578.5 C1281.3 578.9 1287.4 579.4 1290.7 581.3 C1293.9 583.1 1295.6 587.5 1298.8 589.6 C1301.9 591.7 1307.7 593.2 1309.5 593.9  M1290.0 599.2 Q1292.9 602.4 1294.0 604.7 M1286.8 576.0 C1287.0 577.4 1287.5 581.4 1288.3 584.0 C1289.1 586.5 1291.4 588.8 1291.7 591.3 C1292.0 593.8 1290.6 596.6 1290.0 599.2 C1289.5 601.9 1288.7 605.8 1288.4 607.1  M1299.1 571.9 C1299.7 572.3 1301.7 573.2 1302.6 574.2 C1303.5 575.2 1303.8 576.8 1304.7 577.8 C1305.5 578.9 1306.6 579.9 1307.7 580.7 C1308.9 581.4 1310.9 582.1 1311.5 582.4  M1313.9 570.1 C1314.9 571.6 1318.4 576.2 1320.2 579.5 C1321.9 582.7 1324.0 586.2 1324.6 589.8 C1325.2 593.4 1323.8 599.2 1323.7 601.1  M1335.6 568.9 C1335.0 570.2 1333.3 574.1 1332.1 576.7 C1331.0 579.3 1329.4 581.7 1328.5 584.4 C1327.7 587.1 1327.9 590.1 1327.1 592.8 C1326.2 595.5 1324.2 599.3 1323.6 600.6  M1345.3 568.3 C1343.9 569.5 1340.2 573.8 1337.1 575.4 C1334.0 577.0 1330.0 578.1 1326.6 577.9 C1323.1 577.7 1318.1 574.8 1316.4 574.2  M1357.9 576.1 Q1350.3 579.8 1347.1 579.9 M1357.9 580.6 Q1353.1 581.8 1350.1 582.8 M1359.7 567.5 C1359.4 568.2 1358.0 570.1 1357.7 571.6 C1357.4 573.0 1357.9 574.6 1357.9 576.1 C1358.0 577.6 1358.1 579.1 1357.9 580.6 C1357.6 582.1 1357.3 583.6 1356.6 584.9 C1355.9 586.2 1354.1 587.7 1353.6 588.3  M1373.5 571.4 C1373.7 572.1 1374.8 574.2 1374.9 575.6 C1374.9 577.0 1374.0 578.5 1373.7 579.9 C1373.5 581.4 1373.8 583.0 1373.3 584.3 C1372.7 585.6 1370.8 587.1 1370.3 587.7  M1388.2 577.5 C1387.4 578.5 1385.3 582.1 1383.3 583.3 C1381.2 584.6 1378.2 585.2 1375.8 584.9 C1373.4 584.7 1371.2 582.5 1368.8 581.8 C1366.4 581.1 1362.5 580.7 1361.3 580.5  M1393.9 579.8 C1393.8 580.4 1393.2 582.1 1393.3 583.2 C1393.3 584.3 1393.8 585.4 1394.1 586.5 C1394.4 587.6 1394.6 588.7 1395.1 589.8 C1395.5 590.8 1396.4 591.7 1396.8 592.8 C1397.1 593.8 1397.1 595.6 1397.2 596.2  M1406.5 587.3 C1405.6 588.3 1402.5 591.1 1401.1 593.4 C1399.7 595.7 1398.4 598.3 1398.0 600.9 C1397.6 603.5 1398.5 607.7 1398.6 609.1  M1406.6 596.1 Q1407.3 602.8 1405.3 607.4 M1411.3 593.8 C1410.5 594.2 1407.9 595.0 1406.6 596.1 C1405.2 597.3 1404.1 598.9 1403.5 600.5 C1402.9 602.1 1402.8 604.0 1402.8 605.8 C1402.8 607.5 1403.3 610.2 1403.4 611.1  M1420.6 606.1 C1419.9 606.5 1418.1 608.0 1416.7 608.4 C1415.3 608.7 1413.7 608.5 1412.2 608.5 C1410.7 608.4 1409.1 608.6 1407.7 608.2 C1406.3 607.9 1404.9 607.1 1403.6 606.4 C1402.2 605.7 1400.3 604.6 1399.6 604.3  M1425.0 623.0 Q1424.5 630.2 1424.2 634.8 M1430.4 619.2 C1429.5 619.9 1427.0 622.2 1425.0 623.0 C1423.0 623.9 1420.4 623.3 1418.5 624.2 C1416.5 625.1 1414.7 626.6 1413.3 628.3 C1412.0 630.0 1410.8 632.2 1410.4 634.3 C1410.0 636.4 1410.8 639.8 1410.8 640.9  M1435.3 628.3 C1434.1 629.0 1430.6 631.5 1428.1 632.7 C1425.5 633.9 1422.3 633.9 1420.0 635.4 C1417.7 636.8 1415.6 639.2 1414.3 641.6 C1412.9 644.0 1412.4 648.4 1412.0 649.8  M1431.7 641.5 Q1430.1 636.5 1432.3 636.1 M1438.8 644.4 C1437.6 643.9 1433.5 643.1 1431.7 641.5 C1429.9 639.9 1429.6 636.8 1428.0 634.9 C1426.4 632.9 1423.1 630.8 1422.1 630.0  M1432.8 649.7 Q1432.5 644.9 1431.2 642.8 M1408.9 639.0 Q1403.3 643.4 1398.8 643.4 M1440.7 653.5 C1439.4 652.9 1435.4 651.0 1432.8 649.7 C1430.2 648.3 1427.8 646.4 1425.1 645.4 C1422.4 644.4 1419.2 644.6 1416.5 643.5 C1413.8 642.5 1410.2 639.8 1408.9 639.0  M1422.8 686.3 Q1417.5 683.1 1415.0 683.2 M1443.3 665.3 C1442.4 665.7 1439.1 666.6 1437.8 667.9 C1436.5 669.3 1436.5 672.0 1435.2 673.4 C1434.0 674.9 1431.4 675.2 1430.0 676.6 C1428.7 678.0 1428.1 680.2 1426.9 681.8 C1425.7 683.4 1423.5 685.5 1422.8 686.3  M1443.3 678.2 C1442.6 678.3 1440.5 678.3 1439.2 678.7 C1437.9 679.1 1436.6 679.8 1435.5 680.5 C1434.3 681.2 1433.1 682.0 1432.2 683.1 C1431.3 684.1 1431.0 685.5 1430.3 686.7 C1429.6 687.9 1428.5 689.7 1428.2 690.3  M1441.6 685.5 C1441.0 684.8 1439.7 682.3 1438.3 681.4 C1436.9 680.4 1434.9 680.4 1433.2 679.7 C1431.6 679.1 1429.8 678.5 1428.4 677.5 C1427.0 676.4 1426.0 674.9 1424.8 673.5 C1423.7 672.2 1422.0 670.1 1421.5 669.4  M1438.9 697.1 C1438.0 696.3 1434.6 694.1 1433.5 692.0 C1432.4 690.0 1432.8 687.1 1432.3 684.7 C1431.9 682.3 1431.1 679.9 1430.7 677.4 C1430.3 675.0 1430.2 671.3 1430.1 670.0  M1426.9 702.6 Q1430.0 698.3 1431.7 695.8 M1434.9 714.6 C1434.7 714.1 1434.1 712.3 1433.5 711.2 C1432.9 710.1 1432.2 709.0 1431.4 708.2 C1430.5 707.3 1429.2 706.9 1428.4 705.9 C1427.7 705.0 1427.0 703.7 1426.9 702.6 C1426.8 701.4 1427.5 699.5 1427.7 698.9  M1430.7 723.7 C1428.8 723.4 1423.1 721.5 1419.4 721.7 C1415.6 721.9 1411.7 723.4 1408.3 725.1 C1404.9 726.8 1400.5 730.7 1398.9 731.8  M1428.2 728.8 C1427.4 728.3 1425.1 726.5 1423.5 725.4 C1421.9 724.3 1420.1 723.6 1418.6 722.4 C1417.1 721.1 1415.4 718.8 1414.8 718.0  M1417.1 735.9 Q1413.3 738.5 1411.6 738.0 M1409.9 730.2 Q1404.9 732.7 1399.0 731.0 M1423.0 739.3 C1422.5 739.0 1421.1 738.0 1420.1 737.5 C1419.1 736.9 1418.2 736.3 1417.1 735.9 C1416.1 735.5 1414.8 735.7 1413.8 735.3 C1412.8 734.9 1411.6 734.3 1410.9 733.5 C1410.3 732.6 1410.1 730.8 1409.9 730.2  M1402.1 736.9 Q1401.9 730.3 1403.4 727.8 M1418.2 748.9 C1417.2 747.4 1414.9 742.1 1412.2 740.1 C1409.5 738.2 1405.5 736.9 1402.1 736.9 C1398.8 736.9 1393.8 739.7 1392.1 740.2  M1410.0 751.5 C1409.4 750.6 1407.6 747.7 1406.2 746.0 C1404.7 744.3 1403.0 742.9 1401.4 741.3 C1399.8 739.8 1398.4 738.0 1396.5 736.8 C1394.7 735.5 1392.1 735.2 1390.6 733.8 C1389.0 732.3 1387.8 728.9 1387.2 728.0  M1405.1 752.6 C1405.0 751.5 1405.0 748.3 1404.5 746.3 C1403.9 744.3 1402.3 742.6 1401.7 740.6 C1401.2 738.6 1401.2 735.3 1401.1 734.3  M1395.4 754.7 C1394.6 754.5 1392.2 753.9 1390.7 753.2 C1389.2 752.5 1388.0 751.2 1386.5 750.6 C1385.0 749.9 1383.2 750.0 1381.7 749.3 C1380.2 748.7 1378.2 747.1 1377.5 746.7  M1387.6 756.5 C1386.8 755.6 1384.0 753.3 1382.5 751.5 C1380.9 749.7 1379.1 747.8 1378.4 745.6 C1377.8 743.5 1378.0 740.8 1378.5 738.5 C1379.0 736.2 1380.8 733.0 1381.2 731.9  M1377.9 752.0 C1377.0 751.6 1374.1 750.7 1372.4 749.7 C1370.7 748.6 1369.1 747.2 1367.9 745.7 C1366.7 744.1 1365.5 742.2 1365.1 740.3 C1364.8 738.4 1365.6 736.3 1366.1 734.3 C1366.5 732.4 1367.4 729.5 1367.7 728.5  M1374.8 728.5 Q1382.4 728.1 1384.1 727.1 M1366.7 746.4 C1366.8 745.5 1367.3 743.0 1367.6 741.4 C1367.9 739.7 1367.8 737.9 1368.6 736.4 C1369.3 735.0 1370.9 734.0 1372.0 732.7 C1373.0 731.4 1374.4 729.2 1374.8 728.5  M1358.5 742.2 C1357.8 741.4 1355.5 739.3 1354.4 737.6 C1353.3 735.9 1352.6 733.9 1352.0 732.0 C1351.3 730.1 1351.5 727.7 1350.5 726.1 C1349.4 724.4 1346.5 722.8 1345.8 722.2  M1330.1 728.5 C1330.5 727.8 1331.9 725.7 1332.4 724.1 C1332.8 722.6 1332.4 720.6 1333.1 719.2 C1333.8 717.9 1335.7 717.2 1336.7 715.8 C1337.6 714.5 1338.2 712.9 1338.8 711.4 C1339.4 709.9 1340.1 707.5 1340.4 706.7  M1307.1 703.0 Q1313.1 703.6 1315.6 703.1 M1300.8 714.5 C1301.3 713.5 1302.6 710.5 1303.6 708.6 C1304.7 706.6 1306.1 704.9 1307.1 703.0 C1308.0 701.0 1309.0 697.8 1309.4 696.8  M1266.1 697.9 C1266.9 697.4 1269.3 695.8 1271.0 694.9 C1272.7 694.0 1274.4 692.8 1276.2 692.5 C1278.0 692.1 1280.2 692.2 1281.9 693.0 C1283.6 693.7 1284.6 695.7 1286.2 696.8 C1287.8 697.8 1290.6 698.7 1291.4 699.1  M1217.7 674.8 C1218.8 674.8 1222.0 674.5 1224.0 674.9 C1226.1 675.3 1227.9 676.9 1230.0 677.0 C1232.0 677.2 1234.4 676.7 1236.1 675.7 C1237.8 674.7 1239.5 671.7 1240.2 670.9 " stroke="#4a4a4a" stroke-width="9.2" fill="none" stroke-linecap="round" opacity=".6" filter="url(#sblur2)"/><path d="M1194.5 645.2 Q1189.2 647.6 1186.4 645.9 M1190.2 643.0 Q1189.3 639.6 1189.5 636.6 M1191.1 661.9 C1191.5 661.2 1192.7 659.2 1193.6 657.9 C1194.5 656.6 1195.8 655.4 1196.4 654.0 C1196.9 652.5 1197.2 650.7 1196.9 649.2 C1196.6 647.8 1195.6 646.2 1194.5 645.2 C1193.3 644.1 1190.9 643.4 1190.2 643.0  M1212.6 659.8 Q1211.4 663.9 1208.6 665.0 M1197.4 649.2 C1198.2 649.4 1200.7 649.8 1202.1 650.6 C1203.4 651.4 1204.2 653.1 1205.6 654.0 C1206.9 654.8 1209.0 654.7 1210.1 655.7 C1211.3 656.6 1211.5 658.7 1212.6 659.8 C1213.7 661.0 1215.9 662.2 1216.6 662.6  M1202.6 638.7 C1203.6 638.6 1206.4 638.0 1208.3 638.0 C1210.1 638.0 1212.1 638.7 1213.9 638.5 C1215.8 638.3 1217.8 637.7 1219.3 636.7 C1220.8 635.7 1222.3 633.0 1222.9 632.3  M1210.9 622.2 C1212.0 622.3 1215.7 623.2 1217.8 622.6 C1219.9 622.0 1221.7 620.1 1223.5 618.6 C1225.3 617.2 1226.6 615.2 1228.4 613.8 C1230.3 612.3 1232.6 611.6 1234.4 610.2 C1236.2 608.7 1238.3 605.9 1239.1 605.1  M1230.7 613.9 Q1234.5 607.4 1233.9 605.0 M1238.7 608.3 Q1245.0 611.8 1249.3 613.5 M1220.7 613.4 C1221.6 613.4 1224.1 613.3 1225.8 613.4 C1227.4 613.5 1229.1 614.1 1230.7 613.9 C1232.4 613.7 1234.1 613.0 1235.4 612.1 C1236.7 611.1 1238.1 608.9 1238.7 608.3  M1240.3 627.7 Q1238.5 629.3 1234.0 632.8 M1231.0 604.9 C1231.8 605.6 1234.4 607.6 1235.6 609.3 C1236.8 611.0 1237.8 613.1 1238.3 615.2 C1238.8 617.2 1238.3 619.4 1238.6 621.5 C1238.9 623.6 1239.8 625.6 1240.3 627.7 C1240.7 629.8 1241.2 632.9 1241.4 634.0  M1242.2 595.7 C1242.6 596.9 1244.1 600.6 1244.9 603.2 C1245.7 605.7 1246.6 608.2 1246.9 610.8 C1247.3 613.4 1246.3 616.2 1246.7 618.8 C1247.1 621.3 1249.0 625.0 1249.4 626.2  M1250.2 589.1 C1251.5 589.2 1255.7 589.1 1258.2 589.9 C1260.8 590.6 1263.6 591.8 1265.4 593.6 C1267.2 595.5 1267.9 598.4 1269.0 600.9 C1270.1 603.3 1271.3 607.2 1271.8 608.5  M1265.5 583.1 C1266.8 583.5 1270.7 585.1 1273.4 585.2 C1276.0 585.4 1278.8 584.7 1281.4 584.0 C1284.0 583.2 1287.6 581.2 1288.9 580.6  M1279.4 578.5 C1281.3 578.9 1287.4 579.4 1290.7 581.3 C1293.9 583.1 1295.6 587.5 1298.8 589.6 C1301.9 591.7 1307.7 593.2 1309.5 593.9  M1290.0 599.2 Q1292.9 602.4 1294.0 604.7 M1286.8 576.0 C1287.0 577.4 1287.5 581.4 1288.3 584.0 C1289.1 586.5 1291.4 588.8 1291.7 591.3 C1292.0 593.8 1290.6 596.6 1290.0 599.2 C1289.5 601.9 1288.7 605.8 1288.4 607.1  M1299.1 571.9 C1299.7 572.3 1301.7 573.2 1302.6 574.2 C1303.5 575.2 1303.8 576.8 1304.7 577.8 C1305.5 578.9 1306.6 579.9 1307.7 580.7 C1308.9 581.4 1310.9 582.1 1311.5 582.4  M1313.9 570.1 C1314.9 571.6 1318.4 576.2 1320.2 579.5 C1321.9 582.7 1324.0 586.2 1324.6 589.8 C1325.2 593.4 1323.8 599.2 1323.7 601.1  M1335.6 568.9 C1335.0 570.2 1333.3 574.1 1332.1 576.7 C1331.0 579.3 1329.4 581.7 1328.5 584.4 C1327.7 587.1 1327.9 590.1 1327.1 592.8 C1326.2 595.5 1324.2 599.3 1323.6 600.6  M1345.3 568.3 C1343.9 569.5 1340.2 573.8 1337.1 575.4 C1334.0 577.0 1330.0 578.1 1326.6 577.9 C1323.1 577.7 1318.1 574.8 1316.4 574.2  M1357.9 576.1 Q1350.3 579.8 1347.1 579.9 M1357.9 580.6 Q1353.1 581.8 1350.1 582.8 M1359.7 567.5 C1359.4 568.2 1358.0 570.1 1357.7 571.6 C1357.4 573.0 1357.9 574.6 1357.9 576.1 C1358.0 577.6 1358.1 579.1 1357.9 580.6 C1357.6 582.1 1357.3 583.6 1356.6 584.9 C1355.9 586.2 1354.1 587.7 1353.6 588.3  M1373.5 571.4 C1373.7 572.1 1374.8 574.2 1374.9 575.6 C1374.9 577.0 1374.0 578.5 1373.7 579.9 C1373.5 581.4 1373.8 583.0 1373.3 584.3 C1372.7 585.6 1370.8 587.1 1370.3 587.7  M1388.2 577.5 C1387.4 578.5 1385.3 582.1 1383.3 583.3 C1381.2 584.6 1378.2 585.2 1375.8 584.9 C1373.4 584.7 1371.2 582.5 1368.8 581.8 C1366.4 581.1 1362.5 580.7 1361.3 580.5  M1393.9 579.8 C1393.8 580.4 1393.2 582.1 1393.3 583.2 C1393.3 584.3 1393.8 585.4 1394.1 586.5 C1394.4 587.6 1394.6 588.7 1395.1 589.8 C1395.5 590.8 1396.4 591.7 1396.8 592.8 C1397.1 593.8 1397.1 595.6 1397.2 596.2  M1406.5 587.3 C1405.6 588.3 1402.5 591.1 1401.1 593.4 C1399.7 595.7 1398.4 598.3 1398.0 600.9 C1397.6 603.5 1398.5 607.7 1398.6 609.1  M1406.6 596.1 Q1407.3 602.8 1405.3 607.4 M1411.3 593.8 C1410.5 594.2 1407.9 595.0 1406.6 596.1 C1405.2 597.3 1404.1 598.9 1403.5 600.5 C1402.9 602.1 1402.8 604.0 1402.8 605.8 C1402.8 607.5 1403.3 610.2 1403.4 611.1  M1420.6 606.1 C1419.9 606.5 1418.1 608.0 1416.7 608.4 C1415.3 608.7 1413.7 608.5 1412.2 608.5 C1410.7 608.4 1409.1 608.6 1407.7 608.2 C1406.3 607.9 1404.9 607.1 1403.6 606.4 C1402.2 605.7 1400.3 604.6 1399.6 604.3  M1425.0 623.0 Q1424.5 630.2 1424.2 634.8 M1430.4 619.2 C1429.5 619.9 1427.0 622.2 1425.0 623.0 C1423.0 623.9 1420.4 623.3 1418.5 624.2 C1416.5 625.1 1414.7 626.6 1413.3 628.3 C1412.0 630.0 1410.8 632.2 1410.4 634.3 C1410.0 636.4 1410.8 639.8 1410.8 640.9  M1435.3 628.3 C1434.1 629.0 1430.6 631.5 1428.1 632.7 C1425.5 633.9 1422.3 633.9 1420.0 635.4 C1417.7 636.8 1415.6 639.2 1414.3 641.6 C1412.9 644.0 1412.4 648.4 1412.0 649.8  M1431.7 641.5 Q1430.1 636.5 1432.3 636.1 M1438.8 644.4 C1437.6 643.9 1433.5 643.1 1431.7 641.5 C1429.9 639.9 1429.6 636.8 1428.0 634.9 C1426.4 632.9 1423.1 630.8 1422.1 630.0  M1432.8 649.7 Q1432.5 644.9 1431.2 642.8 M1408.9 639.0 Q1403.3 643.4 1398.8 643.4 M1440.7 653.5 C1439.4 652.9 1435.4 651.0 1432.8 649.7 C1430.2 648.3 1427.8 646.4 1425.1 645.4 C1422.4 644.4 1419.2 644.6 1416.5 643.5 C1413.8 642.5 1410.2 639.8 1408.9 639.0  M1422.8 686.3 Q1417.5 683.1 1415.0 683.2 M1443.3 665.3 C1442.4 665.7 1439.1 666.6 1437.8 667.9 C1436.5 669.3 1436.5 672.0 1435.2 673.4 C1434.0 674.9 1431.4 675.2 1430.0 676.6 C1428.7 678.0 1428.1 680.2 1426.9 681.8 C1425.7 683.4 1423.5 685.5 1422.8 686.3  M1443.3 678.2 C1442.6 678.3 1440.5 678.3 1439.2 678.7 C1437.9 679.1 1436.6 679.8 1435.5 680.5 C1434.3 681.2 1433.1 682.0 1432.2 683.1 C1431.3 684.1 1431.0 685.5 1430.3 686.7 C1429.6 687.9 1428.5 689.7 1428.2 690.3  M1441.6 685.5 C1441.0 684.8 1439.7 682.3 1438.3 681.4 C1436.9 680.4 1434.9 680.4 1433.2 679.7 C1431.6 679.1 1429.8 678.5 1428.4 677.5 C1427.0 676.4 1426.0 674.9 1424.8 673.5 C1423.7 672.2 1422.0 670.1 1421.5 669.4  M1438.9 697.1 C1438.0 696.3 1434.6 694.1 1433.5 692.0 C1432.4 690.0 1432.8 687.1 1432.3 684.7 C1431.9 682.3 1431.1 679.9 1430.7 677.4 C1430.3 675.0 1430.2 671.3 1430.1 670.0  M1426.9 702.6 Q1430.0 698.3 1431.7 695.8 M1434.9 714.6 C1434.7 714.1 1434.1 712.3 1433.5 711.2 C1432.9 710.1 1432.2 709.0 1431.4 708.2 C1430.5 707.3 1429.2 706.9 1428.4 705.9 C1427.7 705.0 1427.0 703.7 1426.9 702.6 C1426.8 701.4 1427.5 699.5 1427.7 698.9  M1430.7 723.7 C1428.8 723.4 1423.1 721.5 1419.4 721.7 C1415.6 721.9 1411.7 723.4 1408.3 725.1 C1404.9 726.8 1400.5 730.7 1398.9 731.8  M1428.2 728.8 C1427.4 728.3 1425.1 726.5 1423.5 725.4 C1421.9 724.3 1420.1 723.6 1418.6 722.4 C1417.1 721.1 1415.4 718.8 1414.8 718.0  M1417.1 735.9 Q1413.3 738.5 1411.6 738.0 M1409.9 730.2 Q1404.9 732.7 1399.0 731.0 M1423.0 739.3 C1422.5 739.0 1421.1 738.0 1420.1 737.5 C1419.1 736.9 1418.2 736.3 1417.1 735.9 C1416.1 735.5 1414.8 735.7 1413.8 735.3 C1412.8 734.9 1411.6 734.3 1410.9 733.5 C1410.3 732.6 1410.1 730.8 1409.9 730.2  M1402.1 736.9 Q1401.9 730.3 1403.4 727.8 M1418.2 748.9 C1417.2 747.4 1414.9 742.1 1412.2 740.1 C1409.5 738.2 1405.5 736.9 1402.1 736.9 C1398.8 736.9 1393.8 739.7 1392.1 740.2  M1410.0 751.5 C1409.4 750.6 1407.6 747.7 1406.2 746.0 C1404.7 744.3 1403.0 742.9 1401.4 741.3 C1399.8 739.8 1398.4 738.0 1396.5 736.8 C1394.7 735.5 1392.1 735.2 1390.6 733.8 C1389.0 732.3 1387.8 728.9 1387.2 728.0  M1405.1 752.6 C1405.0 751.5 1405.0 748.3 1404.5 746.3 C1403.9 744.3 1402.3 742.6 1401.7 740.6 C1401.2 738.6 1401.2 735.3 1401.1 734.3  M1395.4 754.7 C1394.6 754.5 1392.2 753.9 1390.7 753.2 C1389.2 752.5 1388.0 751.2 1386.5 750.6 C1385.0 749.9 1383.2 750.0 1381.7 749.3 C1380.2 748.7 1378.2 747.1 1377.5 746.7  M1387.6 756.5 C1386.8 755.6 1384.0 753.3 1382.5 751.5 C1380.9 749.7 1379.1 747.8 1378.4 745.6 C1377.8 743.5 1378.0 740.8 1378.5 738.5 C1379.0 736.2 1380.8 733.0 1381.2 731.9  M1377.9 752.0 C1377.0 751.6 1374.1 750.7 1372.4 749.7 C1370.7 748.6 1369.1 747.2 1367.9 745.7 C1366.7 744.1 1365.5 742.2 1365.1 740.3 C1364.8 738.4 1365.6 736.3 1366.1 734.3 C1366.5 732.4 1367.4 729.5 1367.7 728.5  M1374.8 728.5 Q1382.4 728.1 1384.1 727.1 M1366.7 746.4 C1366.8 745.5 1367.3 743.0 1367.6 741.4 C1367.9 739.7 1367.8 737.9 1368.6 736.4 C1369.3 735.0 1370.9 734.0 1372.0 732.7 C1373.0 731.4 1374.4 729.2 1374.8 728.5  M1358.5 742.2 C1357.8 741.4 1355.5 739.3 1354.4 737.6 C1353.3 735.9 1352.6 733.9 1352.0 732.0 C1351.3 730.1 1351.5 727.7 1350.5 726.1 C1349.4 724.4 1346.5 722.8 1345.8 722.2  M1330.1 728.5 C1330.5 727.8 1331.9 725.7 1332.4 724.1 C1332.8 722.6 1332.4 720.6 1333.1 719.2 C1333.8 717.9 1335.7 717.2 1336.7 715.8 C1337.6 714.5 1338.2 712.9 1338.8 711.4 C1339.4 709.9 1340.1 707.5 1340.4 706.7  M1307.1 703.0 Q1313.1 703.6 1315.6 703.1 M1300.8 714.5 C1301.3 713.5 1302.6 710.5 1303.6 708.6 C1304.7 706.6 1306.1 704.9 1307.1 703.0 C1308.0 701.0 1309.0 697.8 1309.4 696.8  M1266.1 697.9 C1266.9 697.4 1269.3 695.8 1271.0 694.9 C1272.7 694.0 1274.4 692.8 1276.2 692.5 C1278.0 692.1 1280.2 692.2 1281.9 693.0 C1283.6 693.7 1284.6 695.7 1286.2 696.8 C1287.8 697.8 1290.6 698.7 1291.4 699.1  M1217.7 674.8 C1218.8 674.8 1222.0 674.5 1224.0 674.9 C1226.1 675.3 1227.9 676.9 1230.0 677.0 C1232.0 677.2 1234.4 676.7 1236.1 675.7 C1237.8 674.7 1239.5 671.7 1240.2 670.9 " stroke="#1e1e1e" stroke-width="4.0" fill="none" stroke-linecap="round" stroke-linejoin="round"/>
<path d="M1250 655 C1290 640 1330 628 1360 648 C1372 662 1395 668 1420 660" stroke="#3a3a3a" stroke-width="5" fill="none" filter="url(#sblur)"/>
<ellipse cx="1372" cy="656" rx="11" ry="7" fill="#1a1a1a"/>
<ellipse cx="1390" cy="720" rx="42" ry="28" fill="#8c8c8c" filter="url(#sblur2)"/>
<path d="M1356.3 710.1 C1356.8 710.1 1358.3 710.4 1359.2 710.6 C1360.2 710.7 1361.1 710.9 1362.1 711.1 C1363.0 711.4 1363.9 711.7 1364.8 712.1 C1365.7 712.5 1366.9 713.3 1367.4 713.6  M1380.8 711.8 Q1385.9 710.3 1387.7 712.1 M1375.8 701.3 C1376.0 701.9 1376.6 703.8 1377.2 704.9 C1377.7 706.1 1378.5 707.2 1379.1 708.3 C1379.6 709.4 1380.5 711.2 1380.8 711.8  M1384.6 697.4 C1385.0 698.2 1386.2 700.5 1386.9 702.1 C1387.6 703.6 1387.9 705.4 1388.7 706.9 C1389.5 708.4 1391.2 710.5 1391.7 711.2  M1401.8 699.0 C1401.5 699.6 1400.7 701.4 1400.1 702.6 C1399.5 703.8 1398.8 704.9 1398.1 706.0 C1397.4 707.1 1396.1 708.6 1395.7 709.1  M1408.1 709.5 Q1402.8 707.9 1402.1 709.9 M1413.5 703.0 C1413.2 703.4 1412.2 704.4 1411.5 705.1 C1410.8 705.7 1410.1 706.3 1409.5 707.0 C1408.9 707.8 1408.6 708.8 1408.1 709.5 C1407.5 710.3 1406.5 711.3 1406.2 711.6  M1417.8 714.2 Q1417.6 710.3 1414.4 709.6 M1428.4 711.0 C1427.5 711.3 1425.0 712.4 1423.2 712.9 C1421.4 713.5 1419.6 713.7 1417.8 714.2 C1416.0 714.7 1413.4 715.6 1412.5 715.9  M1429.9 722.0 C1429.5 722.0 1428.4 721.9 1427.7 721.8 C1427.0 721.7 1426.3 721.6 1425.6 721.3 C1424.9 721.1 1424.2 720.8 1423.6 720.4 C1423.0 720.0 1422.5 719.5 1422.0 719.0 C1421.5 718.5 1420.9 717.6 1420.7 717.3  M1431.4 733.3 C1430.7 733.4 1428.8 733.6 1427.5 733.8 C1426.3 734.1 1425.0 734.6 1423.8 734.9 C1422.6 735.2 1420.7 735.7 1420.0 735.9  M1412.4 738.0 Q1409.0 740.0 1405.8 743.4 M1425.8 740.1 C1425.3 740.1 1423.9 740.2 1423.0 740.2 C1422.1 740.3 1421.2 740.3 1420.3 740.3 C1419.3 740.2 1418.4 740.3 1417.5 740.2 C1416.6 740.0 1415.7 739.7 1414.9 739.3 C1414.0 739.0 1412.8 738.2 1412.4 738.0  M1407.1 746.3 C1407.0 746.0 1406.7 744.9 1406.5 744.2 C1406.2 743.6 1405.8 743.0 1405.5 742.3 C1405.3 741.7 1405.3 740.9 1405.1 740.2 C1404.9 739.5 1404.7 738.9 1404.4 738.2 C1404.2 737.5 1403.7 736.6 1403.6 736.2  M1398.9 749.0 C1398.8 748.4 1398.1 746.4 1397.9 745.1 C1397.6 743.8 1397.4 742.4 1397.2 741.1 C1397.0 739.8 1396.9 738.4 1396.6 737.1 C1396.3 735.8 1395.5 733.9 1395.3 733.3  M1380.5 745.3 Q1375.3 742.4 1372.4 740.5 M1383.1 740.0 Q1377.7 737.4 1376.4 734.6 M1384.4 737.3 Q1389.8 736.5 1393.3 737.7 M1386.1 734.8 Q1391.8 736.0 1395.8 736.4 M1379.8 748.3 C1380.0 747.8 1380.2 746.3 1380.5 745.3 C1380.8 744.4 1381.4 743.6 1381.9 742.7 C1382.3 741.8 1382.7 740.9 1383.1 740.0 C1383.5 739.1 1383.9 738.1 1384.4 737.3 C1384.9 736.4 1385.8 735.2 1386.1 734.8  M1362.8 742.0 C1363.0 741.5 1363.5 740.1 1364.0 739.3 C1364.6 738.5 1365.4 737.9 1366.0 737.1 C1366.5 736.2 1366.8 735.3 1367.1 734.4 C1367.5 733.4 1367.9 732.0 1368.0 731.5  M1358.5 738.2 Q1359.3 740.8 1360.1 744.1 M1361.3 739.8 Q1366.6 738.0 1371.4 734.6 M1352.0 737.0 C1352.5 737.1 1354.2 737.1 1355.3 737.3 C1356.4 737.5 1357.5 737.7 1358.5 738.2 C1359.5 738.6 1360.3 739.3 1361.3 739.8 C1362.3 740.2 1363.9 740.7 1364.5 740.9  M1352.0 723.9 C1352.8 724.4 1355.2 725.8 1356.9 726.6 C1358.6 727.4 1360.5 727.8 1362.2 728.6 C1363.9 729.5 1366.3 731.0 1367.1 731.5  M1352.0 720.4 C1352.4 720.7 1353.7 721.4 1354.5 721.9 C1355.4 722.4 1356.2 723.0 1356.9 723.6 C1357.7 724.2 1358.5 724.9 1359.2 725.5 C1360.0 726.1 1360.8 726.7 1361.4 727.5 C1362.0 728.2 1362.7 729.5 1363.0 729.9 " stroke="#3a3a3a" stroke-width="1.8" fill="none" stroke-linecap="round" stroke-linejoin="round"/>
</g>
<ellipse cx="1275" cy="740" rx="15" ry="12" fill="#f0f0f0" filter="url(#sblur)"/>
<path d="M1180 700 C1215 695 1250 712 1275 728" stroke="#eaeaea" stroke-width="5" fill="none" filter="url(#sblur)"/>
<ellipse cx="1200" cy="721" rx="14" ry="14" fill="#060606" stroke="#dcdcdc" stroke-width="4"/>
<path d="M1255 735 C1300 720 1330 720 1345 735 C1340 760 1310 770 1290 760 C1270 755 1262 745 1255 735Z" fill="#060606"/>
<ellipse cx="1340" cy="770" rx="15" ry="13" fill="#060606" stroke="#cfcfcf" stroke-width="2.5"/>
<path d="M1300 758 L1310 830 M1290 770 C1285 810 1290 850 1280 890 M1360 785 C1380 820 1390 850 1395 890 M1355 795 C1330 820 1320 840 1315 890" stroke="#b8b8b8" stroke-width="2.5" fill="none" filter="url(#sblur)"/>
<path d="M1318 755 L1350 752" stroke="#f0f0f0" stroke-width="5" filter="url(#sblur)"/>
<g clip-path="url(#sgc)"><rect x="1150" y="535" width="320" height="350" fill="#000" filter="url(#stex)" opacity=".3"/><rect x="1250" y="740" width="220" height="150" fill="#fff" filter="url(#stexw)" opacity=".25"/></g>
<clipPath id="coc"><path d="M1704.5 528.7 C1724.5 527.6 1746.8 535.5 1762.8 542.4 C1778.8 549.2 1790.8 558.4 1800.5 569.8 C1810.2 581.2 1815.9 596.1 1821.0 611.0 C1826.1 625.9 1829.0 643.0 1831.3 659.0 C1833.6 675.0 1834.7 695.6 1834.7 707.0 C1834.7 718.4 1830.2 717.8 1831.3 727.5 C1832.4 737.2 1840.5 750.4 1841.6 765.0 C1842.7 779.6 1840.6 800.8 1838.0 815.0 C1835.4 829.2 1829.8 837.5 1826.0 850.0 C1822.2 862.5 1848.5 883.3 1815.0 890.0 C1781.5 896.7 1659.2 896.7 1625.0 890.0 C1590.8 883.3 1614.8 864.5 1610.0 850.0 C1605.2 835.5 1599.8 816.7 1596.0 803.0 C1592.2 789.3 1587.2 779.5 1587.0 768.0 C1586.8 756.5 1596.3 744.5 1594.8 734.3 C1593.2 724.1 1581.1 719.5 1577.7 707.0 C1574.3 694.5 1573.2 675.0 1574.3 659.0 C1575.4 643.0 1578.8 624.7 1584.5 611.0 C1590.2 597.3 1598.8 587.0 1608.5 576.7 C1618.2 566.4 1626.8 557.0 1642.8 549.0 C1658.8 541.0 1684.5 529.8 1704.5 528.7 Z"/></clipPath>
<path d="M1704.5 528.7 C1724.5 527.6 1746.8 535.5 1762.8 542.4 C1778.8 549.2 1790.8 558.4 1800.5 569.8 C1810.2 581.2 1815.9 596.1 1821.0 611.0 C1826.1 625.9 1829.0 643.0 1831.3 659.0 C1833.6 675.0 1834.7 695.6 1834.7 707.0 C1834.7 718.4 1830.2 717.8 1831.3 727.5 C1832.4 737.2 1840.5 750.4 1841.6 765.0 C1842.7 779.6 1840.6 800.8 1838.0 815.0 C1835.4 829.2 1829.8 837.5 1826.0 850.0 C1822.2 862.5 1848.5 883.3 1815.0 890.0 C1781.5 896.7 1659.2 896.7 1625.0 890.0 C1590.8 883.3 1614.8 864.5 1610.0 850.0 C1605.2 835.5 1599.8 816.7 1596.0 803.0 C1592.2 789.3 1587.2 779.5 1587.0 768.0 C1586.8 756.5 1596.3 744.5 1594.8 734.3 C1593.2 724.1 1581.1 719.5 1577.7 707.0 C1574.3 694.5 1573.2 675.0 1574.3 659.0 C1575.4 643.0 1578.8 624.7 1584.5 611.0 C1590.2 597.3 1598.8 587.0 1608.5 576.7 C1618.2 566.4 1626.8 557.0 1642.8 549.0 C1658.8 541.0 1684.5 529.8 1704.5 528.7 Z" fill="#e0e0e0"/>
<path d="M1704.5 535.6 C1723.7 534.5 1745.1 542.1 1760.5 548.7 C1775.8 555.3 1787.4 564.0 1796.7 575.0 C1806.0 586.0 1811.4 600.3 1816.4 614.6 C1821.3 628.8 1824.1 645.3 1826.2 660.6 C1828.4 676.0 1829.5 695.8 1829.5 706.7 C1829.5 717.7 1825.1 717.1 1826.2 726.4 C1827.4 735.7 1835.1 748.4 1836.1 762.4 C1837.2 776.4 1835.2 796.8 1832.7 810.4 C1830.2 824.0 1824.8 832.0 1821.2 844.0 C1817.5 856.0 1842.8 876.0 1810.6 882.4 C1778.4 888.8 1661.0 888.8 1628.2 882.4 C1595.4 876.0 1618.4 857.9 1613.8 844.0 C1609.2 830.1 1604.0 812.0 1600.4 798.9 C1596.7 785.8 1591.9 776.3 1591.7 765.3 C1591.5 754.3 1600.7 742.7 1599.2 732.9 C1597.7 723.2 1586.1 718.8 1582.8 706.7 C1579.5 694.7 1578.4 676.0 1579.5 660.6 C1580.6 645.3 1583.8 627.7 1589.3 614.6 C1594.8 601.4 1603.0 591.6 1612.4 581.6 C1621.7 571.7 1629.9 562.7 1645.3 555.0 C1660.6 547.4 1685.3 536.6 1704.5 535.6 Z" fill="#3a3a3a"/>
<path d="M1704.5 537.3 C1723.5 536.2 1744.7 543.8 1759.9 550.3 C1775.1 556.8 1786.5 565.4 1795.7 576.3 C1804.9 587.2 1810.3 601.3 1815.2 615.5 C1820.1 629.6 1822.8 645.8 1825.0 661.0 C1827.2 676.2 1828.2 695.8 1828.2 706.6 C1828.2 717.5 1823.9 716.9 1825.0 726.1 C1826.1 735.3 1833.7 747.9 1834.8 761.8 C1835.8 775.6 1833.8 795.8 1831.3 809.2 C1828.9 822.7 1823.6 830.6 1820.0 842.5 C1816.3 854.4 1841.3 874.2 1809.5 880.5 C1777.7 886.8 1661.5 886.8 1629.0 880.5 C1596.5 874.2 1619.3 856.3 1614.8 842.5 C1610.2 828.7 1605.1 810.8 1601.5 797.9 C1597.8 784.9 1593.1 775.5 1592.9 764.6 C1592.7 753.7 1601.8 742.2 1600.3 732.6 C1598.8 722.9 1587.3 718.6 1584.1 706.6 C1580.8 694.7 1579.8 676.2 1580.8 661.0 C1581.9 645.8 1585.1 628.5 1590.5 615.5 C1595.9 602.4 1604.1 592.7 1613.3 582.9 C1622.6 573.0 1630.7 564.1 1645.9 556.5 C1661.1 548.9 1685.5 538.3 1704.5 537.3 Z" fill="#cfcfcf"/>
<path d="M1704.5 540.7 C1723.1 539.7 1743.9 547.1 1758.8 553.4 C1773.6 559.8 1784.8 568.3 1793.8 578.9 C1802.8 589.5 1808.1 603.4 1812.9 617.2 C1817.7 631.1 1820.3 647.0 1822.5 661.9 C1824.6 676.8 1825.6 695.9 1825.6 706.5 C1825.6 717.1 1821.4 716.6 1822.5 725.6 C1823.5 734.6 1831.0 746.9 1832.0 760.5 C1833.1 774.0 1831.1 793.8 1828.7 807.0 C1826.3 820.1 1821.1 827.9 1817.5 839.5 C1814.0 851.1 1838.5 870.5 1807.3 876.7 C1776.1 882.9 1662.4 882.9 1630.6 876.7 C1598.8 870.5 1621.1 853.0 1616.7 839.5 C1612.2 826.0 1607.2 808.5 1603.6 795.8 C1600.1 783.1 1595.4 773.9 1595.3 763.2 C1595.1 752.6 1604.0 741.4 1602.5 731.9 C1601.1 722.4 1589.8 718.2 1586.6 706.5 C1583.4 694.8 1582.4 676.8 1583.4 661.9 C1584.5 647.0 1587.6 630.0 1592.9 617.2 C1598.2 604.5 1606.2 594.9 1615.3 585.3 C1624.3 575.7 1632.3 567.0 1647.2 559.6 C1662.0 552.1 1685.9 541.7 1704.5 540.7 Z" fill="#4e4e4e"/>
<g clip-path="url(#coc)">
<path d="M1580 735 C1650 755 1760 755 1850 735 L1850 890 L1580 890Z" fill="#404040" filter="url(#sblur3)"/>
<ellipse cx="1615" cy="790" rx="22" ry="48" fill="#b4b4b4" filter="url(#sblur6)"/>
<ellipse cx="1812" cy="785" rx="24" ry="50" fill="#c4c4c4" filter="url(#sblur6)"/>
<ellipse cx="1705" cy="860" rx="60" ry="40" fill="#383838" filter="url(#sblur10)"/>
<path d="M1625 760 C1640 800 1650 840 1660 890 M1800 755 C1790 800 1782 840 1775 890" stroke="#181818" stroke-width="3.5" fill="none" filter="url(#sblur)"/>
<path d="M1710 820 L1715 890" stroke="#101010" stroke-width="8" fill="none" filter="url(#sblur3)"/>
<path d="M1665 765 C1668 790 1672 800 1675 810 M1745 765 C1742 790 1740 800 1738 810" stroke="#e0e0e0" stroke-width="4" fill="none" filter="url(#sblur)"/>
</g>
<path d="M1704.5 544.8 C1723.0 545.4 1746.2 550.7 1761.7 559.1 C1777.3 567.4 1788.6 580.5 1797.6 594.8 C1806.5 609.1 1812.5 628.3 1815.5 645.0 C1818.4 661.7 1817.2 682.0 1815.5 695.1 C1813.7 708.3 1816.1 716.6 1804.8 723.8 C1793.5 730.9 1764.1 734.5 1747.4 738.1 C1730.7 741.6 1719.4 745.1 1704.5 745.1 C1689.6 745.1 1672.9 740.4 1658.0 738.1 C1643.0 735.7 1625.1 738.1 1614.9 731.0 C1604.8 723.8 1600.0 710.7 1597.1 695.1 C1594.1 679.6 1594.1 655.8 1597.1 637.9 C1600.0 620.0 1606.0 601.4 1614.9 587.7 C1623.9 574.0 1635.7 562.7 1650.7 555.5 C1665.6 548.4 1686.0 544.2 1704.5 544.8 Z" fill="#141414"/>
<path d="M1704.5 549.3 C1722.2 549.9 1744.5 555.0 1759.3 563.0 C1774.1 571.0 1785.0 583.5 1793.6 597.2 C1802.2 610.9 1807.8 629.2 1810.7 645.2 C1813.6 661.2 1812.4 680.6 1810.7 693.2 C1809.0 705.8 1811.3 713.8 1800.5 720.6 C1789.7 727.5 1761.6 730.9 1745.6 734.3 C1729.6 737.7 1718.8 741.0 1704.5 741.0 C1690.2 741.0 1674.3 736.5 1660.0 734.3 C1645.7 732.0 1628.5 734.4 1618.8 727.5 C1609.1 720.6 1604.5 708.1 1601.7 693.2 C1598.9 678.4 1598.9 655.5 1601.7 638.4 C1604.5 621.3 1610.2 603.5 1618.8 590.4 C1627.3 577.3 1638.7 566.5 1653.0 559.6 C1667.3 552.8 1686.8 548.7 1704.5 549.3 Z" fill="#7a7a7a"/>
<ellipse cx="1705" cy="650" rx="82" ry="62" fill="#a0a0a0" filter="url(#sblur10)"/>
<clipPath id="cob"><path d="M1704.5 549.3 C1722.2 549.9 1744.5 555.0 1759.3 563.0 C1774.1 571.0 1785.0 583.5 1793.6 597.2 C1802.2 610.9 1807.8 629.2 1810.7 645.2 C1813.6 661.2 1812.4 680.6 1810.7 693.2 C1809.0 705.8 1811.3 713.8 1800.5 720.6 C1789.7 727.5 1761.6 730.9 1745.6 734.3 C1729.6 737.7 1718.8 741.0 1704.5 741.0 C1690.2 741.0 1674.3 736.5 1660.0 734.3 C1645.7 732.0 1628.5 734.4 1618.8 727.5 C1609.1 720.6 1604.5 708.1 1601.7 693.2 C1598.9 678.4 1598.9 655.5 1601.7 638.4 C1604.5 621.3 1610.2 603.5 1618.8 590.4 C1627.3 577.3 1638.7 566.5 1653.0 559.6 C1667.3 552.8 1686.8 548.7 1704.5 549.3 Z"/></clipPath><g clip-path="url(#cob)">
<path d="M1707.2 550.0 C1706.7 550.9 1705.5 554.2 1704.1 555.7 C1702.7 557.3 1700.4 558.0 1698.6 559.2 C1696.8 560.4 1694.2 562.4 1693.3 563.0  M1723.9 554.2 C1723.1 555.1 1720.8 558.6 1718.7 559.7 C1716.5 560.8 1713.2 559.6 1711.1 560.7 C1708.9 561.7 1707.5 564.2 1705.7 566.1 C1703.9 567.9 1701.4 570.7 1700.5 571.7  M1733.8 556.6 C1733.9 557.4 1733.9 559.9 1734.0 561.4 C1734.2 563.0 1734.4 564.6 1734.6 566.2 C1734.9 567.8 1735.7 569.5 1735.4 571.0 C1735.1 572.5 1734.1 574.0 1733.0 575.2 C1732.0 576.3 1729.7 577.4 1729.1 577.9  M1752.1 561.2 C1750.9 562.3 1747.8 566.3 1745.1 567.5 C1742.4 568.8 1738.7 569.4 1735.8 568.8 C1732.9 568.2 1730.4 565.6 1727.7 564.0 C1725.0 562.4 1720.8 560.1 1719.5 559.4  M1764.6 568.3 C1764.4 569.9 1763.9 574.6 1763.1 577.6 C1762.2 580.6 1761.3 583.9 1759.6 586.4 C1757.8 588.9 1755.3 591.6 1752.5 592.7 C1749.8 593.8 1744.7 593.0 1743.1 593.0  M1758.9 575.5 Q1759.1 568.6 1756.9 564.6 M1772.3 576.0 C1771.2 576.2 1767.8 577.4 1765.6 577.4 C1763.3 577.3 1760.8 576.7 1758.9 575.5 C1757.0 574.4 1755.2 572.5 1754.2 570.5 C1753.2 568.5 1753.2 564.9 1753.0 563.7  M1779.8 583.4 C1778.8 584.0 1775.8 585.9 1773.7 586.9 C1771.7 588.0 1769.5 588.8 1767.3 589.6 C1765.1 590.4 1762.8 590.8 1760.7 591.8 C1758.6 592.8 1755.9 595.1 1755.0 595.8  M1774.3 600.6 Q1774.9 606.6 1775.0 610.6 M1786.0 589.7 C1785.4 590.9 1783.9 595.2 1782.0 597.1 C1780.0 598.9 1777.0 600.3 1774.3 600.6 C1771.7 600.8 1767.5 599.1 1766.1 598.8  M1796.0 604.0 C1794.8 604.6 1791.4 606.8 1789.0 607.8 C1786.5 608.7 1783.8 609.4 1781.2 609.7 C1778.6 609.9 1775.9 609.4 1773.2 609.5 C1770.5 609.6 1766.6 610.2 1765.2 610.4  M1800.1 615.3 C1799.2 615.2 1796.8 614.7 1795.2 614.5 C1793.5 614.3 1791.9 614.3 1790.2 614.0 C1788.6 613.7 1787.0 612.8 1785.4 612.8 C1783.8 612.8 1782.2 613.6 1780.6 614.2 C1779.1 614.8 1776.9 616.0 1776.1 616.3  M1801.0 631.9 Q1798.4 630.3 1793.8 630.6 M1783.2 637.2 Q1781.5 632.4 1783.6 628.1 M1804.9 629.0 C1804.3 629.4 1802.2 630.9 1801.0 631.9 C1799.7 632.9 1798.6 634.2 1797.2 635.1 C1795.8 635.9 1794.2 636.4 1792.7 636.9 C1791.1 637.5 1789.6 638.4 1788.0 638.5 C1786.4 638.5 1784.0 637.4 1783.2 637.2  M1792.0 622.4 Q1786.4 623.8 1782.8 627.2 M1807.9 637.4 C1806.4 636.3 1801.4 633.6 1798.8 631.1 C1796.1 628.6 1793.5 625.6 1792.0 622.4 C1790.5 619.1 1790.1 613.3 1789.7 611.5  M1806.4 649.5 Q1803.7 655.1 1801.4 656.5 M1810.7 649.2 C1810.0 649.3 1807.8 649.6 1806.4 649.5 C1805.0 649.5 1803.6 649.1 1802.2 648.9 C1800.7 648.7 1799.2 648.7 1797.9 648.2 C1796.6 647.7 1795.0 646.2 1794.4 645.8  M1810.7 664.8 C1809.6 663.8 1806.2 660.9 1804.1 658.9 C1802.0 656.8 1800.1 654.4 1797.9 652.5 C1795.7 650.5 1791.9 648.1 1790.7 647.2  M1810.7 670.3 C1809.9 669.4 1807.9 666.1 1805.9 665.0 C1804.0 664.0 1801.3 664.0 1798.9 663.9 C1796.6 663.9 1794.2 664.0 1791.9 664.5 C1789.6 665.0 1786.4 666.6 1785.3 667.1  M1799.4 686.1 Q1800.1 679.8 1798.4 676.7 M1810.7 689.5 C1809.7 689.4 1806.6 689.5 1804.7 688.9 C1802.8 688.3 1801.1 687.1 1799.4 686.1 C1797.7 685.0 1795.3 683.2 1794.5 682.6  M1810.6 693.4 C1809.9 693.2 1807.7 692.4 1806.2 692.2 C1804.6 691.9 1802.9 692.5 1801.5 692.0 C1800.1 691.5 1799.2 689.7 1797.8 689.2 C1796.4 688.7 1794.6 689.3 1793.1 688.9 C1791.7 688.5 1789.7 687.2 1789.0 686.9  M1806.3 704.9 C1805.0 703.8 1800.2 701.0 1798.5 698.3 C1796.7 695.5 1796.8 691.6 1795.9 688.2 C1795.0 684.9 1793.6 680.0 1793.2 678.3  M1804.8 697.8 Q1809.7 698.4 1814.8 697.0 M1810.8 689.5 Q1808.7 684.0 1807.8 678.1 M1805.4 707.4 C1805.1 706.6 1803.6 704.3 1803.5 702.7 C1803.4 701.1 1804.1 699.2 1804.8 697.8 C1805.5 696.3 1806.9 695.1 1807.9 693.7 C1808.9 692.3 1809.6 690.6 1810.8 689.5 C1812.0 688.4 1814.5 687.4 1815.2 686.9  M1801.6 717.8 C1800.7 716.8 1797.7 714.1 1796.2 712.0 C1794.7 710.0 1793.8 707.4 1792.5 705.2 C1791.1 703.0 1789.3 701.0 1788.1 698.7 C1786.9 696.4 1785.8 692.6 1785.3 691.4  M1792.5 722.6 C1791.3 722.6 1787.6 722.0 1785.5 722.7 C1783.4 723.3 1781.7 725.3 1779.6 726.4 C1777.6 727.5 1774.3 728.6 1773.2 729.1  M1781.7 725.3 C1781.2 723.3 1780.3 716.9 1778.8 713.1 C1777.2 709.3 1775.0 705.5 1772.2 702.5 C1769.4 699.5 1763.9 696.3 1762.2 695.0  M1770.5 722.8 Q1764.6 717.4 1762.2 717.1 M1770.5 728.1 C1770.5 727.2 1770.1 724.5 1770.5 722.8 C1770.9 721.2 1772.4 719.8 1772.9 718.1 C1773.5 716.5 1773.2 714.5 1773.9 713.0 C1774.6 711.4 1775.9 710.0 1777.1 708.8 C1778.4 707.6 1780.7 706.3 1781.5 705.8  M1759.1 730.9 C1758.7 729.9 1757.5 726.8 1756.5 724.9 C1755.4 723.0 1754.4 720.8 1752.8 719.4 C1751.2 718.0 1747.8 717.1 1746.8 716.6  M1721.8 722.4 Q1717.8 720.9 1713.3 718.7 M1721.1 727.3 C1721.2 726.5 1721.7 724.0 1721.8 722.4 C1721.9 720.7 1721.4 719.0 1721.6 717.4 C1721.7 715.7 1722.9 714.1 1722.8 712.5 C1722.7 710.9 1721.2 709.4 1721.2 707.8 C1721.1 706.2 1722.4 703.8 1722.7 703.1  M1685.9 717.2 C1685.3 715.9 1683.9 711.8 1682.6 709.2 C1681.3 706.7 1679.4 704.4 1678.0 701.9 C1676.5 699.4 1676.0 696.1 1674.0 694.2 C1672.0 692.3 1667.4 691.2 1666.1 690.6  M1651.7 707.5 C1652.5 706.8 1655.0 705.2 1656.1 703.6 C1657.1 702.1 1657.7 700.1 1658.3 698.2 C1658.8 696.4 1658.8 694.4 1659.4 692.6 C1660.1 690.8 1661.9 688.4 1662.4 687.6  M1614.8 696.9 C1615.4 696.1 1617.7 693.7 1618.6 691.8 C1619.6 689.9 1620.4 687.7 1620.5 685.7 C1620.6 683.6 1619.4 681.4 1619.5 679.3 C1619.6 677.2 1621.0 674.2 1621.3 673.2  M1628.8 667.6 Q1632.2 665.9 1636.5 667.2 M1601.7 682.5 C1602.8 682.4 1606.0 682.1 1608.2 681.6 C1610.3 681.2 1612.6 680.9 1614.5 679.9 C1616.3 678.9 1617.5 676.6 1619.3 675.5 C1621.1 674.4 1623.8 674.5 1625.4 673.2 C1627.0 671.9 1628.2 668.5 1628.8 667.6  M1619.0 666.2 Q1617.2 660.9 1618.2 654.6 M1601.7 673.8 C1602.8 673.7 1606.3 674.0 1608.2 673.1 C1610.1 672.2 1611.0 669.6 1612.8 668.5 C1614.6 667.3 1616.9 666.8 1619.0 666.2 C1621.0 665.6 1624.3 665.0 1625.3 664.8  M1601.7 663.3 C1602.7 662.2 1605.2 658.1 1607.6 656.7 C1610.1 655.4 1613.5 655.9 1616.4 655.4 C1619.3 654.8 1623.6 653.7 1625.0 653.4  M1601.7 651.8 C1602.4 651.9 1604.3 652.5 1605.6 652.4 C1606.9 652.3 1608.0 651.2 1609.3 651.0 C1610.6 650.8 1612.0 651.3 1613.3 651.1 C1614.6 650.9 1615.9 650.4 1617.0 649.7 C1618.1 649.1 1619.5 647.6 1620.0 647.1  M1631.6 636.5 Q1633.9 630.0 1638.2 628.8 M1604.5 630.6 C1605.7 630.4 1609.3 629.3 1611.5 629.7 C1613.8 630.0 1615.7 632.1 1617.9 632.7 C1620.2 633.4 1622.7 633.2 1625.0 633.8 C1627.2 634.5 1630.5 636.1 1631.6 636.5  M1608.0 629.5 Q1605.0 634.4 1601.5 638.3 M1606.2 625.6 C1606.5 626.3 1607.1 628.4 1608.0 629.5 C1608.8 630.6 1610.1 631.3 1611.3 632.1 C1612.4 632.9 1613.7 633.5 1615.0 634.0 C1616.3 634.5 1618.4 635.0 1619.1 635.2  M1622.5 615.1 Q1621.9 618.7 1622.7 623.4 M1613.6 604.9 C1614.2 605.9 1615.2 609.5 1616.7 611.2 C1618.2 612.9 1620.5 613.9 1622.5 615.1 C1624.6 616.2 1627.1 616.6 1628.9 618.1 C1630.7 619.5 1631.5 622.2 1633.4 623.5 C1635.2 624.8 1638.9 625.4 1640.0 625.8  M1620.6 598.7 Q1626.2 599.8 1632.6 598.7 M1617.5 594.1 C1618.0 594.9 1619.2 597.6 1620.6 598.7 C1622.0 599.8 1624.4 599.7 1625.9 600.8 C1627.3 601.8 1628.3 603.6 1629.3 605.2 C1630.2 606.8 1631.3 609.4 1631.7 610.2  M1634.1 608.6 Q1629.8 611.5 1629.7 615.1 M1620.1 589.2 C1620.8 590.3 1622.9 593.8 1624.5 595.9 C1626.0 598.0 1628.0 599.9 1629.6 602.0 C1631.2 604.1 1632.5 606.5 1634.1 608.6 C1635.6 610.7 1638.2 613.8 1639.1 614.8  M1641.6 581.2 Q1643.4 585.3 1646.8 585.5 M1628.9 581.3 C1629.6 581.8 1631.4 583.7 1632.8 584.1 C1634.3 584.5 1636.1 584.2 1637.6 583.7 C1639.1 583.3 1640.2 581.7 1641.6 581.2 C1643.1 580.6 1644.9 580.9 1646.3 580.4 C1647.8 579.8 1649.7 578.2 1650.4 577.8  M1648.3 572.4 Q1647.5 576.3 1648.1 581.6 M1660.2 594.0 Q1666.4 600.1 1668.7 600.9 M1641.9 569.6 C1642.9 570.1 1646.2 571.4 1648.3 572.4 C1650.4 573.5 1652.6 574.4 1654.5 575.7 C1656.4 577.0 1658.5 578.4 1659.7 580.3 C1660.8 582.2 1661.2 584.8 1661.3 587.1 C1661.4 589.4 1660.4 592.9 1660.2 594.0  M1650.9 568.8 Q1651.3 571.4 1648.8 575.2 M1653.6 579.2 Q1658.7 580.6 1661.7 581.8 M1647.4 564.6 C1648.0 565.3 1650.1 567.2 1650.9 568.8 C1651.6 570.3 1651.5 572.3 1651.9 574.0 C1652.4 575.8 1652.6 577.8 1653.6 579.2 C1654.7 580.5 1657.1 580.7 1658.2 582.0 C1659.3 583.3 1660.0 586.1 1660.4 586.9  M1658.3 558.5 C1658.8 559.2 1660.8 561.1 1661.7 562.6 C1662.6 564.1 1663.5 565.8 1663.7 567.5 C1663.9 569.2 1663.7 571.2 1663.0 572.7 C1662.3 574.2 1660.0 575.9 1659.4 576.6  M1675.4 555.1 C1676.7 555.7 1680.5 557.4 1682.9 558.7 C1685.3 560.0 1687.5 562.3 1690.0 562.8 C1692.6 563.3 1695.4 561.9 1698.2 561.7 C1700.9 561.4 1705.0 561.4 1706.4 561.4  M1680.6 554.1 C1680.5 554.6 1680.1 556.3 1680.1 557.4 C1680.1 558.5 1680.4 559.6 1680.4 560.7 C1680.4 561.8 1680.5 563.0 1680.2 564.1 C1679.9 565.1 1679.0 566.0 1678.4 566.9 C1677.8 567.8 1676.9 569.3 1676.6 569.7  M1694.1 551.4 C1694.5 552.9 1696.9 557.3 1696.8 560.2 C1696.7 563.1 1694.1 565.8 1693.5 568.8 C1692.9 571.7 1692.3 575.1 1693.0 578.0 C1693.7 580.8 1696.8 584.6 1697.6 585.9 " stroke="#4a4a4a" stroke-width="9.2" fill="none" stroke-linecap="round" opacity=".6" filter="url(#sblur2)"/><path d="M1707.2 550.0 C1706.7 550.9 1705.5 554.2 1704.1 555.7 C1702.7 557.3 1700.4 558.0 1698.6 559.2 C1696.8 560.4 1694.2 562.4 1693.3 563.0  M1723.9 554.2 C1723.1 555.1 1720.8 558.6 1718.7 559.7 C1716.5 560.8 1713.2 559.6 1711.1 560.7 C1708.9 561.7 1707.5 564.2 1705.7 566.1 C1703.9 567.9 1701.4 570.7 1700.5 571.7  M1733.8 556.6 C1733.9 557.4 1733.9 559.9 1734.0 561.4 C1734.2 563.0 1734.4 564.6 1734.6 566.2 C1734.9 567.8 1735.7 569.5 1735.4 571.0 C1735.1 572.5 1734.1 574.0 1733.0 575.2 C1732.0 576.3 1729.7 577.4 1729.1 577.9  M1752.1 561.2 C1750.9 562.3 1747.8 566.3 1745.1 567.5 C1742.4 568.8 1738.7 569.4 1735.8 568.8 C1732.9 568.2 1730.4 565.6 1727.7 564.0 C1725.0 562.4 1720.8 560.1 1719.5 559.4  M1764.6 568.3 C1764.4 569.9 1763.9 574.6 1763.1 577.6 C1762.2 580.6 1761.3 583.9 1759.6 586.4 C1757.8 588.9 1755.3 591.6 1752.5 592.7 C1749.8 593.8 1744.7 593.0 1743.1 593.0  M1758.9 575.5 Q1759.1 568.6 1756.9 564.6 M1772.3 576.0 C1771.2 576.2 1767.8 577.4 1765.6 577.4 C1763.3 577.3 1760.8 576.7 1758.9 575.5 C1757.0 574.4 1755.2 572.5 1754.2 570.5 C1753.2 568.5 1753.2 564.9 1753.0 563.7  M1779.8 583.4 C1778.8 584.0 1775.8 585.9 1773.7 586.9 C1771.7 588.0 1769.5 588.8 1767.3 589.6 C1765.1 590.4 1762.8 590.8 1760.7 591.8 C1758.6 592.8 1755.9 595.1 1755.0 595.8  M1774.3 600.6 Q1774.9 606.6 1775.0 610.6 M1786.0 589.7 C1785.4 590.9 1783.9 595.2 1782.0 597.1 C1780.0 598.9 1777.0 600.3 1774.3 600.6 C1771.7 600.8 1767.5 599.1 1766.1 598.8  M1796.0 604.0 C1794.8 604.6 1791.4 606.8 1789.0 607.8 C1786.5 608.7 1783.8 609.4 1781.2 609.7 C1778.6 609.9 1775.9 609.4 1773.2 609.5 C1770.5 609.6 1766.6 610.2 1765.2 610.4  M1800.1 615.3 C1799.2 615.2 1796.8 614.7 1795.2 614.5 C1793.5 614.3 1791.9 614.3 1790.2 614.0 C1788.6 613.7 1787.0 612.8 1785.4 612.8 C1783.8 612.8 1782.2 613.6 1780.6 614.2 C1779.1 614.8 1776.9 616.0 1776.1 616.3  M1801.0 631.9 Q1798.4 630.3 1793.8 630.6 M1783.2 637.2 Q1781.5 632.4 1783.6 628.1 M1804.9 629.0 C1804.3 629.4 1802.2 630.9 1801.0 631.9 C1799.7 632.9 1798.6 634.2 1797.2 635.1 C1795.8 635.9 1794.2 636.4 1792.7 636.9 C1791.1 637.5 1789.6 638.4 1788.0 638.5 C1786.4 638.5 1784.0 637.4 1783.2 637.2  M1792.0 622.4 Q1786.4 623.8 1782.8 627.2 M1807.9 637.4 C1806.4 636.3 1801.4 633.6 1798.8 631.1 C1796.1 628.6 1793.5 625.6 1792.0 622.4 C1790.5 619.1 1790.1 613.3 1789.7 611.5  M1806.4 649.5 Q1803.7 655.1 1801.4 656.5 M1810.7 649.2 C1810.0 649.3 1807.8 649.6 1806.4 649.5 C1805.0 649.5 1803.6 649.1 1802.2 648.9 C1800.7 648.7 1799.2 648.7 1797.9 648.2 C1796.6 647.7 1795.0 646.2 1794.4 645.8  M1810.7 664.8 C1809.6 663.8 1806.2 660.9 1804.1 658.9 C1802.0 656.8 1800.1 654.4 1797.9 652.5 C1795.7 650.5 1791.9 648.1 1790.7 647.2  M1810.7 670.3 C1809.9 669.4 1807.9 666.1 1805.9 665.0 C1804.0 664.0 1801.3 664.0 1798.9 663.9 C1796.6 663.9 1794.2 664.0 1791.9 664.5 C1789.6 665.0 1786.4 666.6 1785.3 667.1  M1799.4 686.1 Q1800.1 679.8 1798.4 676.7 M1810.7 689.5 C1809.7 689.4 1806.6 689.5 1804.7 688.9 C1802.8 688.3 1801.1 687.1 1799.4 686.1 C1797.7 685.0 1795.3 683.2 1794.5 682.6  M1810.6 693.4 C1809.9 693.2 1807.7 692.4 1806.2 692.2 C1804.6 691.9 1802.9 692.5 1801.5 692.0 C1800.1 691.5 1799.2 689.7 1797.8 689.2 C1796.4 688.7 1794.6 689.3 1793.1 688.9 C1791.7 688.5 1789.7 687.2 1789.0 686.9  M1806.3 704.9 C1805.0 703.8 1800.2 701.0 1798.5 698.3 C1796.7 695.5 1796.8 691.6 1795.9 688.2 C1795.0 684.9 1793.6 680.0 1793.2 678.3  M1804.8 697.8 Q1809.7 698.4 1814.8 697.0 M1810.8 689.5 Q1808.7 684.0 1807.8 678.1 M1805.4 707.4 C1805.1 706.6 1803.6 704.3 1803.5 702.7 C1803.4 701.1 1804.1 699.2 1804.8 697.8 C1805.5 696.3 1806.9 695.1 1807.9 693.7 C1808.9 692.3 1809.6 690.6 1810.8 689.5 C1812.0 688.4 1814.5 687.4 1815.2 686.9  M1801.6 717.8 C1800.7 716.8 1797.7 714.1 1796.2 712.0 C1794.7 710.0 1793.8 707.4 1792.5 705.2 C1791.1 703.0 1789.3 701.0 1788.1 698.7 C1786.9 696.4 1785.8 692.6 1785.3 691.4  M1792.5 722.6 C1791.3 722.6 1787.6 722.0 1785.5 722.7 C1783.4 723.3 1781.7 725.3 1779.6 726.4 C1777.6 727.5 1774.3 728.6 1773.2 729.1  M1781.7 725.3 C1781.2 723.3 1780.3 716.9 1778.8 713.1 C1777.2 709.3 1775.0 705.5 1772.2 702.5 C1769.4 699.5 1763.9 696.3 1762.2 695.0  M1770.5 722.8 Q1764.6 717.4 1762.2 717.1 M1770.5 728.1 C1770.5 727.2 1770.1 724.5 1770.5 722.8 C1770.9 721.2 1772.4 719.8 1772.9 718.1 C1773.5 716.5 1773.2 714.5 1773.9 713.0 C1774.6 711.4 1775.9 710.0 1777.1 708.8 C1778.4 707.6 1780.7 706.3 1781.5 705.8  M1759.1 730.9 C1758.7 729.9 1757.5 726.8 1756.5 724.9 C1755.4 723.0 1754.4 720.8 1752.8 719.4 C1751.2 718.0 1747.8 717.1 1746.8 716.6  M1721.8 722.4 Q1717.8 720.9 1713.3 718.7 M1721.1 727.3 C1721.2 726.5 1721.7 724.0 1721.8 722.4 C1721.9 720.7 1721.4 719.0 1721.6 717.4 C1721.7 715.7 1722.9 714.1 1722.8 712.5 C1722.7 710.9 1721.2 709.4 1721.2 707.8 C1721.1 706.2 1722.4 703.8 1722.7 703.1  M1685.9 717.2 C1685.3 715.9 1683.9 711.8 1682.6 709.2 C1681.3 706.7 1679.4 704.4 1678.0 701.9 C1676.5 699.4 1676.0 696.1 1674.0 694.2 C1672.0 692.3 1667.4 691.2 1666.1 690.6  M1651.7 707.5 C1652.5 706.8 1655.0 705.2 1656.1 703.6 C1657.1 702.1 1657.7 700.1 1658.3 698.2 C1658.8 696.4 1658.8 694.4 1659.4 692.6 C1660.1 690.8 1661.9 688.4 1662.4 687.6  M1614.8 696.9 C1615.4 696.1 1617.7 693.7 1618.6 691.8 C1619.6 689.9 1620.4 687.7 1620.5 685.7 C1620.6 683.6 1619.4 681.4 1619.5 679.3 C1619.6 677.2 1621.0 674.2 1621.3 673.2  M1628.8 667.6 Q1632.2 665.9 1636.5 667.2 M1601.7 682.5 C1602.8 682.4 1606.0 682.1 1608.2 681.6 C1610.3 681.2 1612.6 680.9 1614.5 679.9 C1616.3 678.9 1617.5 676.6 1619.3 675.5 C1621.1 674.4 1623.8 674.5 1625.4 673.2 C1627.0 671.9 1628.2 668.5 1628.8 667.6  M1619.0 666.2 Q1617.2 660.9 1618.2 654.6 M1601.7 673.8 C1602.8 673.7 1606.3 674.0 1608.2 673.1 C1610.1 672.2 1611.0 669.6 1612.8 668.5 C1614.6 667.3 1616.9 666.8 1619.0 666.2 C1621.0 665.6 1624.3 665.0 1625.3 664.8  M1601.7 663.3 C1602.7 662.2 1605.2 658.1 1607.6 656.7 C1610.1 655.4 1613.5 655.9 1616.4 655.4 C1619.3 654.8 1623.6 653.7 1625.0 653.4  M1601.7 651.8 C1602.4 651.9 1604.3 652.5 1605.6 652.4 C1606.9 652.3 1608.0 651.2 1609.3 651.0 C1610.6 650.8 1612.0 651.3 1613.3 651.1 C1614.6 650.9 1615.9 650.4 1617.0 649.7 C1618.1 649.1 1619.5 647.6 1620.0 647.1  M1631.6 636.5 Q1633.9 630.0 1638.2 628.8 M1604.5 630.6 C1605.7 630.4 1609.3 629.3 1611.5 629.7 C1613.8 630.0 1615.7 632.1 1617.9 632.7 C1620.2 633.4 1622.7 633.2 1625.0 633.8 C1627.2 634.5 1630.5 636.1 1631.6 636.5  M1608.0 629.5 Q1605.0 634.4 1601.5 638.3 M1606.2 625.6 C1606.5 626.3 1607.1 628.4 1608.0 629.5 C1608.8 630.6 1610.1 631.3 1611.3 632.1 C1612.4 632.9 1613.7 633.5 1615.0 634.0 C1616.3 634.5 1618.4 635.0 1619.1 635.2  M1622.5 615.1 Q1621.9 618.7 1622.7 623.4 M1613.6 604.9 C1614.2 605.9 1615.2 609.5 1616.7 611.2 C1618.2 612.9 1620.5 613.9 1622.5 615.1 C1624.6 616.2 1627.1 616.6 1628.9 618.1 C1630.7 619.5 1631.5 622.2 1633.4 623.5 C1635.2 624.8 1638.9 625.4 1640.0 625.8  M1620.6 598.7 Q1626.2 599.8 1632.6 598.7 M1617.5 594.1 C1618.0 594.9 1619.2 597.6 1620.6 598.7 C1622.0 599.8 1624.4 599.7 1625.9 600.8 C1627.3 601.8 1628.3 603.6 1629.3 605.2 C1630.2 606.8 1631.3 609.4 1631.7 610.2  M1634.1 608.6 Q1629.8 611.5 1629.7 615.1 M1620.1 589.2 C1620.8 590.3 1622.9 593.8 1624.5 595.9 C1626.0 598.0 1628.0 599.9 1629.6 602.0 C1631.2 604.1 1632.5 606.5 1634.1 608.6 C1635.6 610.7 1638.2 613.8 1639.1 614.8  M1641.6 581.2 Q1643.4 585.3 1646.8 585.5 M1628.9 581.3 C1629.6 581.8 1631.4 583.7 1632.8 584.1 C1634.3 584.5 1636.1 584.2 1637.6 583.7 C1639.1 583.3 1640.2 581.7 1641.6 581.2 C1643.1 580.6 1644.9 580.9 1646.3 580.4 C1647.8 579.8 1649.7 578.2 1650.4 577.8  M1648.3 572.4 Q1647.5 576.3 1648.1 581.6 M1660.2 594.0 Q1666.4 600.1 1668.7 600.9 M1641.9 569.6 C1642.9 570.1 1646.2 571.4 1648.3 572.4 C1650.4 573.5 1652.6 574.4 1654.5 575.7 C1656.4 577.0 1658.5 578.4 1659.7 580.3 C1660.8 582.2 1661.2 584.8 1661.3 587.1 C1661.4 589.4 1660.4 592.9 1660.2 594.0  M1650.9 568.8 Q1651.3 571.4 1648.8 575.2 M1653.6 579.2 Q1658.7 580.6 1661.7 581.8 M1647.4 564.6 C1648.0 565.3 1650.1 567.2 1650.9 568.8 C1651.6 570.3 1651.5 572.3 1651.9 574.0 C1652.4 575.8 1652.6 577.8 1653.6 579.2 C1654.7 580.5 1657.1 580.7 1658.2 582.0 C1659.3 583.3 1660.0 586.1 1660.4 586.9  M1658.3 558.5 C1658.8 559.2 1660.8 561.1 1661.7 562.6 C1662.6 564.1 1663.5 565.8 1663.7 567.5 C1663.9 569.2 1663.7 571.2 1663.0 572.7 C1662.3 574.2 1660.0 575.9 1659.4 576.6  M1675.4 555.1 C1676.7 555.7 1680.5 557.4 1682.9 558.7 C1685.3 560.0 1687.5 562.3 1690.0 562.8 C1692.6 563.3 1695.4 561.9 1698.2 561.7 C1700.9 561.4 1705.0 561.4 1706.4 561.4  M1680.6 554.1 C1680.5 554.6 1680.1 556.3 1680.1 557.4 C1680.1 558.5 1680.4 559.6 1680.4 560.7 C1680.4 561.8 1680.5 563.0 1680.2 564.1 C1679.9 565.1 1679.0 566.0 1678.4 566.9 C1677.8 567.8 1676.9 569.3 1676.6 569.7  M1694.1 551.4 C1694.5 552.9 1696.9 557.3 1696.8 560.2 C1696.7 563.1 1694.1 565.8 1693.5 568.8 C1692.9 571.7 1692.3 575.1 1693.0 578.0 C1693.7 580.8 1696.8 584.6 1697.6 585.9 " stroke="#1e1e1e" stroke-width="4.0" fill="none" stroke-linecap="round" stroke-linejoin="round"/>
<path d="M1615 650 C1640 660 1660 670 1670 690 M1795 650 C1770 660 1750 670 1740 690" stroke="#2a2a2a" stroke-width="3.5" fill="none"/>
<ellipse cx="1655" cy="733" rx="32" ry="12" fill="#141414" filter="url(#sblur2)"/>
<ellipse cx="1765" cy="728" rx="35" ry="14" fill="#141414" filter="url(#sblur2)"/>
<ellipse cx="1708" cy="712" rx="22" ry="16" fill="#3a3a3a" filter="url(#sblur3)"/>
<path d="M1615 690 C1630 675 1650 665 1668 660 M1795 685 C1780 672 1760 662 1742 658" stroke="#262626" stroke-width="4" fill="none"/>
</g>
<path d="M1680 628 C1690 640 1700 645 1704 640 C1710 645 1722 640 1732 628 C1726 648 1712 654 1705 652 C1695 654 1684 646 1680 628Z" fill="#121212"/>
<path d="M1705 552 V640 M1705 655 V685" stroke="#2a2a2a" stroke-width="2"/>
<ellipse cx="1704" cy="668" rx="3" ry="10" fill="#1a1a1a"/>
<g clip-path="url(#coc)"><rect x="1570" y="525" width="280" height="360" fill="#000" filter="url(#stex)" opacity=".3"/><rect x="1570" y="745" width="280" height="140" fill="#fff" filter="url(#stexw)" opacity=".3"/></g>
<g stroke="#fff" stroke-width="1" fill="none">
<path d="M703.5 510 V883 M1003.5 510 V883"/>
<path d="M1088.5 883 V597.5 H1478.5 V883"/>
<path d="M1552.5 883 V597.5 H1852.5 V883"/>
</g>
<g stroke="#10e010" stroke-width="2.5" fill="none"><rect x="893" y="711" width="32" height="32"/><rect x="1298" y="590" width="31" height="31"/><rect x="1742" y="590" width="32" height="31"/></g>
<circle cx="853" cy="696" r="3" fill="#f0b020"/>
<circle cx="703.5" cy="696" r="3" fill="#8a50d0"/>
<circle cx="1003.5" cy="696" r="3" fill="#c090d8"/>
<circle cx="1283" cy="597" r="3" fill="#80d0c8"/>
<circle cx="1283" cy="777" r="3" fill="#f0b020"/>
<circle cx="1088.5" cy="777" r="3" fill="#e07020"/>
<circle cx="1478.5" cy="777" r="3" fill="#c02040"/>
<circle cx="1702" cy="597" r="3" fill="#80d0c8"/>
<circle cx="1702" cy="777" r="3" fill="#f0b020"/>
<circle cx="1552.5" cy="777" r="3" fill="#8a50d0"/>
<circle cx="1852.5" cy="777" r="3" fill="#c090d8"/>
<text x="651" y="859" font-family="Liberation Serif" font-size="15.2" fill="#fff">B: P19968_56691</text>
<text x="1076" y="859" font-family="Liberation Serif" font-size="15.2" fill="#fff">B: P19968_56691</text>
<text x="1500" y="859" font-family="Liberation Serif" font-size="15.2" fill="#fff">B: P19968_56691</text>
</svg>
<!-- splitter dots -->
<div class="a" style="left:953px;top:886px;width:16px;height:1px;border-top:1px dotted #aaa"></div>
<!-- python interactor -->
<div class="t" style="left:4px;top:894px">Python Interactor</div>
<svg class="a" style="left:1892px;top:893px" width="26" height="12"><rect x="0.5" y="0.5" width="10" height="10" rx="2" fill="none" stroke="#777"/><rect x="2.5" y="4.5" width="4" height="4" fill="none" stroke="#555"/><rect x="4.5" y="2.5" width="4" height="4" fill="none" stroke="#555"/><rect x="14.5" y="0.5" width="10" height="10" rx="2" fill="none" stroke="#777"/><path d="M17 3 L22 8 M22 3 L17 8" stroke="#444" stroke-width="1.6"/></svg>
<div class="a" style="left:0;top:909px;width:1920px;height:85px;border:1px solid #bfbfbf;background:#fff"></div>
<div class="t" style="left:5px;top:909px;font-size:12.8px;line-height:16px;color:#222;letter-spacing:.3px">&gt;&gt;&gt;
&gt;&gt;&gt;
&gt;&gt;&gt;
&gt;&gt;&gt;
&gt;&gt;&gt;</div>
<div class="a" style="left:1902px;top:910px;width:17px;height:83px;border-left:1px solid #d4d4d4;background:#fff"></div>
<div class="a" style="left:1903px;top:926px;width:16px;height:17px;background:#f0f0f0;border-top:1px solid #d4d4d4;border-bottom:1px solid #d4d4d4"></div>
<div class="a" style="left:1903px;top:976px;width:16px;height:1px;background:#d4d4d4"></div>
<div class="tri-up" style="left:1906px;top:915px"></div>
<div class="tri-dn" style="left:1906px;top:982px"></div>
<!-- status bar error button -->
<div class="a" style="left:1887px;top:998px;width:31px;height:30px;border:1px solid #cfcfcf;border-radius:3px;background:#fafafa"></div>
<svg class="a" style="left:1891px;top:1001px" width="24" height="24"><circle cx="12" cy="12" r="11" fill="#e8401e"/><path d="M7 7 L17 17 M17 7 L7 17" stroke="#fff" stroke-width="2"/></svg>
<!-- taskbar -->
<div class="a" style="left:0;top:1030px;width:1920px;height:50px;background:#0b0b0b"></div>
<svg class="a" style="left:19px;top:1045px" width="22" height="21"><path d="M0 3 L9 1.7 V10 H0Z M10 1.5 L21 0 V10 H10Z M0 11 H9 V19.3 L0 18Z M10 11 H21 V21 L10 19.5Z" fill="#fff"/></svg>
<div class="a" style="left:60px;top:1030px;width:430px;height:50px;background:#353535"></div>
<div class="a" style="left:71px;top:1041px;width:28px;height:28px;border:3.5px solid #d8d8d8;border-radius:50%"></div>
<div class="t" style="left:110px;top:1046px;font-size:17px;color:#b4b4b4">Escribe aquí para buscar</div>
<svg class="a" style="left:455px;top:1043px" width="20" height="24"><rect x="6" y="1" width="7" height="13" rx="3.5" fill="none" stroke="#bbb" stroke-width="1.5"/><path d="M3 10 C3 17 16 17 16 10 M9.5 16 V21 M6 21.5 H13" stroke="#bbb" stroke-width="1.5" fill="none"/></svg>
<svg class="a" style="left:508px;top:1045px" width="24" height="22"><rect x="3" y="5" width="12" height="12" fill="none" stroke="#fff" stroke-width="1.5"/><path d="M1 2 H17 M1 20 H17 M21 2 V6 M21 9 V20" stroke="#fff" stroke-width="1.5"/></svg>
<!-- app icons -->
<svg class="a" style="left:560px;top:1038px" width="980" height="36">
 <!-- explorer 576 -->
 <path d="M3 7 H14 L17 10 H30 V30 H3Z" fill="#f4c342"/><path d="M3 12 H30 V30 H3Z" fill="#f8d866"/><rect x="9" y="20" width="14" height="10" fill="#1e90d8"/><rect x="12" y="24" width="8" height="6" fill="#f8d866"/>
 <!-- word 622 -->
 <rect x="622" y="0" width="0" height="0"/>
 <g transform="translate(46 0)"><rect x="10" y="6" width="17" height="22" fill="#fff"/><path d="M10 9 H25 M10 13 H25 M10 17 H25 M10 21 H25 M10 25 H25" stroke="#2b579a" stroke-width="1.5"/><path d="M0 6 L16 3 V33 L0 30Z" fill="#2b579a"/><text x="8" y="23" font-family="Liberation Sans" font-weight="bold" font-size="12" fill="#fff" text-anchor="middle">W</text></g>
 <g transform="translate(92 0)"><rect x="10" y="6" width="17" height="22" fill="#fff"/><path d="M10 9 H25 M10 13 H25 M10 17 H25 M10 21 H25 M10 25 H25 M17 6 V28" stroke="#217346" stroke-width="1.5"/><path d="M0 6 L16 3 V33 L0 30Z" fill="#217346"/><text x="8" y="23" font-family="Liberation Sans" font-weight="bold" font-size="12" fill="#fff" text-anchor="middle">X</text></g>
 <g transform="translate(140 0)"><rect x="10" y="4" width="17" height="18" fill="#1a70c8"/><path d="M0 6 L16 3 V33 L0 30Z" fill="#0a5aa8"/><text x="8" y="23" font-family="Liberation Sans" font-weight="bold" font-size="12" fill="#fff" text-anchor="middle">O</text><rect x="13" y="17" width="17" height="14" fill="#f0c080"/><path d="M13 17 L21.5 25 L30 17" stroke="#b8864a" fill="none"/></g>
 <g transform="translate(185 0)"><rect x="10" y="6" width="17" height="22" fill="#fff"/><path d="M0 6 L16 3 V33 L0 30Z" fill="#d24726"/><rect x="16" y="7" width="11" height="20" fill="#e8683a"/><text x="8" y="23" font-family="Liberation Sans" font-weight="bold" font-size="12" fill="#fff" text-anchor="middle">P</text></g>
 <g transform="translate(247 17)"><circle r="14" fill="#db4437"/><path d="M0 0 L12.1 7 A14 14 0 0 1 -12.1 7Z" fill="#0f9d58"/><path d="M0 0 L-12.1 7 A14 14 0 0 1 0 -14Z" fill="#f4b400"/><path d="M0 -14 A14 14 0 0 1 12.1 7 L0 0Z" fill="#db4437"/><circle r="6.5" fill="#fff"/><circle r="5" fill="#4285f4"/></g>
 <g transform="translate(279 2)"><rect x="0" y="0" width="27" height="28" fill="#e8f0fa"/><path d="M3 3 L9 22 L15 3" stroke="#1a5ab0" stroke-width="4" fill="none"/><path d="M14 14 L25 24 L18 28 Z" fill="#6aa0e0"/></g>
 <g transform="translate(325 2)"><rect x="8" y="0" width="16" height="13" fill="#3a3a9a" stroke="#ddd"/><rect x="0" y="16" width="16" height="12" fill="#3a3a9a" stroke="#ddd"/><path d="M6 26 L24 6" stroke="#f8e020" stroke-width="3"/></g>
 <g transform="translate(370 1)"><rect x="0" y="0" width="30" height="30" rx="3" fill="#2e8ae8"/><text x="15" y="22" font-family="Liberation Sans" font-size="19" fill="#fff" text-anchor="middle">Vc</text></g>
 <g transform="translate(416 1)"><path d="M15 0 L29 7 V23 L15 30 L1 23 V7Z" fill="#7a8a8a" stroke="#ccd" stroke-width="1.5"/><text x="15" y="13" font-family="Liberation Sans" font-size="7" fill="#fff" text-anchor="middle">MPLAB</text><text x="15" y="22" font-family="Liberation Sans" font-weight="bold" font-size="8" fill="#fff" text-anchor="middle">X IDE</text></g>
 <g transform="translate(478 17)"><circle r="14" fill="#1a3a3a" stroke="#6a8a8a" stroke-width="1.5"/><path d="M-4 -6 C-4 -11 4 -11 4 -6 C4 -1 2 1 0 2 C-2 1 -4 -1 -4 -6Z M-2 2 L-3 8 M2 2 L3 8" fill="#3ac0b0" stroke="#3ac0b0" stroke-width="1.5"/></g>
 <g transform="translate(508 2)"><rect x="0" y="0" width="30" height="30" fill="#bf0000" stroke="#ee5555" stroke-dasharray="1 1"/><text x="15" y="23" font-family="Liberation Sans" font-weight="bold" font-style="italic" font-size="19" fill="#fff" text-anchor="middle">Fz</text></g>
 <g transform="translate(569 17)"><circle r="14" fill="#2a4a8a" stroke="#b8c8e8" stroke-width="2"/><rect x="-6" y="-1" width="12" height="9" fill="#fff"/><path d="M-4 -1 V-5 C-4 -10 4 -10 4 -5 V-1" stroke="#fff" stroke-width="2.5" fill="none"/></g>
 <g transform="translate(600 1)"><rect x="0" y="2" width="24" height="28" fill="#e8f0c0" stroke="#8ab040"/><circle cx="12" cy="17" r="7" fill="#80c040"/><path d="M20 20 L28 0" stroke="#d0a020" stroke-width="3"/></g>
 <g transform="translate(660 17)"><circle r="14" fill="#f08020"/><circle cx="3" r="13" fill="#0b0b0b"/><ellipse cx="3" rx="11" ry="10" fill="#3a3a8a"/><path d="M-8 -4 H14 M-8 0 H14 M-8 4 H14" stroke="#fff" stroke-width="1.6"/></g>
 <g transform="translate(692 1)"><path d="M22 0 L30 4 V28 L22 32 L8 19 L3 23 L0 21 V11 L3 9 L8 13Z M22 8 L13 16 L22 24Z" fill="#8a50d8"/></g>
 <g transform="translate(753 17)"><circle r="14" fill="#d8d8e0"/><circle cx="-1" cy="-2" r="12" fill="#eef"/><path d="M-4 -11 C4 -13 11 -6 10 2 L-4 2Z" fill="#4a4a6a"/><rect x="-2" y="-8" width="9" height="9" fill="#e8a020"/><rect x="2" y="-8" width="5" height="5" fill="#30a040"/><rect x="-2" y="-4" width="4" height="5" fill="#e03030"/><path d="M-13 4 C-5 10 7 10 13 4 L10 10 C5 15 -5 15 -10 10Z" fill="#5a4040" opacity=".6"/></g>
 <g transform="translate(800 17)"><circle r="14" fill="#d8d8e0"/><circle cx="-1" cy="-2" r="12" fill="#eef"/><path d="M-4 -11 C4 -13 11 -6 10 2 L-4 2Z" fill="#4a4a6a"/><rect x="-2" y="-8" width="9" height="9" fill="#e8a020"/><rect x="2" y="-8" width="5" height="5" fill="#30a040"/><rect x="-2" y="-4" width="4" height="5" fill="#e03030"/><path d="M-13 4 C-5 10 7 10 13 4 L10 10 C5 15 -5 15 -10 10Z" fill="#5a4040" opacity=".6"/></g>
 <g transform="translate(832 0)"><rect x="0" y="2" width="26" height="30" fill="#e0e8f0"/><path d="M3 4 L23 30 M23 4 L3 30" stroke="#2a4a8a" stroke-width="3"/><rect x="0" y="2" width="26" height="30" fill="none" stroke="#aab"/></g>
 <g transform="translate(891 17)"><circle r="13" fill="#111" stroke="#ddd" stroke-width="1.5"/><text x="-1" y="7" font-family="Liberation Serif" font-size="17" fill="#eee" text-anchor="middle">i</text><text x="5" y="0" font-family="Liberation Serif" font-size="11" fill="#eee">3</text></g>
 <rect x="916" y="-8" width="44" height="50" fill="#3c3c3c"/>
 <g transform="translate(937 17)"><circle r="15" fill="#d8d8e0"/><circle cx="-1" cy="-2" r="13" fill="#eef"/><path d="M-4 -12 C4 -14 12 -6 11 2 L-4 2Z" fill="#4a4a6a"/><rect x="-2" y="-9" width="10" height="10" fill="#e8a020"/><rect x="3" y="-9" width="5" height="5" fill="#30a040"/><rect x="-2" y="-4" width="5" height="5" fill="#e03030"/><path d="M-14 4 C-5 11 7 11 14 4 L10 11 C5 16 -5 16 -10 11Z" fill="#5a4040" opacity=".6"/></g>
</svg>
<div class="a" style="left:699px;top:1077px;width:35px;height:3px;background:#76b9ed"></div>
<div class="a" style="left:791px;top:1077px;width:35px;height:3px;background:#76b9ed"></div>
<div class="a" style="left:1159px;top:1077px;width:35px;height:3px;background:#76b9ed"></div>
<div class="a" style="left:1476px;top:1077px;width:44px;height:3px;background:#76b9ed"></div>
<div class="a" style="left:1525px;top:1030px;width:21px;height:50px;background:#e8e8e8"></div>
<svg class="a" style="left:1528px;top:1038px" width="16" height="36"><path d="M3 7 L8 2 L13 7 M3 26 L8 31 L13 26" stroke="#555" stroke-width="1.6" fill="none"/></svg>
<svg class="a" style="left:1568px;top:1040px" width="340" height="34">
 <g stroke="#fff" stroke-width="1.5" fill="none"><circle cx="10" cy="10" r="4"/><path d="M4 22 C4 14 16 14 16 22"/><circle cx="19" cy="6" r="4"/><path d="M14 13 C18 10 26 12 26 18"/></g>
 <path d="M52 18 L59 11 L66 18" stroke="#fff" stroke-width="1.6" fill="none"/>
 <g fill="none" stroke="#fff" stroke-width="1.5"><rect x="80" y="9" width="18" height="10"/><path d="M99 12 V16"/></g><rect x="82" y="11" width="14" height="6" fill="#fff"/><path d="M78 6 V10 M80 6 V10" stroke="#fff"/>
 <g stroke="#fff" stroke-width="1.4" fill="none"><path d="M114 20 A14 14 0 0 1 128 6 M117 20 A10 10 0 0 1 128 10 M121 20 A6 6 0 0 1 128 14"/></g><circle cx="127" cy="19" r="1.5" fill="#fff"/>
 <g stroke="#fff" stroke-width="1.4" fill="none"><path d="M139 10 H143 L149 5 V23 L143 18 H139Z M153 9 C156 12 156 16 153 19 M157 6 C161 11 161 17 157 22"/></g>
 <g fill="#fff"><path d="M172 5 L177 8 L172 11 L167 8Z M182 5 L187 8 L182 11 L177 8Z M172 11 L177 14 L172 17 L167 14Z M182 11 L187 14 L182 17 L177 14Z M177 15 L182 18 L177 21 L172 18Z"/></g><circle cx="185" cy="20" r="6" fill="#e81123"/><path d="M182.5 17.5 L187.5 22.5 M187.5 17.5 L182.5 22.5" stroke="#fff" stroke-width="1.4"/>
</svg>
<div class="t" style="left:1792px;top:1036px;font-size:15px;color:#fff">9:51</div>
<div class="t" style="left:1770px;top:1059px;font-size:15px;color:#fff">28/06/2019</div>
<svg class="a" style="left:1864px;top:1040px" width="36" height="36"><path d="M4 3 H25 V17 H12 L8 21 V17 H4Z" fill="#fff"/><path d="M8 7 H21 M8 10 H21 M8 13 H17" stroke="#111" stroke-width="1.2"/><circle cx="24" cy="26" r="7.5" fill="#111" stroke="#bbb" stroke-width="1.3"/><text x="24" y="31" font-family="Liberation Sans" font-size="12" fill="#fff" text-anchor="middle">1</text></svg>

</body></html>
